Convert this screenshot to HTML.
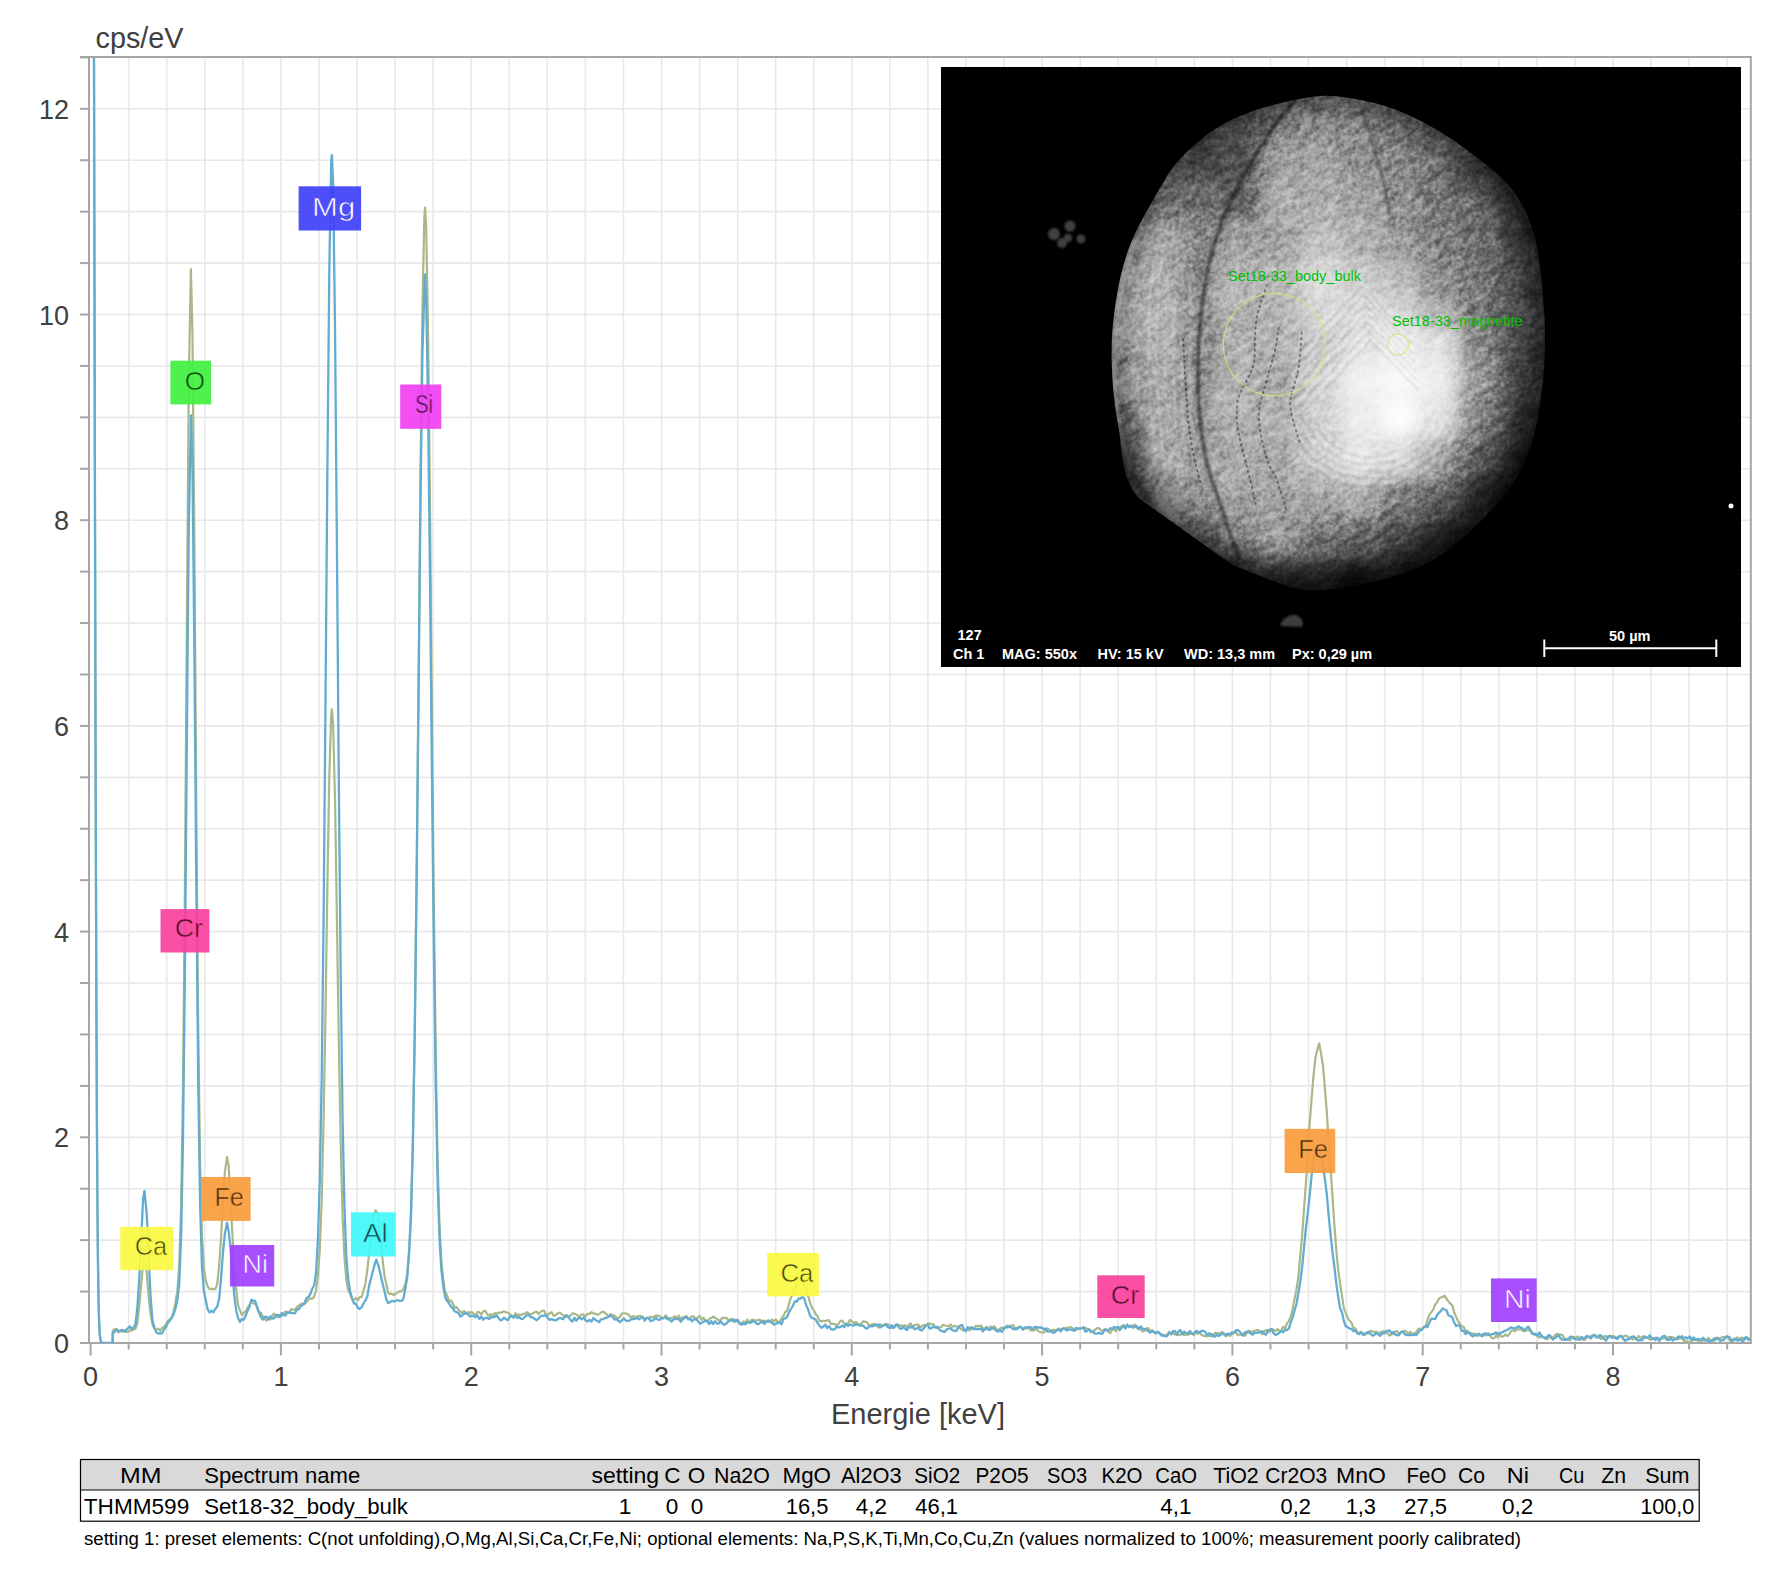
<!DOCTYPE html>
<html><head><meta charset="utf-8"><style>
html,body{margin:0;padding:0;background:#fff;}
body{width:1782px;height:1578px;overflow:hidden;position:relative;}
svg{position:absolute;left:0;top:0;}
text{font-family:"Liberation Sans",sans-serif;}
</style></head><body>
<svg width="1782" height="1578" viewBox="0 0 1782 1578">
<g stroke="#e8e8e8" stroke-width="1.6"><line x1="128.66" y1="57.0" x2="128.66" y2="1343.0"/><line x1="166.72" y1="57.0" x2="166.72" y2="1343.0"/><line x1="204.78" y1="57.0" x2="204.78" y2="1343.0"/><line x1="242.84" y1="57.0" x2="242.84" y2="1343.0"/><line x1="280.90" y1="57.0" x2="280.90" y2="1343.0"/><line x1="318.96" y1="57.0" x2="318.96" y2="1343.0"/><line x1="357.02" y1="57.0" x2="357.02" y2="1343.0"/><line x1="395.08" y1="57.0" x2="395.08" y2="1343.0"/><line x1="433.14" y1="57.0" x2="433.14" y2="1343.0"/><line x1="471.20" y1="57.0" x2="471.20" y2="1343.0"/><line x1="509.26" y1="57.0" x2="509.26" y2="1343.0"/><line x1="547.32" y1="57.0" x2="547.32" y2="1343.0"/><line x1="585.38" y1="57.0" x2="585.38" y2="1343.0"/><line x1="623.44" y1="57.0" x2="623.44" y2="1343.0"/><line x1="661.50" y1="57.0" x2="661.50" y2="1343.0"/><line x1="699.56" y1="57.0" x2="699.56" y2="1343.0"/><line x1="737.62" y1="57.0" x2="737.62" y2="1343.0"/><line x1="775.68" y1="57.0" x2="775.68" y2="1343.0"/><line x1="813.74" y1="57.0" x2="813.74" y2="1343.0"/><line x1="851.80" y1="57.0" x2="851.80" y2="1343.0"/><line x1="889.86" y1="57.0" x2="889.86" y2="1343.0"/><line x1="927.92" y1="57.0" x2="927.92" y2="1343.0"/><line x1="965.98" y1="57.0" x2="965.98" y2="1343.0"/><line x1="1004.04" y1="57.0" x2="1004.04" y2="1343.0"/><line x1="1042.10" y1="57.0" x2="1042.10" y2="1343.0"/><line x1="1080.16" y1="57.0" x2="1080.16" y2="1343.0"/><line x1="1118.22" y1="57.0" x2="1118.22" y2="1343.0"/><line x1="1156.28" y1="57.0" x2="1156.28" y2="1343.0"/><line x1="1194.34" y1="57.0" x2="1194.34" y2="1343.0"/><line x1="1232.40" y1="57.0" x2="1232.40" y2="1343.0"/><line x1="1270.46" y1="57.0" x2="1270.46" y2="1343.0"/><line x1="1308.52" y1="57.0" x2="1308.52" y2="1343.0"/><line x1="1346.58" y1="57.0" x2="1346.58" y2="1343.0"/><line x1="1384.64" y1="57.0" x2="1384.64" y2="1343.0"/><line x1="1422.70" y1="57.0" x2="1422.70" y2="1343.0"/><line x1="1460.76" y1="57.0" x2="1460.76" y2="1343.0"/><line x1="1498.82" y1="57.0" x2="1498.82" y2="1343.0"/><line x1="1536.88" y1="57.0" x2="1536.88" y2="1343.0"/><line x1="1574.94" y1="57.0" x2="1574.94" y2="1343.0"/><line x1="1613.00" y1="57.0" x2="1613.00" y2="1343.0"/><line x1="1651.06" y1="57.0" x2="1651.06" y2="1343.0"/><line x1="1689.12" y1="57.0" x2="1689.12" y2="1343.0"/><line x1="1727.18" y1="57.0" x2="1727.18" y2="1343.0"/><line x1="89" y1="1291.58" x2="1750.8" y2="1291.58"/><line x1="89" y1="1240.15" x2="1750.8" y2="1240.15"/><line x1="89" y1="1188.72" x2="1750.8" y2="1188.72"/><line x1="89" y1="1137.30" x2="1750.8" y2="1137.30"/><line x1="89" y1="1085.88" x2="1750.8" y2="1085.88"/><line x1="89" y1="1034.45" x2="1750.8" y2="1034.45"/><line x1="89" y1="983.03" x2="1750.8" y2="983.03"/><line x1="89" y1="931.60" x2="1750.8" y2="931.60"/><line x1="89" y1="880.17" x2="1750.8" y2="880.17"/><line x1="89" y1="828.75" x2="1750.8" y2="828.75"/><line x1="89" y1="777.33" x2="1750.8" y2="777.33"/><line x1="89" y1="725.90" x2="1750.8" y2="725.90"/><line x1="89" y1="674.48" x2="1750.8" y2="674.48"/><line x1="89" y1="623.05" x2="1750.8" y2="623.05"/><line x1="89" y1="571.62" x2="1750.8" y2="571.62"/><line x1="89" y1="520.20" x2="1750.8" y2="520.20"/><line x1="89" y1="468.78" x2="1750.8" y2="468.78"/><line x1="89" y1="417.35" x2="1750.8" y2="417.35"/><line x1="89" y1="365.93" x2="1750.8" y2="365.93"/><line x1="89" y1="314.50" x2="1750.8" y2="314.50"/><line x1="89" y1="263.08" x2="1750.8" y2="263.08"/><line x1="89" y1="211.65" x2="1750.8" y2="211.65"/><line x1="89" y1="160.23" x2="1750.8" y2="160.23"/><line x1="89" y1="108.80" x2="1750.8" y2="108.80"/></g>
<g stroke="#a6a6a6" stroke-width="2"><line x1="80" y1="1343.00" x2="89" y2="1343.00"/><line x1="80" y1="1291.58" x2="89" y2="1291.58"/><line x1="80" y1="1240.15" x2="89" y2="1240.15"/><line x1="80" y1="1188.72" x2="89" y2="1188.72"/><line x1="80" y1="1137.30" x2="89" y2="1137.30"/><line x1="80" y1="1085.88" x2="89" y2="1085.88"/><line x1="80" y1="1034.45" x2="89" y2="1034.45"/><line x1="80" y1="983.03" x2="89" y2="983.03"/><line x1="80" y1="931.60" x2="89" y2="931.60"/><line x1="80" y1="880.17" x2="89" y2="880.17"/><line x1="80" y1="828.75" x2="89" y2="828.75"/><line x1="80" y1="777.33" x2="89" y2="777.33"/><line x1="80" y1="725.90" x2="89" y2="725.90"/><line x1="80" y1="674.48" x2="89" y2="674.48"/><line x1="80" y1="623.05" x2="89" y2="623.05"/><line x1="80" y1="571.62" x2="89" y2="571.62"/><line x1="80" y1="520.20" x2="89" y2="520.20"/><line x1="80" y1="468.78" x2="89" y2="468.78"/><line x1="80" y1="417.35" x2="89" y2="417.35"/><line x1="80" y1="365.93" x2="89" y2="365.93"/><line x1="80" y1="314.50" x2="89" y2="314.50"/><line x1="80" y1="263.08" x2="89" y2="263.08"/><line x1="80" y1="211.65" x2="89" y2="211.65"/><line x1="80" y1="160.23" x2="89" y2="160.23"/><line x1="80" y1="108.80" x2="89" y2="108.80"/><line x1="80" y1="57.38" x2="89" y2="57.38"/><line x1="90.60" y1="1343.0" x2="90.60" y2="1355.5"/><line x1="128.66" y1="1343.0" x2="128.66" y2="1349.5"/><line x1="166.72" y1="1343.0" x2="166.72" y2="1349.5"/><line x1="204.78" y1="1343.0" x2="204.78" y2="1349.5"/><line x1="242.84" y1="1343.0" x2="242.84" y2="1349.5"/><line x1="280.90" y1="1343.0" x2="280.90" y2="1355.5"/><line x1="318.96" y1="1343.0" x2="318.96" y2="1349.5"/><line x1="357.02" y1="1343.0" x2="357.02" y2="1349.5"/><line x1="395.08" y1="1343.0" x2="395.08" y2="1349.5"/><line x1="433.14" y1="1343.0" x2="433.14" y2="1349.5"/><line x1="471.20" y1="1343.0" x2="471.20" y2="1355.5"/><line x1="509.26" y1="1343.0" x2="509.26" y2="1349.5"/><line x1="547.32" y1="1343.0" x2="547.32" y2="1349.5"/><line x1="585.38" y1="1343.0" x2="585.38" y2="1349.5"/><line x1="623.44" y1="1343.0" x2="623.44" y2="1349.5"/><line x1="661.50" y1="1343.0" x2="661.50" y2="1355.5"/><line x1="699.56" y1="1343.0" x2="699.56" y2="1349.5"/><line x1="737.62" y1="1343.0" x2="737.62" y2="1349.5"/><line x1="775.68" y1="1343.0" x2="775.68" y2="1349.5"/><line x1="813.74" y1="1343.0" x2="813.74" y2="1349.5"/><line x1="851.80" y1="1343.0" x2="851.80" y2="1355.5"/><line x1="889.86" y1="1343.0" x2="889.86" y2="1349.5"/><line x1="927.92" y1="1343.0" x2="927.92" y2="1349.5"/><line x1="965.98" y1="1343.0" x2="965.98" y2="1349.5"/><line x1="1004.04" y1="1343.0" x2="1004.04" y2="1349.5"/><line x1="1042.10" y1="1343.0" x2="1042.10" y2="1355.5"/><line x1="1080.16" y1="1343.0" x2="1080.16" y2="1349.5"/><line x1="1118.22" y1="1343.0" x2="1118.22" y2="1349.5"/><line x1="1156.28" y1="1343.0" x2="1156.28" y2="1349.5"/><line x1="1194.34" y1="1343.0" x2="1194.34" y2="1349.5"/><line x1="1232.40" y1="1343.0" x2="1232.40" y2="1355.5"/><line x1="1270.46" y1="1343.0" x2="1270.46" y2="1349.5"/><line x1="1308.52" y1="1343.0" x2="1308.52" y2="1349.5"/><line x1="1346.58" y1="1343.0" x2="1346.58" y2="1349.5"/><line x1="1384.64" y1="1343.0" x2="1384.64" y2="1349.5"/><line x1="1422.70" y1="1343.0" x2="1422.70" y2="1355.5"/><line x1="1460.76" y1="1343.0" x2="1460.76" y2="1349.5"/><line x1="1498.82" y1="1343.0" x2="1498.82" y2="1349.5"/><line x1="1536.88" y1="1343.0" x2="1536.88" y2="1349.5"/><line x1="1574.94" y1="1343.0" x2="1574.94" y2="1349.5"/><line x1="1613.00" y1="1343.0" x2="1613.00" y2="1355.5"/><line x1="1651.06" y1="1343.0" x2="1651.06" y2="1349.5"/><line x1="1689.12" y1="1343.0" x2="1689.12" y2="1349.5"/><line x1="1727.18" y1="1343.0" x2="1727.18" y2="1349.5"/>
<line x1="80" y1="57" x2="1751.8" y2="57"/>
<line x1="89" y1="56" x2="89" y2="1344"/>
<line x1="80" y1="1343.0" x2="1751.8" y2="1343.0"/>
<line x1="1750.8" y1="56" x2="1750.8" y2="1344"/>
</g>
<g fill="#404040" font-size="27"><text x="69" y="1353.0" text-anchor="end">0</text><text x="69" y="1147.3" text-anchor="end">2</text><text x="69" y="941.6" text-anchor="end">4</text><text x="69" y="735.9" text-anchor="end">6</text><text x="69" y="530.2" text-anchor="end">8</text><text x="69" y="324.5" text-anchor="end">10</text><text x="69" y="118.8" text-anchor="end">12</text><text x="90.6" y="1386" text-anchor="middle">0</text><text x="280.9" y="1386" text-anchor="middle">1</text><text x="471.2" y="1386" text-anchor="middle">2</text><text x="661.5" y="1386" text-anchor="middle">3</text><text x="851.8" y="1386" text-anchor="middle">4</text><text x="1042.1" y="1386" text-anchor="middle">5</text><text x="1232.4" y="1386" text-anchor="middle">6</text><text x="1422.7" y="1386" text-anchor="middle">7</text><text x="1613.0" y="1386" text-anchor="middle">8</text></g>
<text x="95.5" y="47.5" fill="#404040" font-size="29.5" textLength="88" lengthAdjust="spacingAndGlyphs">cps/eV</text>
<text x="831" y="1423.6" fill="#404040" font-size="29" textLength="174" lengthAdjust="spacingAndGlyphs">Energie [keV]</text>
<clipPath id="plotclip"><rect x="89" y="58" width="1661.8" height="1285.0"/></clipPath>
<g clip-path="url(#plotclip)" fill="none" stroke-linejoin="round">
<path d="M92.0 40.0L92.5 40.0L93.0 40.0L93.5 40.0L94.0 60.3L94.5 289.6L95.0 515.0L95.5 720.0L96.0 894.3L96.5 1033.7L97.0 1138.9L97.5 1214.1L98.0 1265.1L98.5 1297.9L99.0 1318.0L99.5 1329.8L100.0 1336.3L100.5 1339.7L101.0 1341.5L101.5 1342.3L101.9 1343.0L112.6 1343.0L112.7 1330.6L114.6 1329.3L116.5 1328.9L118.4 1332.5L120.3 1331.2L122.2 1331.3L124.1 1330.6L126.0 1332.0L127.9 1332.0L129.8 1330.4L131.7 1330.7L133.6 1329.3L135.5 1329.0L137.4 1322.9L139.3 1305.6L141.2 1284.2L143.1 1264.1L144.5 1258.7L146.9 1274.0L148.8 1298.9L150.7 1314.9L152.6 1325.0L154.5 1328.6L156.4 1329.9L158.3 1328.6L160.2 1330.8L162.1 1327.9L164.0 1327.2L165.9 1324.4L167.8 1321.1L169.7 1319.5L171.6 1317.7L173.5 1311.5L175.4 1303.0L177.3 1291.1L179.2 1266.2L181.1 1206.3L183.0 1087.7L184.9 888.3L186.8 629.9L188.7 388.6L190.9 269.2L192.5 335.2L194.4 544.2L196.3 804.8L198.2 1024.7L200.1 1165.3L202.0 1236.3L203.9 1268.5L205.8 1280.6L207.7 1286.3L209.6 1289.2L211.5 1288.6L213.4 1289.3L215.3 1289.0L217.2 1284.3L219.1 1266.3L221.0 1238.8L222.9 1202.7L224.8 1172.7L227.0 1156.8L228.6 1165.1L230.5 1197.2L232.4 1234.5L234.3 1270.8L236.2 1290.0L238.1 1305.2L240.0 1310.5L241.9 1314.9L243.8 1312.8L245.7 1311.5L247.6 1307.6L249.5 1305.0L251.4 1302.2L253.3 1303.5L255.2 1303.5L257.1 1307.0L259.0 1312.4L260.9 1312.7L262.8 1316.3L264.7 1318.9L266.6 1320.6L268.5 1319.2L270.4 1319.4L272.3 1315.5L274.2 1313.6L276.1 1316.0L278.0 1317.2L279.9 1315.3L281.8 1315.9L283.7 1313.9L285.6 1311.4L287.5 1312.8L289.4 1312.2L291.3 1309.1L293.2 1309.7L295.1 1310.0L297.0 1306.9L298.9 1305.5L300.8 1303.9L302.7 1303.6L304.6 1304.1L306.5 1302.1L308.4 1299.6L310.3 1298.4L312.2 1298.8L314.1 1296.6L316.0 1290.5L317.9 1275.9L319.8 1249.7L321.7 1200.4L323.6 1118.9L325.5 1011.6L327.4 885.1L329.3 776.1L331.2 714.5L331.9 709.4L333.1 724.7L335.0 798.6L336.9 919.2L338.8 1041.6L340.7 1144.3L342.6 1217.2L344.5 1258.5L346.4 1280.4L348.3 1290.7L350.2 1293.9L352.1 1299.0L354.0 1299.6L355.9 1298.0L357.8 1300.5L359.7 1297.1L361.6 1297.0L363.5 1290.6L365.4 1283.7L367.3 1269.8L369.2 1252.5L371.1 1235.9L373.0 1218.3L375.4 1210.3L376.8 1212.1L378.7 1223.8L380.6 1240.9L382.5 1259.0L384.4 1275.4L386.3 1283.8L388.2 1293.3L390.1 1293.8L392.0 1293.8L393.9 1295.1L395.8 1293.4L397.7 1292.4L399.6 1291.3L401.5 1291.3L403.4 1289.1L405.3 1284.1L407.2 1273.9L409.1 1249.6L411.0 1210.7L412.9 1139.5L414.8 1026.5L416.7 866.3L418.6 674.1L420.5 473.9L422.4 309.0L424.3 218.2L425.1 207.5L426.2 227.6L428.1 333.5L430.0 505.7L431.9 708.5L433.8 900.4L435.7 1051.5L437.6 1159.6L439.5 1224.6L441.4 1262.2L443.3 1279.9L445.2 1292.1L447.1 1295.4L449.0 1300.9L450.9 1300.5L452.8 1303.1L454.7 1308.0L456.6 1307.0L458.5 1309.9L460.4 1311.2L462.3 1313.3L464.2 1310.9L466.1 1313.8L468.0 1312.0L469.9 1313.0L471.8 1312.1L473.7 1313.7L475.6 1315.5L477.5 1312.1L479.4 1312.1L481.3 1314.5L483.2 1311.5L485.1 1310.6L487.0 1313.9L488.9 1316.0L490.8 1314.0L492.7 1315.5L494.6 1313.2L496.5 1313.6L498.4 1312.6L500.3 1312.9L502.2 1312.0L504.1 1311.4L506.0 1312.3L507.9 1312.7L509.8 1314.2L511.7 1315.7L513.6 1316.6L515.5 1313.2L517.4 1315.0L519.3 1314.7L521.2 1315.1L523.1 1313.8L525.0 1313.7L526.9 1312.1L528.8 1313.5L530.7 1314.5L532.6 1313.5L534.5 1312.6L536.4 1311.4L538.3 1313.9L540.2 1312.1L542.1 1310.9L544.0 1310.5L545.9 1314.5L547.8 1314.9L549.7 1313.1L551.6 1312.2L553.5 1315.7L555.4 1315.4L557.3 1313.6L559.2 1312.8L561.1 1313.5L563.0 1315.5L564.9 1315.3L566.8 1316.9L568.7 1316.4L570.6 1315.6L572.5 1313.3L574.4 1313.6L576.3 1314.6L578.2 1315.8L580.1 1316.0L582.0 1314.3L583.9 1314.8L585.8 1316.3L587.7 1313.7L589.6 1313.9L591.5 1312.1L593.4 1313.5L595.3 1313.6L597.2 1314.7L599.1 1314.2L601.0 1312.5L602.9 1311.5L604.8 1312.7L606.7 1314.4L608.6 1316.8L610.5 1314.0L612.4 1315.1L614.3 1315.6L616.2 1317.4L618.1 1318.3L620.0 1316.9L621.9 1313.5L623.8 1313.4L625.7 1313.5L627.6 1313.9L629.5 1316.0L631.4 1317.4L633.3 1315.9L635.2 1318.0L637.1 1316.3L639.0 1316.0L640.9 1315.9L642.8 1317.9L644.7 1319.1L646.6 1317.6L648.5 1318.6L650.4 1316.7L652.3 1317.6L654.2 1316.5L656.1 1315.4L658.0 1315.8L659.9 1316.4L661.8 1318.3L663.7 1318.4L665.6 1315.3L667.5 1317.7L669.4 1318.6L671.3 1318.0L673.2 1317.5L675.1 1316.2L677.0 1318.2L678.9 1315.7L680.8 1319.4L682.7 1317.2L684.6 1317.4L686.5 1316.0L688.4 1319.1L690.3 1317.8L692.2 1316.0L694.1 1316.8L696.0 1319.8L697.9 1317.1L699.8 1315.9L701.7 1319.7L703.6 1317.7L705.5 1320.7L707.4 1321.9L709.3 1318.9L711.2 1318.1L713.1 1316.7L715.0 1317.8L716.9 1318.9L718.8 1320.6L720.7 1319.8L722.6 1317.5L724.5 1318.3L726.4 1317.6L728.3 1320.7L730.2 1319.3L732.1 1318.8L734.0 1322.0L735.9 1319.6L737.8 1321.8L739.7 1322.6L741.6 1323.7L743.5 1321.3L745.4 1322.9L747.3 1319.5L749.2 1323.0L751.1 1320.4L753.0 1319.7L754.9 1320.4L756.8 1320.7L758.7 1319.7L760.6 1320.1L762.5 1322.8L764.4 1320.7L766.3 1322.0L768.2 1321.4L770.1 1321.5L772.0 1319.6L773.9 1321.2L775.8 1319.5L777.7 1322.2L779.6 1321.5L781.5 1318.5L783.4 1316.1L785.3 1311.9L787.2 1310.6L789.1 1303.6L791.0 1297.1L792.9 1294.0L794.8 1289.4L796.7 1283.1L798.6 1277.7L800.0 1279.2L802.4 1281.0L804.3 1285.0L806.2 1289.0L808.1 1295.9L810.0 1302.3L811.9 1307.7L813.8 1310.5L815.7 1314.0L817.6 1316.3L819.5 1320.8L821.4 1321.4L823.3 1320.7L825.2 1321.2L827.1 1320.3L829.0 1320.2L830.9 1324.0L832.8 1323.7L834.7 1324.3L836.6 1325.2L838.5 1324.0L840.4 1321.0L842.3 1320.6L844.2 1323.6L846.1 1323.8L848.0 1323.1L849.9 1320.1L851.8 1321.0L853.7 1323.0L855.6 1322.0L857.5 1323.4L859.4 1325.3L861.3 1323.6L863.2 1321.3L865.1 1321.7L867.0 1322.3L868.9 1325.5L870.8 1324.9L872.7 1324.4L874.6 1323.7L876.5 1325.0L878.4 1327.5L880.3 1324.2L882.2 1326.2L884.1 1324.7L886.0 1325.4L887.9 1324.2L889.8 1325.9L891.7 1327.9L893.6 1327.0L895.5 1326.4L897.4 1324.7L899.3 1325.9L901.2 1325.2L903.1 1326.3L905.0 1325.1L906.9 1327.3L908.8 1324.8L910.7 1323.5L912.6 1327.5L914.5 1325.1L916.4 1324.5L918.3 1324.7L920.2 1327.7L922.1 1325.9L924.0 1324.9L925.9 1325.3L927.8 1323.8L929.7 1323.4L931.6 1324.7L933.5 1323.9L935.4 1327.4L937.3 1328.1L939.2 1327.3L941.1 1327.0L943.0 1324.8L944.9 1325.5L946.8 1325.9L948.7 1326.0L950.6 1324.5L952.5 1326.7L954.4 1325.9L956.3 1326.3L958.2 1327.4L960.1 1328.2L962.0 1329.5L963.9 1330.7L965.8 1329.6L967.7 1329.4L969.6 1330.4L971.5 1328.9L973.4 1328.9L975.3 1326.1L977.2 1325.8L979.1 1326.2L981.0 1325.5L982.9 1328.1L984.8 1329.9L986.7 1328.3L988.6 1329.5L990.5 1326.3L992.4 1327.8L994.3 1326.2L996.2 1328.7L998.1 1330.5L1000.0 1328.6L1001.9 1327.5L1003.8 1329.3L1005.7 1326.7L1007.6 1325.5L1009.5 1326.4L1011.4 1325.4L1013.3 1325.0L1015.2 1329.0L1017.1 1327.7L1019.0 1327.2L1020.9 1327.0L1022.8 1328.9L1024.7 1328.7L1026.6 1328.5L1028.5 1327.1L1030.4 1330.5L1032.3 1330.3L1034.2 1330.5L1036.1 1328.3L1038.0 1330.8L1039.9 1332.1L1041.8 1332.3L1043.7 1332.5L1045.6 1331.0L1047.5 1328.3L1049.4 1329.7L1051.3 1331.6L1053.2 1329.6L1055.1 1330.4L1057.0 1329.6L1058.9 1328.5L1060.8 1329.5L1062.7 1328.5L1064.6 1328.8L1066.5 1327.7L1068.4 1327.8L1070.3 1327.1L1072.2 1327.7L1074.1 1330.2L1076.0 1330.1L1077.9 1328.8L1079.8 1328.3L1081.7 1328.3L1083.6 1327.8L1085.5 1327.8L1087.4 1329.2L1089.3 1329.3L1091.2 1332.3L1093.1 1331.4L1095.0 1329.8L1096.9 1328.3L1098.8 1328.0L1100.7 1329.9L1102.6 1331.7L1104.5 1329.2L1106.4 1329.3L1108.3 1331.6L1110.2 1333.2L1112.1 1329.5L1114.0 1329.3L1115.9 1331.3L1117.8 1327.4L1119.7 1327.4L1121.6 1326.2L1123.5 1325.0L1125.4 1326.9L1127.3 1326.1L1129.2 1327.3L1131.1 1325.6L1133.0 1325.9L1134.9 1324.6L1136.8 1327.7L1138.7 1329.0L1140.6 1329.1L1142.5 1331.5L1144.4 1330.9L1146.3 1328.3L1148.2 1328.1L1150.1 1331.6L1152.0 1330.0L1153.9 1332.5L1155.8 1333.5L1157.7 1332.1L1159.6 1333.2L1161.5 1334.2L1163.4 1335.2L1165.3 1335.2L1167.2 1335.2L1169.1 1331.6L1171.0 1334.6L1172.9 1333.3L1174.8 1334.5L1176.7 1332.4L1178.6 1335.2L1180.5 1334.5L1182.4 1332.5L1184.3 1335.2L1186.2 1334.4L1188.1 1334.6L1190.0 1333.9L1191.9 1332.9L1193.8 1335.2L1195.7 1332.2L1197.6 1334.0L1199.5 1332.2L1201.4 1334.7L1203.3 1335.9L1205.2 1335.9L1207.1 1336.4L1209.0 1335.8L1210.9 1336.1L1212.8 1336.5L1214.7 1332.9L1216.6 1333.0L1218.5 1333.3L1220.4 1333.3L1222.3 1331.8L1224.2 1335.0L1226.1 1336.3L1228.0 1333.7L1229.9 1336.0L1231.8 1334.4L1233.7 1333.2L1235.6 1331.6L1237.5 1335.1L1239.4 1334.5L1241.3 1334.7L1243.2 1333.4L1245.1 1335.6L1247.0 1332.9L1248.9 1330.8L1250.8 1331.9L1252.7 1331.7L1254.6 1330.7L1256.5 1330.2L1258.4 1330.1L1260.3 1331.6L1262.2 1334.1L1264.1 1331.5L1266.0 1330.1L1267.9 1330.1L1269.8 1331.9L1271.7 1329.2L1273.6 1329.7L1275.5 1331.2L1277.4 1329.2L1279.3 1330.8L1281.2 1330.8L1283.1 1326.8L1285.0 1328.3L1286.9 1323.3L1288.8 1321.3L1290.7 1316.3L1292.6 1309.1L1294.5 1298.9L1296.4 1290.1L1298.3 1276.8L1300.2 1256.9L1302.1 1235.6L1304.0 1209.5L1305.9 1182.9L1307.8 1154.4L1309.7 1123.5L1311.6 1098.6L1313.5 1075.6L1315.4 1058.1L1317.3 1049.7L1318.6 1045.2L1319.2 1043.5L1321.1 1053.8L1323.0 1065.6L1324.9 1088.4L1326.8 1111.9L1328.7 1142.7L1330.6 1169.6L1332.5 1196.3L1334.4 1225.3L1336.3 1250.2L1338.2 1269.9L1340.1 1283.6L1342.0 1295.8L1343.9 1308.4L1345.8 1313.2L1347.7 1318.2L1349.6 1320.7L1351.5 1322.7L1353.4 1328.3L1355.3 1328.2L1357.2 1332.0L1359.1 1332.9L1361.0 1331.8L1362.9 1333.1L1364.8 1333.8L1366.7 1333.6L1368.6 1333.1L1370.5 1330.8L1372.4 1331.6L1374.3 1332.1L1376.2 1331.6L1378.1 1334.1L1380.0 1332.2L1381.9 1331.7L1383.8 1331.3L1385.7 1333.0L1387.6 1333.2L1389.5 1335.7L1391.4 1334.8L1393.3 1333.6L1395.2 1331.6L1397.1 1331.1L1399.0 1333.6L1400.9 1332.6L1402.8 1331.7L1404.7 1330.8L1406.6 1331.7L1408.5 1333.8L1410.4 1331.7L1412.3 1334.9L1414.2 1333.1L1416.1 1332.5L1418.0 1329.4L1419.9 1328.5L1421.8 1329.0L1423.7 1327.8L1425.6 1326.1L1427.5 1319.8L1429.4 1314.7L1431.3 1312.2L1433.2 1309.6L1435.1 1304.6L1437.0 1302.5L1438.9 1298.7L1440.8 1297.4L1442.7 1297.0L1444.6 1295.7L1446.5 1298.7L1448.4 1301.4L1450.3 1303.6L1452.2 1305.1L1454.1 1312.1L1456.0 1316.6L1457.9 1320.8L1459.8 1324.1L1461.7 1326.2L1463.6 1326.7L1465.5 1331.0L1467.4 1330.8L1469.3 1332.7L1471.2 1333.2L1473.1 1333.9L1475.0 1333.9L1476.9 1336.2L1478.8 1335.0L1480.7 1335.6L1482.6 1334.1L1484.5 1334.4L1486.4 1335.5L1488.3 1333.1L1490.2 1336.1L1492.1 1338.1L1494.0 1338.4L1495.9 1335.6L1497.8 1337.4L1499.7 1334.8L1501.6 1336.8L1503.5 1336.3L1505.4 1334.3L1507.3 1336.1L1509.2 1334.5L1511.1 1330.7L1513.0 1330.2L1514.9 1331.4L1516.8 1329.1L1518.7 1329.7L1520.6 1328.7L1522.5 1330.6L1524.4 1331.4L1526.3 1330.4L1528.2 1330.0L1530.1 1330.5L1532.0 1333.8L1533.9 1334.2L1535.8 1335.2L1537.7 1336.3L1539.6 1337.7L1541.5 1335.3L1543.4 1337.5L1545.3 1337.5L1547.2 1339.3L1549.1 1336.7L1551.0 1336.1L1552.9 1338.6L1554.8 1335.3L1556.7 1333.8L1558.6 1334.5L1560.5 1334.5L1562.4 1335.0L1564.3 1338.6L1566.2 1338.8L1568.1 1339.1L1570.0 1340.3L1571.9 1337.8L1573.8 1337.0L1575.7 1337.9L1577.6 1336.3L1579.5 1338.2L1581.4 1338.8L1583.3 1339.9L1585.2 1339.7L1587.1 1336.6L1589.0 1337.2L1590.9 1336.2L1592.8 1335.2L1594.7 1335.8L1596.6 1337.6L1598.5 1335.3L1600.4 1338.8L1602.3 1338.6L1604.2 1336.2L1606.1 1336.2L1608.0 1337.9L1609.9 1336.3L1611.8 1336.0L1613.7 1336.0L1615.6 1338.3L1617.5 1337.2L1619.4 1336.9L1621.3 1335.9L1623.2 1337.1L1625.1 1335.5L1627.0 1335.9L1628.9 1338.6L1630.8 1337.9L1632.7 1339.5L1634.6 1338.1L1636.5 1339.0L1638.4 1336.0L1640.3 1338.1L1642.2 1336.7L1644.1 1336.0L1646.0 1338.0L1647.9 1337.7L1649.8 1339.4L1651.7 1339.4L1653.6 1339.0L1655.5 1337.6L1657.4 1338.0L1659.3 1339.9L1661.2 1338.3L1663.1 1338.3L1665.0 1338.3L1666.9 1338.7L1668.8 1336.8L1670.7 1337.1L1672.6 1337.2L1674.5 1338.0L1676.4 1338.8L1678.3 1339.1L1680.2 1337.9L1682.1 1338.7L1684.0 1340.8L1685.9 1340.9L1687.8 1341.8L1689.7 1342.2L1691.6 1340.8L1693.5 1340.2L1695.4 1339.6L1697.3 1340.6L1699.2 1340.9L1701.1 1339.9L1703.0 1340.3L1704.9 1340.7L1706.8 1339.7L1708.7 1337.9L1710.6 1340.7L1712.5 1342.1L1714.4 1340.5L1716.3 1337.7L1718.2 1337.9L1720.1 1339.3L1722.0 1336.8L1723.9 1337.3L1725.8 1336.8L1727.7 1336.5L1729.6 1340.4L1731.5 1341.2L1733.4 1338.6L1735.3 1339.5L1737.2 1337.4L1739.1 1340.6L1741.0 1337.7L1742.9 1338.1L1744.8 1339.3L1746.7 1337.7L1748.6 1338.5L1750.5 1339.3" stroke="#a9b888" stroke-width="2.2"/>
<path d="M92.0 40.0L92.5 40.0L93.0 40.0L93.5 40.0L94.0 60.3L94.5 289.6L95.0 515.0L95.5 720.0L96.0 894.3L96.5 1033.7L97.0 1138.9L97.5 1214.1L98.0 1265.1L98.5 1297.9L99.0 1318.0L99.5 1329.8L100.0 1336.3L100.5 1339.7L101.0 1341.5L101.5 1342.3L101.9 1343.0L112.6 1343.0L112.7 1333.0L114.6 1332.1L116.5 1329.6L118.4 1330.8L120.3 1330.7L122.2 1330.0L124.1 1331.5L126.0 1330.0L127.9 1328.4L129.8 1326.4L131.7 1328.8L133.6 1327.6L135.5 1324.0L137.4 1306.9L139.3 1277.6L141.2 1239.2L143.1 1198.8L144.5 1190.8L146.9 1216.2L148.8 1259.7L150.7 1298.8L152.6 1321.3L154.5 1327.9L156.4 1332.5L158.3 1333.5L160.2 1333.5L162.1 1333.2L164.0 1329.7L165.9 1327.2L167.8 1322.7L169.7 1321.0L171.6 1317.8L173.5 1314.6L175.4 1308.8L177.3 1301.0L179.2 1284.0L181.1 1236.3L183.0 1139.0L184.9 971.8L186.8 747.3L188.7 532.8L191.0 415.3L192.5 468.9L194.4 654.5L196.3 883.9L198.2 1080.8L200.1 1203.4L202.0 1267.6L203.9 1291.2L205.8 1300.7L207.7 1309.4L209.6 1312.5L211.5 1310.6L213.4 1312.3L215.3 1309.0L217.2 1306.8L219.1 1299.0L221.0 1279.0L222.9 1253.9L224.8 1234.1L227.0 1222.7L228.6 1230.9L230.5 1247.2L232.4 1271.6L234.3 1295.9L236.2 1310.2L238.1 1318.3L240.0 1321.9L241.9 1318.9L243.8 1319.7L245.7 1315.6L247.6 1310.8L249.5 1306.6L251.4 1299.7L253.3 1300.6L255.2 1301.0L257.1 1307.8L259.0 1312.2L260.9 1317.1L262.8 1319.6L264.7 1316.9L266.6 1316.7L268.5 1319.0L270.4 1316.4L272.3 1318.6L274.2 1318.1L276.1 1315.2L278.0 1314.8L279.9 1317.1L281.8 1313.0L283.7 1315.1L285.6 1315.3L287.5 1312.2L289.4 1312.9L291.3 1312.8L293.2 1313.4L295.1 1313.0L297.0 1309.5L298.9 1309.1L300.8 1306.1L302.7 1305.1L304.6 1303.0L306.5 1298.1L308.4 1297.1L310.3 1294.2L312.2 1288.9L314.1 1285.5L316.0 1273.1L317.9 1239.9L319.8 1179.9L321.7 1077.8L323.6 917.5L325.5 701.8L327.4 466.2L329.3 270.0L331.2 160.6L331.9 155.1L333.1 182.2L335.0 325.6L336.9 545.2L338.8 779.3L340.7 974.4L342.6 1120.3L344.5 1207.9L346.4 1258.2L348.3 1279.9L350.2 1291.5L352.1 1298.8L354.0 1303.5L355.9 1303.5L357.8 1307.8L359.7 1309.0L361.6 1307.1L363.5 1303.5L365.4 1300.4L367.3 1296.5L369.2 1285.4L371.1 1278.2L373.0 1270.8L374.9 1263.7L376.3 1259.7L378.7 1266.6L380.6 1274.6L382.5 1283.3L384.4 1290.8L386.3 1299.4L388.2 1303.1L390.1 1302.1L392.0 1300.9L393.9 1301.5L395.8 1300.8L397.7 1300.0L399.6 1301.1L401.5 1300.9L403.4 1298.7L405.3 1288.9L407.2 1277.3L409.1 1253.7L411.0 1216.3L412.9 1142.4L414.8 1030.2L416.7 874.2L418.6 690.8L420.5 500.6L422.4 354.5L424.9 274.4L426.2 298.1L428.1 407.4L430.0 578.9L431.9 770.5L433.8 945.5L435.7 1082.7L437.6 1180.7L439.5 1238.6L441.4 1269.9L443.3 1286.5L445.2 1297.4L447.1 1301.0L449.0 1303.1L450.9 1306.4L452.8 1308.4L454.7 1311.3L456.6 1312.2L458.5 1312.9L460.4 1316.6L462.3 1315.5L464.2 1313.3L466.1 1313.3L468.0 1314.2L469.9 1316.5L471.8 1315.6L473.7 1316.2L475.6 1317.2L477.5 1315.5L479.4 1318.9L481.3 1316.7L483.2 1319.7L485.1 1317.8L487.0 1317.8L488.9 1319.1L490.8 1317.1L492.7 1317.4L494.6 1316.9L496.5 1315.1L498.4 1317.9L500.3 1320.4L502.2 1319.8L504.1 1317.6L506.0 1319.3L507.9 1320.1L509.8 1316.5L511.7 1316.4L513.6 1317.6L515.5 1315.6L517.4 1317.9L519.3 1317.0L521.2 1319.1L523.1 1318.8L525.0 1316.6L526.9 1315.2L528.8 1314.8L530.7 1317.3L532.6 1317.3L534.5 1318.7L536.4 1320.2L538.3 1318.9L540.2 1316.6L542.1 1315.6L544.0 1316.0L545.9 1314.9L547.8 1318.0L549.7 1319.9L551.6 1319.1L553.5 1319.8L555.4 1320.4L557.3 1319.5L559.2 1318.1L561.1 1318.2L563.0 1319.3L564.9 1316.9L566.8 1315.2L568.7 1317.3L570.6 1320.2L572.5 1321.6L574.4 1317.7L576.3 1320.6L578.2 1318.2L580.1 1318.0L582.0 1319.3L583.9 1317.3L585.8 1320.6L587.7 1321.3L589.6 1319.9L591.5 1321.6L593.4 1318.0L595.3 1319.8L597.2 1321.0L599.1 1322.0L601.0 1319.3L602.9 1319.2L604.8 1318.2L606.7 1317.7L608.6 1316.7L610.5 1315.5L612.4 1316.5L614.3 1319.5L616.2 1319.2L618.1 1320.7L620.0 1322.2L621.9 1320.4L623.8 1318.4L625.7 1320.5L627.6 1320.9L629.5 1320.7L631.4 1318.8L633.3 1319.0L635.2 1318.6L637.1 1317.7L639.0 1319.4L640.9 1317.9L642.8 1316.8L644.7 1320.7L646.6 1317.8L648.5 1317.8L650.4 1321.0L652.3 1320.6L654.2 1319.6L656.1 1317.7L658.0 1319.8L659.9 1319.7L661.8 1318.0L663.7 1317.8L665.6 1317.0L667.5 1319.3L669.4 1319.2L671.3 1321.6L673.2 1319.8L675.1 1318.7L677.0 1319.2L678.9 1319.0L680.8 1321.7L682.7 1319.1L684.6 1317.7L686.5 1317.2L688.4 1319.4L690.3 1318.9L692.2 1321.3L694.1 1319.1L696.0 1318.6L697.9 1321.1L699.8 1323.6L701.7 1322.7L703.6 1321.8L705.5 1320.3L707.4 1321.3L709.3 1324.1L711.2 1321.1L713.1 1324.0L715.0 1321.2L716.9 1323.5L718.8 1323.6L720.7 1321.2L722.6 1323.8L724.5 1324.8L726.4 1323.3L728.3 1321.6L730.2 1320.3L732.1 1320.7L734.0 1319.5L735.9 1321.5L737.8 1319.8L739.7 1323.8L741.6 1324.8L743.5 1323.5L745.4 1324.3L747.3 1322.3L749.2 1322.1L751.1 1322.6L753.0 1321.1L754.9 1322.1L756.8 1323.8L758.7 1324.2L760.6 1321.9L762.5 1320.7L764.4 1323.9L766.3 1321.8L768.2 1320.3L770.1 1322.1L772.0 1322.5L773.9 1324.7L775.8 1323.6L777.7 1323.2L779.6 1322.2L781.5 1324.3L783.4 1319.2L785.3 1318.3L787.2 1316.8L789.1 1312.0L791.0 1309.0L792.9 1305.8L794.8 1301.4L796.7 1301.6L798.6 1298.6L800.5 1298.5L802.4 1296.9L804.3 1298.6L806.2 1305.2L808.1 1309.4L810.0 1315.3L811.9 1318.0L813.8 1318.6L815.7 1319.6L817.6 1323.0L819.5 1325.7L821.4 1327.8L823.3 1326.6L825.2 1324.6L827.1 1328.1L829.0 1326.0L830.9 1329.2L832.8 1329.5L834.7 1329.4L836.6 1326.7L838.5 1327.4L840.4 1327.2L842.3 1325.5L844.2 1327.2L846.1 1324.2L848.0 1326.0L849.9 1324.4L851.8 1325.1L853.7 1325.7L855.6 1324.4L857.5 1324.6L859.4 1325.3L861.3 1325.7L863.2 1325.6L865.1 1327.7L867.0 1328.6L868.9 1326.7L870.8 1326.1L872.7 1326.4L874.6 1324.9L876.5 1325.6L878.4 1324.5L880.3 1327.4L882.2 1325.9L884.1 1325.0L886.0 1324.1L887.9 1327.0L889.8 1328.1L891.7 1325.3L893.6 1328.0L895.5 1324.9L897.4 1324.3L899.3 1328.1L901.2 1329.1L903.1 1326.9L905.0 1328.6L906.9 1330.1L908.8 1326.8L910.7 1327.7L912.6 1326.1L914.5 1329.1L916.4 1328.8L918.3 1327.2L920.2 1330.1L922.1 1330.3L924.0 1327.9L925.9 1325.7L927.8 1324.5L929.7 1328.6L931.6 1328.2L933.5 1326.7L935.4 1327.5L937.3 1326.8L939.2 1329.3L941.1 1330.9L943.0 1331.4L944.9 1331.9L946.8 1329.4L948.7 1328.7L950.6 1328.1L952.5 1330.1L954.4 1330.8L956.3 1330.9L958.2 1327.6L960.1 1325.5L962.0 1325.0L963.9 1329.3L965.8 1331.2L967.7 1327.2L969.6 1328.3L971.5 1327.1L973.4 1329.0L975.3 1329.0L977.2 1328.8L979.1 1329.2L981.0 1328.4L982.9 1331.3L984.8 1328.8L986.7 1327.0L988.6 1329.9L990.5 1329.6L992.4 1328.0L994.3 1329.1L996.2 1330.7L998.1 1331.6L1000.0 1330.0L1001.9 1332.1L1003.8 1328.3L1005.7 1327.2L1007.6 1327.4L1009.5 1326.6L1011.4 1327.6L1013.3 1329.2L1015.2 1328.8L1017.1 1329.2L1019.0 1326.8L1020.9 1326.8L1022.8 1329.7L1024.7 1327.4L1026.6 1327.4L1028.5 1327.3L1030.4 1327.0L1032.3 1329.1L1034.2 1327.4L1036.1 1326.8L1038.0 1327.6L1039.9 1327.5L1041.8 1327.5L1043.7 1329.4L1045.6 1328.5L1047.5 1331.7L1049.4 1331.5L1051.3 1330.8L1053.2 1333.0L1055.1 1332.0L1057.0 1330.1L1058.9 1329.5L1060.8 1331.3L1062.7 1328.3L1064.6 1328.6L1066.5 1330.5L1068.4 1329.5L1070.3 1329.6L1072.2 1329.9L1074.1 1330.8L1076.0 1327.9L1077.9 1328.7L1079.8 1328.7L1081.7 1328.4L1083.6 1327.2L1085.5 1331.8L1087.4 1330.6L1089.3 1329.4L1091.2 1331.6L1093.1 1331.7L1095.0 1333.6L1096.9 1333.7L1098.8 1332.7L1100.7 1333.8L1102.6 1333.5L1104.5 1329.8L1106.4 1330.2L1108.3 1330.6L1110.2 1328.1L1112.1 1329.1L1114.0 1327.0L1115.9 1327.8L1117.8 1326.9L1119.7 1330.0L1121.6 1328.0L1123.5 1325.9L1125.4 1328.5L1127.3 1324.5L1129.2 1326.9L1131.1 1326.1L1133.0 1327.6L1134.9 1326.7L1136.8 1326.1L1138.7 1329.3L1140.6 1326.4L1142.5 1328.5L1144.4 1329.2L1146.3 1329.5L1148.2 1331.2L1150.1 1332.6L1152.0 1331.4L1153.9 1331.6L1155.8 1333.2L1157.7 1331.6L1159.6 1333.3L1161.5 1335.6L1163.4 1335.3L1165.3 1336.3L1167.2 1336.1L1169.1 1332.9L1171.0 1333.6L1172.9 1331.2L1174.8 1331.0L1176.7 1334.8L1178.6 1331.3L1180.5 1330.1L1182.4 1334.4L1184.3 1331.6L1186.2 1333.1L1188.1 1333.5L1190.0 1331.0L1191.9 1333.9L1193.8 1333.6L1195.7 1331.2L1197.6 1331.5L1199.5 1332.9L1201.4 1330.8L1203.3 1330.8L1205.2 1331.9L1207.1 1335.0L1209.0 1333.5L1210.9 1333.8L1212.8 1335.3L1214.7 1336.7L1216.6 1334.7L1218.5 1336.1L1220.4 1335.0L1222.3 1333.3L1224.2 1333.8L1226.1 1335.0L1228.0 1333.8L1229.9 1334.2L1231.8 1332.4L1233.7 1333.0L1235.6 1330.7L1237.5 1330.1L1239.4 1331.0L1241.3 1334.0L1243.2 1335.8L1245.1 1332.4L1247.0 1331.6L1248.9 1332.1L1250.8 1333.7L1252.7 1334.7L1254.6 1332.9L1256.5 1332.8L1258.4 1332.5L1260.3 1332.2L1262.2 1331.3L1264.1 1333.9L1266.0 1334.6L1267.9 1330.9L1269.8 1329.6L1271.7 1329.2L1273.6 1333.4L1275.5 1334.9L1277.4 1334.1L1279.3 1332.8L1281.2 1330.8L1283.1 1332.3L1285.0 1329.8L1286.9 1330.2L1288.8 1328.6L1290.7 1322.6L1292.6 1317.6L1294.5 1310.9L1296.4 1304.0L1298.3 1293.6L1300.2 1282.3L1302.1 1267.2L1304.0 1248.0L1305.9 1228.1L1307.8 1212.6L1309.7 1195.2L1311.6 1175.3L1313.5 1161.3L1315.4 1150.8L1317.3 1148.8L1318.0 1147.6L1319.2 1150.3L1321.1 1153.7L1323.0 1165.7L1324.9 1179.4L1326.8 1194.5L1328.7 1216.0L1330.6 1234.9L1332.5 1251.9L1334.4 1267.1L1336.3 1283.6L1338.2 1296.8L1340.1 1308.4L1342.0 1312.5L1343.9 1321.0L1345.8 1326.3L1347.7 1327.1L1349.6 1328.7L1351.5 1328.9L1353.4 1331.4L1355.3 1330.1L1357.2 1333.5L1359.1 1334.3L1361.0 1332.4L1362.9 1334.8L1364.8 1334.7L1366.7 1332.5L1368.6 1331.9L1370.5 1333.9L1372.4 1335.5L1374.3 1335.1L1376.2 1333.0L1378.1 1334.1L1380.0 1335.9L1381.9 1333.5L1383.8 1333.4L1385.7 1331.5L1387.6 1330.7L1389.5 1330.5L1391.4 1333.0L1393.3 1332.1L1395.2 1334.4L1397.1 1335.3L1399.0 1335.2L1400.9 1332.3L1402.8 1331.4L1404.7 1334.4L1406.6 1335.0L1408.5 1335.2L1410.4 1335.2L1412.3 1334.9L1414.2 1334.6L1416.1 1335.2L1418.0 1333.1L1419.9 1330.4L1421.8 1329.9L1423.7 1327.2L1425.6 1326.5L1427.5 1327.0L1429.4 1322.6L1431.3 1318.7L1433.2 1318.9L1435.1 1319.0L1437.0 1315.2L1438.9 1312.8L1440.8 1311.2L1442.7 1308.5L1444.6 1309.5L1446.5 1310.0L1448.4 1315.3L1450.3 1316.2L1452.2 1316.8L1454.1 1322.3L1456.0 1326.0L1457.9 1325.4L1459.8 1325.4L1461.7 1330.8L1463.6 1330.8L1465.5 1334.0L1467.4 1332.5L1469.3 1332.8L1471.2 1335.3L1473.1 1336.6L1475.0 1334.3L1476.9 1334.8L1478.8 1333.7L1480.7 1335.3L1482.6 1336.3L1484.5 1333.3L1486.4 1333.7L1488.3 1334.9L1490.2 1335.1L1492.1 1334.1L1494.0 1333.8L1495.9 1332.4L1497.8 1334.4L1499.7 1332.8L1501.6 1332.7L1503.5 1331.4L1505.4 1330.7L1507.3 1329.8L1509.2 1328.7L1511.1 1327.3L1513.0 1328.0L1514.9 1328.5L1516.8 1327.3L1518.7 1326.2L1520.6 1327.7L1522.5 1328.3L1524.4 1330.3L1526.3 1328.3L1528.2 1326.6L1530.1 1329.7L1532.0 1332.6L1533.9 1334.1L1535.8 1334.0L1537.7 1335.2L1539.6 1332.4L1541.5 1336.5L1543.4 1337.1L1545.3 1338.5L1547.2 1336.4L1549.1 1335.0L1551.0 1337.7L1552.9 1339.5L1554.8 1338.1L1556.7 1336.9L1558.6 1334.7L1560.5 1338.6L1562.4 1339.7L1564.3 1339.8L1566.2 1339.7L1568.1 1339.6L1570.0 1337.0L1571.9 1336.6L1573.8 1338.5L1575.7 1339.4L1577.6 1339.3L1579.5 1339.9L1581.4 1337.0L1583.3 1338.3L1585.2 1337.5L1587.1 1335.8L1589.0 1336.9L1590.9 1338.6L1592.8 1335.9L1594.7 1334.7L1596.6 1337.3L1598.5 1337.3L1600.4 1335.1L1602.3 1336.8L1604.2 1338.8L1606.1 1340.6L1608.0 1336.5L1609.9 1335.7L1611.8 1337.6L1613.7 1337.6L1615.6 1337.7L1617.5 1339.1L1619.4 1335.8L1621.3 1336.3L1623.2 1338.7L1625.1 1340.9L1627.0 1339.3L1628.9 1339.3L1630.8 1337.0L1632.7 1336.5L1634.6 1336.9L1636.5 1339.5L1638.4 1340.5L1640.3 1340.1L1642.2 1340.2L1644.1 1337.1L1646.0 1337.7L1647.9 1337.3L1649.8 1335.3L1651.7 1338.3L1653.6 1338.2L1655.5 1340.1L1657.4 1337.6L1659.3 1340.8L1661.2 1337.6L1663.1 1336.3L1665.0 1335.9L1666.9 1339.7L1668.8 1340.2L1670.7 1338.0L1672.6 1340.5L1674.5 1339.4L1676.4 1339.1L1678.3 1336.4L1680.2 1337.3L1682.1 1336.2L1684.0 1338.7L1685.9 1337.2L1687.8 1338.5L1689.7 1336.4L1691.6 1340.0L1693.5 1337.5L1695.4 1339.9L1697.3 1339.0L1699.2 1338.8L1701.1 1340.7L1703.0 1337.8L1704.9 1339.5L1706.8 1340.2L1708.7 1341.7L1710.6 1341.1L1712.5 1340.0L1714.4 1338.3L1716.3 1339.5L1718.2 1338.2L1720.1 1340.8L1722.0 1340.4L1723.9 1339.8L1725.8 1336.9L1727.7 1336.5L1729.6 1337.3L1731.5 1341.0L1733.4 1340.6L1735.3 1338.7L1737.2 1340.4L1739.1 1339.4L1741.0 1339.6L1742.9 1342.0L1744.8 1337.8L1746.7 1337.1L1748.6 1340.1L1750.5 1339.1" stroke="#62acd2" stroke-width="2.3"/>
</g>
<g font-size="26.5"><rect x="170.4" y="360.7" width="40.7" height="43.7" fill="#40f040" fill-opacity="0.92"/><text x="184.8" y="389.6" fill="#000" fill-opacity="0.72" stroke="#40f040" stroke-width="0.55" textLength="20.3" lengthAdjust="spacingAndGlyphs">O</text><rect x="298.6" y="186.3" width="62.5" height="44.2" fill="#4040f8" fill-opacity="0.92"/><text x="312.1" y="215.9" fill="#fff" fill-opacity="1" stroke="#4040f8" stroke-width="0.55" textLength="43.2" lengthAdjust="spacingAndGlyphs">Mg</text><rect x="400.2" y="384.5" width="41.1" height="44.3" fill="#f040f0" fill-opacity="0.92"/><text x="414.9" y="413.1" fill="#000" fill-opacity="0.72" stroke="#f040f0" stroke-width="0.55" textLength="18.1" lengthAdjust="spacingAndGlyphs">Si</text><rect x="160.5" y="909.1" width="48.9" height="43.4" fill="#f8409c" fill-opacity="0.92"/><text x="174.7" y="937.3" fill="#000" fill-opacity="0.72" stroke="#f8409c" stroke-width="0.55" textLength="28.3" lengthAdjust="spacingAndGlyphs">Cr</text><rect x="201" y="1177" width="49.6" height="43.9" fill="#f89c3c" fill-opacity="0.92"/><text x="214.4" y="1206.0" fill="#000" fill-opacity="0.72" stroke="#f89c3c" stroke-width="0.55" textLength="29.3" lengthAdjust="spacingAndGlyphs">Fe</text><rect x="120.3" y="1226.8" width="52.9" height="43.4" fill="#f8f840" fill-opacity="0.92"/><text x="134.7" y="1255.4" fill="#000" fill-opacity="0.72" stroke="#f8f840" stroke-width="0.55" textLength="32.5" lengthAdjust="spacingAndGlyphs">Ca</text><rect x="229.9" y="1245" width="44.3" height="41.5" fill="#a040ff" fill-opacity="0.92"/><text x="242.5" y="1273.4" fill="#fff" fill-opacity="1" stroke="#a040ff" stroke-width="0.55" textLength="25.4" lengthAdjust="spacingAndGlyphs">Ni</text><rect x="350.9" y="1212.3" width="44.7" height="44.2" fill="#40f8f8" fill-opacity="0.92"/><text x="363.0" y="1241.8" fill="#000" fill-opacity="0.72" stroke="#40f8f8" stroke-width="0.55" textLength="24.8" lengthAdjust="spacingAndGlyphs">Al</text><rect x="767.3" y="1253" width="51.6" height="43.3" fill="#f8f840" fill-opacity="0.92"/><text x="780.4" y="1281.6" fill="#000" fill-opacity="0.72" stroke="#f8f840" stroke-width="0.55" textLength="33.0" lengthAdjust="spacingAndGlyphs">Ca</text><rect x="1097.3" y="1275.3" width="47.4" height="42.7" fill="#f8409c" fill-opacity="0.92"/><text x="1110.8" y="1304.4" fill="#000" fill-opacity="0.72" stroke="#f8409c" stroke-width="0.55" textLength="28.4" lengthAdjust="spacingAndGlyphs">Cr</text><rect x="1284.6" y="1128.8" width="50.7" height="44.2" fill="#f89c3c" fill-opacity="0.92"/><text x="1298.2" y="1157.8" fill="#000" fill-opacity="0.72" stroke="#f89c3c" stroke-width="0.55" textLength="29.8" lengthAdjust="spacingAndGlyphs">Fe</text><rect x="1491" y="1278.4" width="45.7" height="43.6" fill="#a040ff" fill-opacity="0.92"/><text x="1504.0" y="1307.8" fill="#fff" fill-opacity="1" stroke="#a040ff" stroke-width="0.55" textLength="26.8" lengthAdjust="spacingAndGlyphs">Ni</text></g>
<g>
<defs>
<clipPath id="sphclip"><path d="M1323.6 95.8 C1335.6 95.5 1347.5 97.4 1359.5 99.7 C1371.5 102.0 1383.4 105.1 1395.4 109.6 C1407.4 114.1 1419.4 120.0 1431.3 126.7 C1443.2 133.4 1453.7 139.8 1467.0 150.0 C1480.3 160.2 1499.9 174.2 1511.0 188.0 C1522.1 201.8 1528.3 215.8 1533.6 233.0 C1538.9 250.2 1540.7 271.3 1542.6 291.5 C1544.5 311.7 1545.6 333.1 1544.8 354.0 C1544.0 374.9 1541.4 399.0 1538.0 417.0 C1534.6 435.0 1530.6 448.5 1524.6 462.0 C1518.6 475.5 1513.3 484.5 1502.0 498.0 C1490.7 511.5 1471.9 531.0 1457.0 543.0 C1442.1 555.0 1431.1 562.5 1412.4 570.0 C1393.7 577.5 1365.2 584.8 1345.0 587.8 C1324.8 590.8 1309.7 591.5 1291.0 587.8 L1232.8 565.3 L1138.5 498.0 C1119.4 474.8 1122.8 449.2 1118.3 426.0 C1113.8 402.8 1112.0 379.7 1111.6 358.8 C1111.2 337.9 1113.0 319.1 1116.0 300.4 C1119.0 281.7 1122.8 264.3 1129.5 246.6 C1136.2 228.9 1148.1 208.6 1156.5 194.0 C1164.9 179.4 1170.1 169.9 1180.0 159.0 C1189.9 148.1 1204.0 136.4 1216.0 128.5 C1228.0 120.6 1239.8 115.9 1251.8 111.4 C1263.8 106.9 1275.7 104.1 1287.7 101.5 C1299.7 98.9 1311.6 96.1 1323.6 95.8 Z"/></clipPath>
<filter id="blur2" x="-10%" y="-10%" width="120%" height="120%"><feGaussianBlur stdDeviation="1.2"/></filter>
<filter id="wob" x="-10%" y="-10%" width="120%" height="120%" filterUnits="objectBoundingBox"><feTurbulence type="fractalNoise" baseFrequency="0.06" numOctaves="2" seed="9" result="n"/><feDisplacementMap in="SourceGraphic" in2="n" scale="5" xChannelSelector="R" yChannelSelector="G" result="d"/><feGaussianBlur in="d" stdDeviation="1"/></filter>
<filter id="blur1" x="-5%" y="-5%" width="110%" height="110%"><feGaussianBlur stdDeviation="7"/></filter>
<radialGradient id="limb" cx="1325" cy="340" r="252" gradientTransform="translate(1325 340) scale(0.9 1) translate(-1325 -340)" gradientUnits="userSpaceOnUse">
<stop offset="0" stop-color="#000" stop-opacity="0"/>
<stop offset="0.85" stop-color="#000" stop-opacity="0"/>
<stop offset="0.97" stop-color="#000" stop-opacity="0.35"/>
<stop offset="1" stop-color="#000" stop-opacity="0.6"/>
</radialGradient>
<filter id="tex" color-interpolation-filters="sRGB" x="0" y="0" width="1" height="1" filterUnits="objectBoundingBox">
<feTurbulence type="fractalNoise" baseFrequency="0.07 0.16" numOctaves="3" seed="7" result="t"/>
<feColorMatrix in="t" type="matrix" values="1.8 0 0 0 -0.4  1.8 0 0 0 -0.4  1.8 0 0 0 -0.4  0 0 0 0 1"/>
</filter>
<filter id="tex2" color-interpolation-filters="sRGB" x="0" y="0" width="1" height="1" filterUnits="objectBoundingBox">
<feTurbulence type="fractalNoise" baseFrequency="0.25" numOctaves="2" seed="3" result="t"/>
<feColorMatrix in="t" type="matrix" values="2 0 0 0 -0.5  2 0 0 0 -0.5  2 0 0 0 -0.5  0 0 0 0 1"/>
</filter>
</defs>
<rect x="941" y="67" width="800" height="600" fill="#000"/>
<g clip-path="url(#sphclip)">
<g filter="url(#blur1)"><rect x="1100" y="84" width="10.5" height="10.5" fill="rgb(115,115,115)"/><rect x="1110" y="84" width="10.5" height="10.5" fill="rgb(112,112,112)"/><rect x="1120" y="84" width="10.5" height="10.5" fill="rgb(110,110,110)"/><rect x="1130" y="84" width="10.5" height="10.5" fill="rgb(107,107,107)"/><rect x="1140" y="84" width="10.5" height="10.5" fill="rgb(104,104,104)"/><rect x="1150" y="84" width="10.5" height="10.5" fill="rgb(102,102,102)"/><rect x="1160" y="84" width="10.5" height="10.5" fill="rgb(99,99,99)"/><rect x="1170" y="84" width="10.5" height="10.5" fill="rgb(97,97,97)"/><rect x="1180" y="84" width="10.5" height="10.5" fill="rgb(94,94,94)"/><rect x="1190" y="84" width="10.5" height="10.5" fill="rgb(93,93,93)"/><rect x="1200" y="84" width="10.5" height="10.5" fill="rgb(91,91,91)"/><rect x="1210" y="84" width="10.5" height="10.5" fill="rgb(91,91,91)"/><rect x="1220" y="84" width="10.5" height="10.5" fill="rgb(91,91,91)"/><rect x="1230" y="84" width="10.5" height="10.5" fill="rgb(90,90,90)"/><rect x="1240" y="84" width="10.5" height="10.5" fill="rgb(90,90,90)"/><rect x="1250" y="84" width="10.5" height="10.5" fill="rgb(92,92,92)"/><rect x="1260" y="84" width="10.5" height="10.5" fill="rgb(97,97,97)"/><rect x="1270" y="84" width="10.5" height="10.5" fill="rgb(102,102,102)"/><rect x="1280" y="84" width="10.5" height="10.5" fill="rgb(105,105,105)"/><rect x="1290" y="84" width="10.5" height="10.5" fill="rgb(108,108,108)"/><rect x="1300" y="84" width="10.5" height="10.5" fill="rgb(114,114,114)"/><rect x="1310" y="84" width="10.5" height="10.5" fill="rgb(116,116,116)"/><rect x="1320" y="84" width="10.5" height="10.5" fill="rgb(116,116,116)"/><rect x="1330" y="84" width="10.5" height="10.5" fill="rgb(117,117,117)"/><rect x="1340" y="84" width="10.5" height="10.5" fill="rgb(117,117,117)"/><rect x="1350" y="84" width="10.5" height="10.5" fill="rgb(113,113,113)"/><rect x="1360" y="84" width="10.5" height="10.5" fill="rgb(112,112,112)"/><rect x="1370" y="84" width="10.5" height="10.5" fill="rgb(112,112,112)"/><rect x="1380" y="84" width="10.5" height="10.5" fill="rgb(110,110,110)"/><rect x="1390" y="84" width="10.5" height="10.5" fill="rgb(107,107,107)"/><rect x="1400" y="84" width="10.5" height="10.5" fill="rgb(106,106,106)"/><rect x="1410" y="84" width="10.5" height="10.5" fill="rgb(106,106,106)"/><rect x="1420" y="84" width="10.5" height="10.5" fill="rgb(106,106,106)"/><rect x="1430" y="84" width="10.5" height="10.5" fill="rgb(104,104,104)"/><rect x="1440" y="84" width="10.5" height="10.5" fill="rgb(104,104,104)"/><rect x="1450" y="84" width="10.5" height="10.5" fill="rgb(103,103,103)"/><rect x="1460" y="84" width="10.5" height="10.5" fill="rgb(102,102,102)"/><rect x="1470" y="84" width="10.5" height="10.5" fill="rgb(101,101,101)"/><rect x="1480" y="84" width="10.5" height="10.5" fill="rgb(100,100,100)"/><rect x="1490" y="84" width="10.5" height="10.5" fill="rgb(99,99,99)"/><rect x="1500" y="84" width="10.5" height="10.5" fill="rgb(99,99,99)"/><rect x="1510" y="84" width="10.5" height="10.5" fill="rgb(99,99,99)"/><rect x="1520" y="84" width="10.5" height="10.5" fill="rgb(99,99,99)"/><rect x="1530" y="84" width="10.5" height="10.5" fill="rgb(99,99,99)"/><rect x="1540" y="84" width="10.5" height="10.5" fill="rgb(100,100,100)"/><rect x="1550" y="84" width="10.5" height="10.5" fill="rgb(100,100,100)"/><rect x="1100" y="94" width="10.5" height="10.5" fill="rgb(115,115,115)"/><rect x="1110" y="94" width="10.5" height="10.5" fill="rgb(112,112,112)"/><rect x="1120" y="94" width="10.5" height="10.5" fill="rgb(109,109,109)"/><rect x="1130" y="94" width="10.5" height="10.5" fill="rgb(106,106,106)"/><rect x="1140" y="94" width="10.5" height="10.5" fill="rgb(103,103,103)"/><rect x="1150" y="94" width="10.5" height="10.5" fill="rgb(100,100,100)"/><rect x="1160" y="94" width="10.5" height="10.5" fill="rgb(97,97,97)"/><rect x="1170" y="94" width="10.5" height="10.5" fill="rgb(94,94,94)"/><rect x="1180" y="94" width="10.5" height="10.5" fill="rgb(92,92,92)"/><rect x="1190" y="94" width="10.5" height="10.5" fill="rgb(90,90,90)"/><rect x="1200" y="94" width="10.5" height="10.5" fill="rgb(88,88,88)"/><rect x="1210" y="94" width="10.5" height="10.5" fill="rgb(88,88,88)"/><rect x="1220" y="94" width="10.5" height="10.5" fill="rgb(88,88,88)"/><rect x="1230" y="94" width="10.5" height="10.5" fill="rgb(87,87,87)"/><rect x="1240" y="94" width="10.5" height="10.5" fill="rgb(87,87,87)"/><rect x="1250" y="94" width="10.5" height="10.5" fill="rgb(88,88,88)"/><rect x="1260" y="94" width="10.5" height="10.5" fill="rgb(93,93,93)"/><rect x="1270" y="94" width="10.5" height="10.5" fill="rgb(101,101,101)"/><rect x="1280" y="94" width="10.5" height="10.5" fill="rgb(104,104,104)"/><rect x="1290" y="94" width="10.5" height="10.5" fill="rgb(107,107,107)"/><rect x="1300" y="94" width="10.5" height="10.5" fill="rgb(116,116,116)"/><rect x="1310" y="94" width="10.5" height="10.5" fill="rgb(117,117,117)"/><rect x="1320" y="94" width="10.5" height="10.5" fill="rgb(116,116,116)"/><rect x="1330" y="94" width="10.5" height="10.5" fill="rgb(120,120,120)"/><rect x="1340" y="94" width="10.5" height="10.5" fill="rgb(119,119,119)"/><rect x="1350" y="94" width="10.5" height="10.5" fill="rgb(112,112,112)"/><rect x="1360" y="94" width="10.5" height="10.5" fill="rgb(111,111,111)"/><rect x="1370" y="94" width="10.5" height="10.5" fill="rgb(112,112,112)"/><rect x="1380" y="94" width="10.5" height="10.5" fill="rgb(107,107,107)"/><rect x="1390" y="94" width="10.5" height="10.5" fill="rgb(104,104,104)"/><rect x="1400" y="94" width="10.5" height="10.5" fill="rgb(105,105,105)"/><rect x="1410" y="94" width="10.5" height="10.5" fill="rgb(105,105,105)"/><rect x="1420" y="94" width="10.5" height="10.5" fill="rgb(104,104,104)"/><rect x="1430" y="94" width="10.5" height="10.5" fill="rgb(102,102,102)"/><rect x="1440" y="94" width="10.5" height="10.5" fill="rgb(101,101,101)"/><rect x="1450" y="94" width="10.5" height="10.5" fill="rgb(100,100,100)"/><rect x="1460" y="94" width="10.5" height="10.5" fill="rgb(99,99,99)"/><rect x="1470" y="94" width="10.5" height="10.5" fill="rgb(98,98,98)"/><rect x="1480" y="94" width="10.5" height="10.5" fill="rgb(97,97,97)"/><rect x="1490" y="94" width="10.5" height="10.5" fill="rgb(97,97,97)"/><rect x="1500" y="94" width="10.5" height="10.5" fill="rgb(96,96,96)"/><rect x="1510" y="94" width="10.5" height="10.5" fill="rgb(96,96,96)"/><rect x="1520" y="94" width="10.5" height="10.5" fill="rgb(97,97,97)"/><rect x="1530" y="94" width="10.5" height="10.5" fill="rgb(97,97,97)"/><rect x="1540" y="94" width="10.5" height="10.5" fill="rgb(97,97,97)"/><rect x="1550" y="94" width="10.5" height="10.5" fill="rgb(98,98,98)"/><rect x="1100" y="104" width="10.5" height="10.5" fill="rgb(115,115,115)"/><rect x="1110" y="104" width="10.5" height="10.5" fill="rgb(112,112,112)"/><rect x="1120" y="104" width="10.5" height="10.5" fill="rgb(109,109,109)"/><rect x="1130" y="104" width="10.5" height="10.5" fill="rgb(106,106,106)"/><rect x="1140" y="104" width="10.5" height="10.5" fill="rgb(103,103,103)"/><rect x="1150" y="104" width="10.5" height="10.5" fill="rgb(99,99,99)"/><rect x="1160" y="104" width="10.5" height="10.5" fill="rgb(96,96,96)"/><rect x="1170" y="104" width="10.5" height="10.5" fill="rgb(93,93,93)"/><rect x="1180" y="104" width="10.5" height="10.5" fill="rgb(89,89,89)"/><rect x="1190" y="104" width="10.5" height="10.5" fill="rgb(87,87,87)"/><rect x="1200" y="104" width="10.5" height="10.5" fill="rgb(86,86,86)"/><rect x="1210" y="104" width="10.5" height="10.5" fill="rgb(85,85,85)"/><rect x="1220" y="104" width="10.5" height="10.5" fill="rgb(86,86,86)"/><rect x="1230" y="104" width="10.5" height="10.5" fill="rgb(86,86,86)"/><rect x="1240" y="104" width="10.5" height="10.5" fill="rgb(85,85,85)"/><rect x="1250" y="104" width="10.5" height="10.5" fill="rgb(86,86,86)"/><rect x="1260" y="104" width="10.5" height="10.5" fill="rgb(90,90,90)"/><rect x="1270" y="104" width="10.5" height="10.5" fill="rgb(100,100,100)"/><rect x="1280" y="104" width="10.5" height="10.5" fill="rgb(106,106,106)"/><rect x="1290" y="104" width="10.5" height="10.5" fill="rgb(116,116,116)"/><rect x="1300" y="104" width="10.5" height="10.5" fill="rgb(127,127,127)"/><rect x="1310" y="104" width="10.5" height="10.5" fill="rgb(123,123,123)"/><rect x="1320" y="104" width="10.5" height="10.5" fill="rgb(122,122,122)"/><rect x="1330" y="104" width="10.5" height="10.5" fill="rgb(132,132,132)"/><rect x="1340" y="104" width="10.5" height="10.5" fill="rgb(131,131,131)"/><rect x="1350" y="104" width="10.5" height="10.5" fill="rgb(120,120,120)"/><rect x="1360" y="104" width="10.5" height="10.5" fill="rgb(118,118,118)"/><rect x="1370" y="104" width="10.5" height="10.5" fill="rgb(116,116,116)"/><rect x="1380" y="104" width="10.5" height="10.5" fill="rgb(106,106,106)"/><rect x="1390" y="104" width="10.5" height="10.5" fill="rgb(103,103,103)"/><rect x="1400" y="104" width="10.5" height="10.5" fill="rgb(104,104,104)"/><rect x="1410" y="104" width="10.5" height="10.5" fill="rgb(104,104,104)"/><rect x="1420" y="104" width="10.5" height="10.5" fill="rgb(101,101,101)"/><rect x="1430" y="104" width="10.5" height="10.5" fill="rgb(99,99,99)"/><rect x="1440" y="104" width="10.5" height="10.5" fill="rgb(99,99,99)"/><rect x="1450" y="104" width="10.5" height="10.5" fill="rgb(98,98,98)"/><rect x="1460" y="104" width="10.5" height="10.5" fill="rgb(97,97,97)"/><rect x="1470" y="104" width="10.5" height="10.5" fill="rgb(95,95,95)"/><rect x="1480" y="104" width="10.5" height="10.5" fill="rgb(94,94,94)"/><rect x="1490" y="104" width="10.5" height="10.5" fill="rgb(93,93,93)"/><rect x="1500" y="104" width="10.5" height="10.5" fill="rgb(93,93,93)"/><rect x="1510" y="104" width="10.5" height="10.5" fill="rgb(93,93,93)"/><rect x="1520" y="104" width="10.5" height="10.5" fill="rgb(94,94,94)"/><rect x="1530" y="104" width="10.5" height="10.5" fill="rgb(94,94,94)"/><rect x="1540" y="104" width="10.5" height="10.5" fill="rgb(95,95,95)"/><rect x="1550" y="104" width="10.5" height="10.5" fill="rgb(95,95,95)"/><rect x="1100" y="114" width="10.5" height="10.5" fill="rgb(115,115,115)"/><rect x="1110" y="114" width="10.5" height="10.5" fill="rgb(112,112,112)"/><rect x="1120" y="114" width="10.5" height="10.5" fill="rgb(109,109,109)"/><rect x="1130" y="114" width="10.5" height="10.5" fill="rgb(106,106,106)"/><rect x="1140" y="114" width="10.5" height="10.5" fill="rgb(102,102,102)"/><rect x="1150" y="114" width="10.5" height="10.5" fill="rgb(99,99,99)"/><rect x="1160" y="114" width="10.5" height="10.5" fill="rgb(95,95,95)"/><rect x="1170" y="114" width="10.5" height="10.5" fill="rgb(92,92,92)"/><rect x="1180" y="114" width="10.5" height="10.5" fill="rgb(88,88,88)"/><rect x="1190" y="114" width="10.5" height="10.5" fill="rgb(85,85,85)"/><rect x="1200" y="114" width="10.5" height="10.5" fill="rgb(84,84,84)"/><rect x="1210" y="114" width="10.5" height="10.5" fill="rgb(84,84,84)"/><rect x="1220" y="114" width="10.5" height="10.5" fill="rgb(84,84,84)"/><rect x="1230" y="114" width="10.5" height="10.5" fill="rgb(86,86,86)"/><rect x="1240" y="114" width="10.5" height="10.5" fill="rgb(86,86,86)"/><rect x="1250" y="114" width="10.5" height="10.5" fill="rgb(87,87,87)"/><rect x="1260" y="114" width="10.5" height="10.5" fill="rgb(90,90,90)"/><rect x="1270" y="114" width="10.5" height="10.5" fill="rgb(99,99,99)"/><rect x="1280" y="114" width="10.5" height="10.5" fill="rgb(118,118,118)"/><rect x="1290" y="114" width="10.5" height="10.5" fill="rgb(133,133,133)"/><rect x="1300" y="114" width="10.5" height="10.5" fill="rgb(136,136,136)"/><rect x="1310" y="114" width="10.5" height="10.5" fill="rgb(133,133,133)"/><rect x="1320" y="114" width="10.5" height="10.5" fill="rgb(136,136,136)"/><rect x="1330" y="114" width="10.5" height="10.5" fill="rgb(142,142,142)"/><rect x="1340" y="114" width="10.5" height="10.5" fill="rgb(141,141,141)"/><rect x="1350" y="114" width="10.5" height="10.5" fill="rgb(132,132,132)"/><rect x="1360" y="114" width="10.5" height="10.5" fill="rgb(130,130,130)"/><rect x="1370" y="114" width="10.5" height="10.5" fill="rgb(122,122,122)"/><rect x="1380" y="114" width="10.5" height="10.5" fill="rgb(108,108,108)"/><rect x="1390" y="114" width="10.5" height="10.5" fill="rgb(106,106,106)"/><rect x="1400" y="114" width="10.5" height="10.5" fill="rgb(107,107,107)"/><rect x="1410" y="114" width="10.5" height="10.5" fill="rgb(104,104,104)"/><rect x="1420" y="114" width="10.5" height="10.5" fill="rgb(98,98,98)"/><rect x="1430" y="114" width="10.5" height="10.5" fill="rgb(97,97,97)"/><rect x="1440" y="114" width="10.5" height="10.5" fill="rgb(97,97,97)"/><rect x="1450" y="114" width="10.5" height="10.5" fill="rgb(96,96,96)"/><rect x="1460" y="114" width="10.5" height="10.5" fill="rgb(93,93,93)"/><rect x="1470" y="114" width="10.5" height="10.5" fill="rgb(91,91,91)"/><rect x="1480" y="114" width="10.5" height="10.5" fill="rgb(90,90,90)"/><rect x="1490" y="114" width="10.5" height="10.5" fill="rgb(90,90,90)"/><rect x="1500" y="114" width="10.5" height="10.5" fill="rgb(90,90,90)"/><rect x="1510" y="114" width="10.5" height="10.5" fill="rgb(90,90,90)"/><rect x="1520" y="114" width="10.5" height="10.5" fill="rgb(91,91,91)"/><rect x="1530" y="114" width="10.5" height="10.5" fill="rgb(91,91,91)"/><rect x="1540" y="114" width="10.5" height="10.5" fill="rgb(92,92,92)"/><rect x="1550" y="114" width="10.5" height="10.5" fill="rgb(93,93,93)"/><rect x="1100" y="124" width="10.5" height="10.5" fill="rgb(116,116,116)"/><rect x="1110" y="124" width="10.5" height="10.5" fill="rgb(113,113,113)"/><rect x="1120" y="124" width="10.5" height="10.5" fill="rgb(110,110,110)"/><rect x="1130" y="124" width="10.5" height="10.5" fill="rgb(106,106,106)"/><rect x="1140" y="124" width="10.5" height="10.5" fill="rgb(103,103,103)"/><rect x="1150" y="124" width="10.5" height="10.5" fill="rgb(99,99,99)"/><rect x="1160" y="124" width="10.5" height="10.5" fill="rgb(96,96,96)"/><rect x="1170" y="124" width="10.5" height="10.5" fill="rgb(92,92,92)"/><rect x="1180" y="124" width="10.5" height="10.5" fill="rgb(87,87,87)"/><rect x="1190" y="124" width="10.5" height="10.5" fill="rgb(83,83,83)"/><rect x="1200" y="124" width="10.5" height="10.5" fill="rgb(83,83,83)"/><rect x="1210" y="124" width="10.5" height="10.5" fill="rgb(83,83,83)"/><rect x="1220" y="124" width="10.5" height="10.5" fill="rgb(84,84,84)"/><rect x="1230" y="124" width="10.5" height="10.5" fill="rgb(86,86,86)"/><rect x="1240" y="124" width="10.5" height="10.5" fill="rgb(88,88,88)"/><rect x="1250" y="124" width="10.5" height="10.5" fill="rgb(89,89,89)"/><rect x="1260" y="124" width="10.5" height="10.5" fill="rgb(92,92,92)"/><rect x="1270" y="124" width="10.5" height="10.5" fill="rgb(105,105,105)"/><rect x="1280" y="124" width="10.5" height="10.5" fill="rgb(125,125,125)"/><rect x="1290" y="124" width="10.5" height="10.5" fill="rgb(135,135,135)"/><rect x="1300" y="124" width="10.5" height="10.5" fill="rgb(137,137,137)"/><rect x="1310" y="124" width="10.5" height="10.5" fill="rgb(138,138,138)"/><rect x="1320" y="124" width="10.5" height="10.5" fill="rgb(140,140,140)"/><rect x="1330" y="124" width="10.5" height="10.5" fill="rgb(143,143,143)"/><rect x="1340" y="124" width="10.5" height="10.5" fill="rgb(141,141,141)"/><rect x="1350" y="124" width="10.5" height="10.5" fill="rgb(134,134,134)"/><rect x="1360" y="124" width="10.5" height="10.5" fill="rgb(132,132,132)"/><rect x="1370" y="124" width="10.5" height="10.5" fill="rgb(124,124,124)"/><rect x="1380" y="124" width="10.5" height="10.5" fill="rgb(112,112,112)"/><rect x="1390" y="124" width="10.5" height="10.5" fill="rgb(109,109,109)"/><rect x="1400" y="124" width="10.5" height="10.5" fill="rgb(108,108,108)"/><rect x="1410" y="124" width="10.5" height="10.5" fill="rgb(104,104,104)"/><rect x="1420" y="124" width="10.5" height="10.5" fill="rgb(97,97,97)"/><rect x="1430" y="124" width="10.5" height="10.5" fill="rgb(97,97,97)"/><rect x="1440" y="124" width="10.5" height="10.5" fill="rgb(97,97,97)"/><rect x="1450" y="124" width="10.5" height="10.5" fill="rgb(94,94,94)"/><rect x="1460" y="124" width="10.5" height="10.5" fill="rgb(89,89,89)"/><rect x="1470" y="124" width="10.5" height="10.5" fill="rgb(87,87,87)"/><rect x="1480" y="124" width="10.5" height="10.5" fill="rgb(87,87,87)"/><rect x="1490" y="124" width="10.5" height="10.5" fill="rgb(87,87,87)"/><rect x="1500" y="124" width="10.5" height="10.5" fill="rgb(87,87,87)"/><rect x="1510" y="124" width="10.5" height="10.5" fill="rgb(87,87,87)"/><rect x="1520" y="124" width="10.5" height="10.5" fill="rgb(88,88,88)"/><rect x="1530" y="124" width="10.5" height="10.5" fill="rgb(88,88,88)"/><rect x="1540" y="124" width="10.5" height="10.5" fill="rgb(89,89,89)"/><rect x="1550" y="124" width="10.5" height="10.5" fill="rgb(90,90,90)"/><rect x="1100" y="134" width="10.5" height="10.5" fill="rgb(117,117,117)"/><rect x="1110" y="134" width="10.5" height="10.5" fill="rgb(114,114,114)"/><rect x="1120" y="134" width="10.5" height="10.5" fill="rgb(111,111,111)"/><rect x="1130" y="134" width="10.5" height="10.5" fill="rgb(107,107,107)"/><rect x="1140" y="134" width="10.5" height="10.5" fill="rgb(104,104,104)"/><rect x="1150" y="134" width="10.5" height="10.5" fill="rgb(100,100,100)"/><rect x="1160" y="134" width="10.5" height="10.5" fill="rgb(97,97,97)"/><rect x="1170" y="134" width="10.5" height="10.5" fill="rgb(94,94,94)"/><rect x="1180" y="134" width="10.5" height="10.5" fill="rgb(87,87,87)"/><rect x="1190" y="134" width="10.5" height="10.5" fill="rgb(79,79,79)"/><rect x="1200" y="134" width="10.5" height="10.5" fill="rgb(80,80,80)"/><rect x="1210" y="134" width="10.5" height="10.5" fill="rgb(82,82,82)"/><rect x="1220" y="134" width="10.5" height="10.5" fill="rgb(83,83,83)"/><rect x="1230" y="134" width="10.5" height="10.5" fill="rgb(84,84,84)"/><rect x="1240" y="134" width="10.5" height="10.5" fill="rgb(87,87,87)"/><rect x="1250" y="134" width="10.5" height="10.5" fill="rgb(94,94,94)"/><rect x="1260" y="134" width="10.5" height="10.5" fill="rgb(106,106,106)"/><rect x="1270" y="134" width="10.5" height="10.5" fill="rgb(126,126,126)"/><rect x="1280" y="134" width="10.5" height="10.5" fill="rgb(138,138,138)"/><rect x="1290" y="134" width="10.5" height="10.5" fill="rgb(140,140,140)"/><rect x="1300" y="134" width="10.5" height="10.5" fill="rgb(143,143,143)"/><rect x="1310" y="134" width="10.5" height="10.5" fill="rgb(147,147,147)"/><rect x="1320" y="134" width="10.5" height="10.5" fill="rgb(148,148,148)"/><rect x="1330" y="134" width="10.5" height="10.5" fill="rgb(145,145,145)"/><rect x="1340" y="134" width="10.5" height="10.5" fill="rgb(141,141,141)"/><rect x="1350" y="134" width="10.5" height="10.5" fill="rgb(138,138,138)"/><rect x="1360" y="134" width="10.5" height="10.5" fill="rgb(135,135,135)"/><rect x="1370" y="134" width="10.5" height="10.5" fill="rgb(129,129,129)"/><rect x="1380" y="134" width="10.5" height="10.5" fill="rgb(120,120,120)"/><rect x="1390" y="134" width="10.5" height="10.5" fill="rgb(115,115,115)"/><rect x="1400" y="134" width="10.5" height="10.5" fill="rgb(113,113,113)"/><rect x="1410" y="134" width="10.5" height="10.5" fill="rgb(108,108,108)"/><rect x="1420" y="134" width="10.5" height="10.5" fill="rgb(100,100,100)"/><rect x="1430" y="134" width="10.5" height="10.5" fill="rgb(99,99,99)"/><rect x="1440" y="134" width="10.5" height="10.5" fill="rgb(99,99,99)"/><rect x="1450" y="134" width="10.5" height="10.5" fill="rgb(91,91,91)"/><rect x="1460" y="134" width="10.5" height="10.5" fill="rgb(85,85,85)"/><rect x="1470" y="134" width="10.5" height="10.5" fill="rgb(84,84,84)"/><rect x="1480" y="134" width="10.5" height="10.5" fill="rgb(84,84,84)"/><rect x="1490" y="134" width="10.5" height="10.5" fill="rgb(84,84,84)"/><rect x="1500" y="134" width="10.5" height="10.5" fill="rgb(84,84,84)"/><rect x="1510" y="134" width="10.5" height="10.5" fill="rgb(84,84,84)"/><rect x="1520" y="134" width="10.5" height="10.5" fill="rgb(84,84,84)"/><rect x="1530" y="134" width="10.5" height="10.5" fill="rgb(85,85,85)"/><rect x="1540" y="134" width="10.5" height="10.5" fill="rgb(86,86,86)"/><rect x="1550" y="134" width="10.5" height="10.5" fill="rgb(87,87,87)"/><rect x="1100" y="144" width="10.5" height="10.5" fill="rgb(118,118,118)"/><rect x="1110" y="144" width="10.5" height="10.5" fill="rgb(115,115,115)"/><rect x="1120" y="144" width="10.5" height="10.5" fill="rgb(113,113,113)"/><rect x="1130" y="144" width="10.5" height="10.5" fill="rgb(109,109,109)"/><rect x="1140" y="144" width="10.5" height="10.5" fill="rgb(106,106,106)"/><rect x="1150" y="144" width="10.5" height="10.5" fill="rgb(102,102,102)"/><rect x="1160" y="144" width="10.5" height="10.5" fill="rgb(99,99,99)"/><rect x="1170" y="144" width="10.5" height="10.5" fill="rgb(97,97,97)"/><rect x="1180" y="144" width="10.5" height="10.5" fill="rgb(91,91,91)"/><rect x="1190" y="144" width="10.5" height="10.5" fill="rgb(73,73,73)"/><rect x="1200" y="144" width="10.5" height="10.5" fill="rgb(68,68,68)"/><rect x="1210" y="144" width="10.5" height="10.5" fill="rgb(76,76,76)"/><rect x="1220" y="144" width="10.5" height="10.5" fill="rgb(80,80,80)"/><rect x="1230" y="144" width="10.5" height="10.5" fill="rgb(79,79,79)"/><rect x="1240" y="144" width="10.5" height="10.5" fill="rgb(81,81,81)"/><rect x="1250" y="144" width="10.5" height="10.5" fill="rgb(96,96,96)"/><rect x="1260" y="144" width="10.5" height="10.5" fill="rgb(131,131,131)"/><rect x="1270" y="144" width="10.5" height="10.5" fill="rgb(154,154,154)"/><rect x="1280" y="144" width="10.5" height="10.5" fill="rgb(157,157,157)"/><rect x="1290" y="144" width="10.5" height="10.5" fill="rgb(154,154,154)"/><rect x="1300" y="144" width="10.5" height="10.5" fill="rgb(155,155,155)"/><rect x="1310" y="144" width="10.5" height="10.5" fill="rgb(160,160,160)"/><rect x="1320" y="144" width="10.5" height="10.5" fill="rgb(160,160,160)"/><rect x="1330" y="144" width="10.5" height="10.5" fill="rgb(153,153,153)"/><rect x="1340" y="144" width="10.5" height="10.5" fill="rgb(146,146,146)"/><rect x="1350" y="144" width="10.5" height="10.5" fill="rgb(144,144,144)"/><rect x="1360" y="144" width="10.5" height="10.5" fill="rgb(143,143,143)"/><rect x="1370" y="144" width="10.5" height="10.5" fill="rgb(137,137,137)"/><rect x="1380" y="144" width="10.5" height="10.5" fill="rgb(130,130,130)"/><rect x="1390" y="144" width="10.5" height="10.5" fill="rgb(129,129,129)"/><rect x="1400" y="144" width="10.5" height="10.5" fill="rgb(127,127,127)"/><rect x="1410" y="144" width="10.5" height="10.5" fill="rgb(119,119,119)"/><rect x="1420" y="144" width="10.5" height="10.5" fill="rgb(110,110,110)"/><rect x="1430" y="144" width="10.5" height="10.5" fill="rgb(109,109,109)"/><rect x="1440" y="144" width="10.5" height="10.5" fill="rgb(106,106,106)"/><rect x="1450" y="144" width="10.5" height="10.5" fill="rgb(90,90,90)"/><rect x="1460" y="144" width="10.5" height="10.5" fill="rgb(83,83,83)"/><rect x="1470" y="144" width="10.5" height="10.5" fill="rgb(82,82,82)"/><rect x="1480" y="144" width="10.5" height="10.5" fill="rgb(81,81,81)"/><rect x="1490" y="144" width="10.5" height="10.5" fill="rgb(81,81,81)"/><rect x="1500" y="144" width="10.5" height="10.5" fill="rgb(80,80,80)"/><rect x="1510" y="144" width="10.5" height="10.5" fill="rgb(80,80,80)"/><rect x="1520" y="144" width="10.5" height="10.5" fill="rgb(80,80,80)"/><rect x="1530" y="144" width="10.5" height="10.5" fill="rgb(81,81,81)"/><rect x="1540" y="144" width="10.5" height="10.5" fill="rgb(82,82,82)"/><rect x="1550" y="144" width="10.5" height="10.5" fill="rgb(84,84,84)"/><rect x="1100" y="154" width="10.5" height="10.5" fill="rgb(119,119,119)"/><rect x="1110" y="154" width="10.5" height="10.5" fill="rgb(117,117,117)"/><rect x="1120" y="154" width="10.5" height="10.5" fill="rgb(115,115,115)"/><rect x="1130" y="154" width="10.5" height="10.5" fill="rgb(112,112,112)"/><rect x="1140" y="154" width="10.5" height="10.5" fill="rgb(109,109,109)"/><rect x="1150" y="154" width="10.5" height="10.5" fill="rgb(105,105,105)"/><rect x="1160" y="154" width="10.5" height="10.5" fill="rgb(101,101,101)"/><rect x="1170" y="154" width="10.5" height="10.5" fill="rgb(100,100,100)"/><rect x="1180" y="154" width="10.5" height="10.5" fill="rgb(95,95,95)"/><rect x="1190" y="154" width="10.5" height="10.5" fill="rgb(69,69,69)"/><rect x="1200" y="154" width="10.5" height="10.5" fill="rgb(63,63,63)"/><rect x="1210" y="154" width="10.5" height="10.5" fill="rgb(70,70,70)"/><rect x="1220" y="154" width="10.5" height="10.5" fill="rgb(77,77,77)"/><rect x="1230" y="154" width="10.5" height="10.5" fill="rgb(76,76,76)"/><rect x="1240" y="154" width="10.5" height="10.5" fill="rgb(77,77,77)"/><rect x="1250" y="154" width="10.5" height="10.5" fill="rgb(94,94,94)"/><rect x="1260" y="154" width="10.5" height="10.5" fill="rgb(143,143,143)"/><rect x="1270" y="154" width="10.5" height="10.5" fill="rgb(161,161,161)"/><rect x="1280" y="154" width="10.5" height="10.5" fill="rgb(163,163,163)"/><rect x="1290" y="154" width="10.5" height="10.5" fill="rgb(160,160,160)"/><rect x="1300" y="154" width="10.5" height="10.5" fill="rgb(161,161,161)"/><rect x="1310" y="154" width="10.5" height="10.5" fill="rgb(163,163,163)"/><rect x="1320" y="154" width="10.5" height="10.5" fill="rgb(163,163,163)"/><rect x="1330" y="154" width="10.5" height="10.5" fill="rgb(158,158,158)"/><rect x="1340" y="154" width="10.5" height="10.5" fill="rgb(148,148,148)"/><rect x="1350" y="154" width="10.5" height="10.5" fill="rgb(146,146,146)"/><rect x="1360" y="154" width="10.5" height="10.5" fill="rgb(145,145,145)"/><rect x="1370" y="154" width="10.5" height="10.5" fill="rgb(142,142,142)"/><rect x="1380" y="154" width="10.5" height="10.5" fill="rgb(134,134,134)"/><rect x="1390" y="154" width="10.5" height="10.5" fill="rgb(133,133,133)"/><rect x="1400" y="154" width="10.5" height="10.5" fill="rgb(132,132,132)"/><rect x="1410" y="154" width="10.5" height="10.5" fill="rgb(126,126,126)"/><rect x="1420" y="154" width="10.5" height="10.5" fill="rgb(115,115,115)"/><rect x="1430" y="154" width="10.5" height="10.5" fill="rgb(113,113,113)"/><rect x="1440" y="154" width="10.5" height="10.5" fill="rgb(111,111,111)"/><rect x="1450" y="154" width="10.5" height="10.5" fill="rgb(91,91,91)"/><rect x="1460" y="154" width="10.5" height="10.5" fill="rgb(80,80,80)"/><rect x="1470" y="154" width="10.5" height="10.5" fill="rgb(76,76,76)"/><rect x="1480" y="154" width="10.5" height="10.5" fill="rgb(76,76,76)"/><rect x="1490" y="154" width="10.5" height="10.5" fill="rgb(77,77,77)"/><rect x="1500" y="154" width="10.5" height="10.5" fill="rgb(76,76,76)"/><rect x="1510" y="154" width="10.5" height="10.5" fill="rgb(75,75,75)"/><rect x="1520" y="154" width="10.5" height="10.5" fill="rgb(75,75,75)"/><rect x="1530" y="154" width="10.5" height="10.5" fill="rgb(76,76,76)"/><rect x="1540" y="154" width="10.5" height="10.5" fill="rgb(78,78,78)"/><rect x="1550" y="154" width="10.5" height="10.5" fill="rgb(81,81,81)"/><rect x="1100" y="164" width="10.5" height="10.5" fill="rgb(120,120,120)"/><rect x="1110" y="164" width="10.5" height="10.5" fill="rgb(118,118,118)"/><rect x="1120" y="164" width="10.5" height="10.5" fill="rgb(117,117,117)"/><rect x="1130" y="164" width="10.5" height="10.5" fill="rgb(115,115,115)"/><rect x="1140" y="164" width="10.5" height="10.5" fill="rgb(114,114,114)"/><rect x="1150" y="164" width="10.5" height="10.5" fill="rgb(110,110,110)"/><rect x="1160" y="164" width="10.5" height="10.5" fill="rgb(105,105,105)"/><rect x="1170" y="164" width="10.5" height="10.5" fill="rgb(100,100,100)"/><rect x="1180" y="164" width="10.5" height="10.5" fill="rgb(94,94,94)"/><rect x="1190" y="164" width="10.5" height="10.5" fill="rgb(74,74,74)"/><rect x="1200" y="164" width="10.5" height="10.5" fill="rgb(67,67,67)"/><rect x="1210" y="164" width="10.5" height="10.5" fill="rgb(74,74,74)"/><rect x="1220" y="164" width="10.5" height="10.5" fill="rgb(80,80,80)"/><rect x="1230" y="164" width="10.5" height="10.5" fill="rgb(78,78,78)"/><rect x="1240" y="164" width="10.5" height="10.5" fill="rgb(80,80,80)"/><rect x="1250" y="164" width="10.5" height="10.5" fill="rgb(99,99,99)"/><rect x="1260" y="164" width="10.5" height="10.5" fill="rgb(142,142,142)"/><rect x="1270" y="164" width="10.5" height="10.5" fill="rgb(160,160,160)"/><rect x="1280" y="164" width="10.5" height="10.5" fill="rgb(162,162,162)"/><rect x="1290" y="164" width="10.5" height="10.5" fill="rgb(161,161,161)"/><rect x="1300" y="164" width="10.5" height="10.5" fill="rgb(162,162,162)"/><rect x="1310" y="164" width="10.5" height="10.5" fill="rgb(163,163,163)"/><rect x="1320" y="164" width="10.5" height="10.5" fill="rgb(163,163,163)"/><rect x="1330" y="164" width="10.5" height="10.5" fill="rgb(159,159,159)"/><rect x="1340" y="164" width="10.5" height="10.5" fill="rgb(150,150,150)"/><rect x="1350" y="164" width="10.5" height="10.5" fill="rgb(147,147,147)"/><rect x="1360" y="164" width="10.5" height="10.5" fill="rgb(146,146,146)"/><rect x="1370" y="164" width="10.5" height="10.5" fill="rgb(143,143,143)"/><rect x="1380" y="164" width="10.5" height="10.5" fill="rgb(136,136,136)"/><rect x="1390" y="164" width="10.5" height="10.5" fill="rgb(133,133,133)"/><rect x="1400" y="164" width="10.5" height="10.5" fill="rgb(132,132,132)"/><rect x="1410" y="164" width="10.5" height="10.5" fill="rgb(127,127,127)"/><rect x="1420" y="164" width="10.5" height="10.5" fill="rgb(117,117,117)"/><rect x="1430" y="164" width="10.5" height="10.5" fill="rgb(113,113,113)"/><rect x="1440" y="164" width="10.5" height="10.5" fill="rgb(109,109,109)"/><rect x="1450" y="164" width="10.5" height="10.5" fill="rgb(87,87,87)"/><rect x="1460" y="164" width="10.5" height="10.5" fill="rgb(70,70,70)"/><rect x="1470" y="164" width="10.5" height="10.5" fill="rgb(68,68,68)"/><rect x="1480" y="164" width="10.5" height="10.5" fill="rgb(73,73,73)"/><rect x="1490" y="164" width="10.5" height="10.5" fill="rgb(75,75,75)"/><rect x="1500" y="164" width="10.5" height="10.5" fill="rgb(71,71,71)"/><rect x="1510" y="164" width="10.5" height="10.5" fill="rgb(70,70,70)"/><rect x="1520" y="164" width="10.5" height="10.5" fill="rgb(71,71,71)"/><rect x="1530" y="164" width="10.5" height="10.5" fill="rgb(73,73,73)"/><rect x="1540" y="164" width="10.5" height="10.5" fill="rgb(75,75,75)"/><rect x="1550" y="164" width="10.5" height="10.5" fill="rgb(78,78,78)"/><rect x="1100" y="174" width="10.5" height="10.5" fill="rgb(122,122,122)"/><rect x="1110" y="174" width="10.5" height="10.5" fill="rgb(120,120,120)"/><rect x="1120" y="174" width="10.5" height="10.5" fill="rgb(118,118,118)"/><rect x="1130" y="174" width="10.5" height="10.5" fill="rgb(117,117,117)"/><rect x="1140" y="174" width="10.5" height="10.5" fill="rgb(117,117,117)"/><rect x="1150" y="174" width="10.5" height="10.5" fill="rgb(117,117,117)"/><rect x="1160" y="174" width="10.5" height="10.5" fill="rgb(113,113,113)"/><rect x="1170" y="174" width="10.5" height="10.5" fill="rgb(105,105,105)"/><rect x="1180" y="174" width="10.5" height="10.5" fill="rgb(97,97,97)"/><rect x="1190" y="174" width="10.5" height="10.5" fill="rgb(89,89,89)"/><rect x="1200" y="174" width="10.5" height="10.5" fill="rgb(86,86,86)"/><rect x="1210" y="174" width="10.5" height="10.5" fill="rgb(88,88,88)"/><rect x="1220" y="174" width="10.5" height="10.5" fill="rgb(88,88,88)"/><rect x="1230" y="174" width="10.5" height="10.5" fill="rgb(87,87,87)"/><rect x="1240" y="174" width="10.5" height="10.5" fill="rgb(91,91,91)"/><rect x="1250" y="174" width="10.5" height="10.5" fill="rgb(110,110,110)"/><rect x="1260" y="174" width="10.5" height="10.5" fill="rgb(141,141,141)"/><rect x="1270" y="174" width="10.5" height="10.5" fill="rgb(159,159,159)"/><rect x="1280" y="174" width="10.5" height="10.5" fill="rgb(163,163,163)"/><rect x="1290" y="174" width="10.5" height="10.5" fill="rgb(164,164,164)"/><rect x="1300" y="174" width="10.5" height="10.5" fill="rgb(164,164,164)"/><rect x="1310" y="174" width="10.5" height="10.5" fill="rgb(165,165,165)"/><rect x="1320" y="174" width="10.5" height="10.5" fill="rgb(164,164,164)"/><rect x="1330" y="174" width="10.5" height="10.5" fill="rgb(161,161,161)"/><rect x="1340" y="174" width="10.5" height="10.5" fill="rgb(156,156,156)"/><rect x="1350" y="174" width="10.5" height="10.5" fill="rgb(153,153,153)"/><rect x="1360" y="174" width="10.5" height="10.5" fill="rgb(152,152,152)"/><rect x="1370" y="174" width="10.5" height="10.5" fill="rgb(147,147,147)"/><rect x="1380" y="174" width="10.5" height="10.5" fill="rgb(140,140,140)"/><rect x="1390" y="174" width="10.5" height="10.5" fill="rgb(136,136,136)"/><rect x="1400" y="174" width="10.5" height="10.5" fill="rgb(134,134,134)"/><rect x="1410" y="174" width="10.5" height="10.5" fill="rgb(129,129,129)"/><rect x="1420" y="174" width="10.5" height="10.5" fill="rgb(120,120,120)"/><rect x="1430" y="174" width="10.5" height="10.5" fill="rgb(114,114,114)"/><rect x="1440" y="174" width="10.5" height="10.5" fill="rgb(107,107,107)"/><rect x="1450" y="174" width="10.5" height="10.5" fill="rgb(89,89,89)"/><rect x="1460" y="174" width="10.5" height="10.5" fill="rgb(74,74,74)"/><rect x="1470" y="174" width="10.5" height="10.5" fill="rgb(73,73,73)"/><rect x="1480" y="174" width="10.5" height="10.5" fill="rgb(79,79,79)"/><rect x="1490" y="174" width="10.5" height="10.5" fill="rgb(74,74,74)"/><rect x="1500" y="174" width="10.5" height="10.5" fill="rgb(67,67,67)"/><rect x="1510" y="174" width="10.5" height="10.5" fill="rgb(66,66,66)"/><rect x="1520" y="174" width="10.5" height="10.5" fill="rgb(68,68,68)"/><rect x="1530" y="174" width="10.5" height="10.5" fill="rgb(70,70,70)"/><rect x="1540" y="174" width="10.5" height="10.5" fill="rgb(73,73,73)"/><rect x="1550" y="174" width="10.5" height="10.5" fill="rgb(75,75,75)"/><rect x="1100" y="184" width="10.5" height="10.5" fill="rgb(123,123,123)"/><rect x="1110" y="184" width="10.5" height="10.5" fill="rgb(121,121,121)"/><rect x="1120" y="184" width="10.5" height="10.5" fill="rgb(119,119,119)"/><rect x="1130" y="184" width="10.5" height="10.5" fill="rgb(118,118,118)"/><rect x="1140" y="184" width="10.5" height="10.5" fill="rgb(118,118,118)"/><rect x="1150" y="184" width="10.5" height="10.5" fill="rgb(119,119,119)"/><rect x="1160" y="184" width="10.5" height="10.5" fill="rgb(117,117,117)"/><rect x="1170" y="184" width="10.5" height="10.5" fill="rgb(112,112,112)"/><rect x="1180" y="184" width="10.5" height="10.5" fill="rgb(107,107,107)"/><rect x="1190" y="184" width="10.5" height="10.5" fill="rgb(106,106,106)"/><rect x="1200" y="184" width="10.5" height="10.5" fill="rgb(105,105,105)"/><rect x="1210" y="184" width="10.5" height="10.5" fill="rgb(101,101,101)"/><rect x="1220" y="184" width="10.5" height="10.5" fill="rgb(94,94,94)"/><rect x="1230" y="184" width="10.5" height="10.5" fill="rgb(91,91,91)"/><rect x="1240" y="184" width="10.5" height="10.5" fill="rgb(93,93,93)"/><rect x="1250" y="184" width="10.5" height="10.5" fill="rgb(111,111,111)"/><rect x="1260" y="184" width="10.5" height="10.5" fill="rgb(151,151,151)"/><rect x="1270" y="184" width="10.5" height="10.5" fill="rgb(170,170,170)"/><rect x="1280" y="184" width="10.5" height="10.5" fill="rgb(172,172,172)"/><rect x="1290" y="184" width="10.5" height="10.5" fill="rgb(170,170,170)"/><rect x="1300" y="184" width="10.5" height="10.5" fill="rgb(168,168,168)"/><rect x="1310" y="184" width="10.5" height="10.5" fill="rgb(169,169,169)"/><rect x="1320" y="184" width="10.5" height="10.5" fill="rgb(169,169,169)"/><rect x="1330" y="184" width="10.5" height="10.5" fill="rgb(166,166,166)"/><rect x="1340" y="184" width="10.5" height="10.5" fill="rgb(162,162,162)"/><rect x="1350" y="184" width="10.5" height="10.5" fill="rgb(162,162,162)"/><rect x="1360" y="184" width="10.5" height="10.5" fill="rgb(161,161,161)"/><rect x="1370" y="184" width="10.5" height="10.5" fill="rgb(155,155,155)"/><rect x="1380" y="184" width="10.5" height="10.5" fill="rgb(144,144,144)"/><rect x="1390" y="184" width="10.5" height="10.5" fill="rgb(139,139,139)"/><rect x="1400" y="184" width="10.5" height="10.5" fill="rgb(138,138,138)"/><rect x="1410" y="184" width="10.5" height="10.5" fill="rgb(133,133,133)"/><rect x="1420" y="184" width="10.5" height="10.5" fill="rgb(123,123,123)"/><rect x="1430" y="184" width="10.5" height="10.5" fill="rgb(119,119,119)"/><rect x="1440" y="184" width="10.5" height="10.5" fill="rgb(116,116,116)"/><rect x="1450" y="184" width="10.5" height="10.5" fill="rgb(104,104,104)"/><rect x="1460" y="184" width="10.5" height="10.5" fill="rgb(91,91,91)"/><rect x="1470" y="184" width="10.5" height="10.5" fill="rgb(94,94,94)"/><rect x="1480" y="184" width="10.5" height="10.5" fill="rgb(94,94,94)"/><rect x="1490" y="184" width="10.5" height="10.5" fill="rgb(78,78,78)"/><rect x="1500" y="184" width="10.5" height="10.5" fill="rgb(66,66,66)"/><rect x="1510" y="184" width="10.5" height="10.5" fill="rgb(65,65,65)"/><rect x="1520" y="184" width="10.5" height="10.5" fill="rgb(67,67,67)"/><rect x="1530" y="184" width="10.5" height="10.5" fill="rgb(69,69,69)"/><rect x="1540" y="184" width="10.5" height="10.5" fill="rgb(71,71,71)"/><rect x="1550" y="184" width="10.5" height="10.5" fill="rgb(73,73,73)"/><rect x="1100" y="194" width="10.5" height="10.5" fill="rgb(123,123,123)"/><rect x="1110" y="194" width="10.5" height="10.5" fill="rgb(122,122,122)"/><rect x="1120" y="194" width="10.5" height="10.5" fill="rgb(121,121,121)"/><rect x="1130" y="194" width="10.5" height="10.5" fill="rgb(119,119,119)"/><rect x="1140" y="194" width="10.5" height="10.5" fill="rgb(117,117,117)"/><rect x="1150" y="194" width="10.5" height="10.5" fill="rgb(115,115,115)"/><rect x="1160" y="194" width="10.5" height="10.5" fill="rgb(113,113,113)"/><rect x="1170" y="194" width="10.5" height="10.5" fill="rgb(112,112,112)"/><rect x="1180" y="194" width="10.5" height="10.5" fill="rgb(110,110,110)"/><rect x="1190" y="194" width="10.5" height="10.5" fill="rgb(108,108,108)"/><rect x="1200" y="194" width="10.5" height="10.5" fill="rgb(108,108,108)"/><rect x="1210" y="194" width="10.5" height="10.5" fill="rgb(106,106,106)"/><rect x="1220" y="194" width="10.5" height="10.5" fill="rgb(96,96,96)"/><rect x="1230" y="194" width="10.5" height="10.5" fill="rgb(89,89,89)"/><rect x="1240" y="194" width="10.5" height="10.5" fill="rgb(90,90,90)"/><rect x="1250" y="194" width="10.5" height="10.5" fill="rgb(108,108,108)"/><rect x="1260" y="194" width="10.5" height="10.5" fill="rgb(158,158,158)"/><rect x="1270" y="194" width="10.5" height="10.5" fill="rgb(174,174,174)"/><rect x="1280" y="194" width="10.5" height="10.5" fill="rgb(175,175,175)"/><rect x="1290" y="194" width="10.5" height="10.5" fill="rgb(173,173,173)"/><rect x="1300" y="194" width="10.5" height="10.5" fill="rgb(170,170,170)"/><rect x="1310" y="194" width="10.5" height="10.5" fill="rgb(170,170,170)"/><rect x="1320" y="194" width="10.5" height="10.5" fill="rgb(170,170,170)"/><rect x="1330" y="194" width="10.5" height="10.5" fill="rgb(169,169,169)"/><rect x="1340" y="194" width="10.5" height="10.5" fill="rgb(165,165,165)"/><rect x="1350" y="194" width="10.5" height="10.5" fill="rgb(164,164,164)"/><rect x="1360" y="194" width="10.5" height="10.5" fill="rgb(164,164,164)"/><rect x="1370" y="194" width="10.5" height="10.5" fill="rgb(158,158,158)"/><rect x="1380" y="194" width="10.5" height="10.5" fill="rgb(144,144,144)"/><rect x="1390" y="194" width="10.5" height="10.5" fill="rgb(140,140,140)"/><rect x="1400" y="194" width="10.5" height="10.5" fill="rgb(139,139,139)"/><rect x="1410" y="194" width="10.5" height="10.5" fill="rgb(135,135,135)"/><rect x="1420" y="194" width="10.5" height="10.5" fill="rgb(124,124,124)"/><rect x="1430" y="194" width="10.5" height="10.5" fill="rgb(121,121,121)"/><rect x="1440" y="194" width="10.5" height="10.5" fill="rgb(120,120,120)"/><rect x="1450" y="194" width="10.5" height="10.5" fill="rgb(113,113,113)"/><rect x="1460" y="194" width="10.5" height="10.5" fill="rgb(102,102,102)"/><rect x="1470" y="194" width="10.5" height="10.5" fill="rgb(101,101,101)"/><rect x="1480" y="194" width="10.5" height="10.5" fill="rgb(100,100,100)"/><rect x="1490" y="194" width="10.5" height="10.5" fill="rgb(86,86,86)"/><rect x="1500" y="194" width="10.5" height="10.5" fill="rgb(69,69,69)"/><rect x="1510" y="194" width="10.5" height="10.5" fill="rgb(67,67,67)"/><rect x="1520" y="194" width="10.5" height="10.5" fill="rgb(67,67,67)"/><rect x="1530" y="194" width="10.5" height="10.5" fill="rgb(68,68,68)"/><rect x="1540" y="194" width="10.5" height="10.5" fill="rgb(68,68,68)"/><rect x="1550" y="194" width="10.5" height="10.5" fill="rgb(69,69,69)"/><rect x="1100" y="204" width="10.5" height="10.5" fill="rgb(121,121,121)"/><rect x="1110" y="204" width="10.5" height="10.5" fill="rgb(121,121,121)"/><rect x="1120" y="204" width="10.5" height="10.5" fill="rgb(122,122,122)"/><rect x="1130" y="204" width="10.5" height="10.5" fill="rgb(121,121,121)"/><rect x="1140" y="204" width="10.5" height="10.5" fill="rgb(117,117,117)"/><rect x="1150" y="204" width="10.5" height="10.5" fill="rgb(113,113,113)"/><rect x="1160" y="204" width="10.5" height="10.5" fill="rgb(112,112,112)"/><rect x="1170" y="204" width="10.5" height="10.5" fill="rgb(114,114,114)"/><rect x="1180" y="204" width="10.5" height="10.5" fill="rgb(113,113,113)"/><rect x="1190" y="204" width="10.5" height="10.5" fill="rgb(110,110,110)"/><rect x="1200" y="204" width="10.5" height="10.5" fill="rgb(110,110,110)"/><rect x="1210" y="204" width="10.5" height="10.5" fill="rgb(110,110,110)"/><rect x="1220" y="204" width="10.5" height="10.5" fill="rgb(102,102,102)"/><rect x="1230" y="204" width="10.5" height="10.5" fill="rgb(94,94,94)"/><rect x="1240" y="204" width="10.5" height="10.5" fill="rgb(96,96,96)"/><rect x="1250" y="204" width="10.5" height="10.5" fill="rgb(116,116,116)"/><rect x="1260" y="204" width="10.5" height="10.5" fill="rgb(156,156,156)"/><rect x="1270" y="204" width="10.5" height="10.5" fill="rgb(172,172,172)"/><rect x="1280" y="204" width="10.5" height="10.5" fill="rgb(174,174,174)"/><rect x="1290" y="204" width="10.5" height="10.5" fill="rgb(172,172,172)"/><rect x="1300" y="204" width="10.5" height="10.5" fill="rgb(171,171,171)"/><rect x="1310" y="204" width="10.5" height="10.5" fill="rgb(171,171,171)"/><rect x="1320" y="204" width="10.5" height="10.5" fill="rgb(171,171,171)"/><rect x="1330" y="204" width="10.5" height="10.5" fill="rgb(170,170,170)"/><rect x="1340" y="204" width="10.5" height="10.5" fill="rgb(167,167,167)"/><rect x="1350" y="204" width="10.5" height="10.5" fill="rgb(165,165,165)"/><rect x="1360" y="204" width="10.5" height="10.5" fill="rgb(164,164,164)"/><rect x="1370" y="204" width="10.5" height="10.5" fill="rgb(159,159,159)"/><rect x="1380" y="204" width="10.5" height="10.5" fill="rgb(147,147,147)"/><rect x="1390" y="204" width="10.5" height="10.5" fill="rgb(141,141,141)"/><rect x="1400" y="204" width="10.5" height="10.5" fill="rgb(140,140,140)"/><rect x="1410" y="204" width="10.5" height="10.5" fill="rgb(136,136,136)"/><rect x="1420" y="204" width="10.5" height="10.5" fill="rgb(126,126,126)"/><rect x="1430" y="204" width="10.5" height="10.5" fill="rgb(121,121,121)"/><rect x="1440" y="204" width="10.5" height="10.5" fill="rgb(120,120,120)"/><rect x="1450" y="204" width="10.5" height="10.5" fill="rgb(115,115,115)"/><rect x="1460" y="204" width="10.5" height="10.5" fill="rgb(105,105,105)"/><rect x="1470" y="204" width="10.5" height="10.5" fill="rgb(102,102,102)"/><rect x="1480" y="204" width="10.5" height="10.5" fill="rgb(100,100,100)"/><rect x="1490" y="204" width="10.5" height="10.5" fill="rgb(91,91,91)"/><rect x="1500" y="204" width="10.5" height="10.5" fill="rgb(77,77,77)"/><rect x="1510" y="204" width="10.5" height="10.5" fill="rgb(70,70,70)"/><rect x="1520" y="204" width="10.5" height="10.5" fill="rgb(66,66,66)"/><rect x="1530" y="204" width="10.5" height="10.5" fill="rgb(64,64,64)"/><rect x="1540" y="204" width="10.5" height="10.5" fill="rgb(63,63,63)"/><rect x="1550" y="204" width="10.5" height="10.5" fill="rgb(65,65,65)"/><rect x="1100" y="214" width="10.5" height="10.5" fill="rgb(117,117,117)"/><rect x="1110" y="214" width="10.5" height="10.5" fill="rgb(116,116,116)"/><rect x="1120" y="214" width="10.5" height="10.5" fill="rgb(120,120,120)"/><rect x="1130" y="214" width="10.5" height="10.5" fill="rgb(127,127,127)"/><rect x="1140" y="214" width="10.5" height="10.5" fill="rgb(129,129,129)"/><rect x="1150" y="214" width="10.5" height="10.5" fill="rgb(129,129,129)"/><rect x="1160" y="214" width="10.5" height="10.5" fill="rgb(128,128,128)"/><rect x="1170" y="214" width="10.5" height="10.5" fill="rgb(127,127,127)"/><rect x="1180" y="214" width="10.5" height="10.5" fill="rgb(123,123,123)"/><rect x="1190" y="214" width="10.5" height="10.5" fill="rgb(119,119,119)"/><rect x="1200" y="214" width="10.5" height="10.5" fill="rgb(119,119,119)"/><rect x="1210" y="214" width="10.5" height="10.5" fill="rgb(121,121,121)"/><rect x="1220" y="214" width="10.5" height="10.5" fill="rgb(123,123,123)"/><rect x="1230" y="214" width="10.5" height="10.5" fill="rgb(123,123,123)"/><rect x="1240" y="214" width="10.5" height="10.5" fill="rgb(126,126,126)"/><rect x="1250" y="214" width="10.5" height="10.5" fill="rgb(137,137,137)"/><rect x="1260" y="214" width="10.5" height="10.5" fill="rgb(155,155,155)"/><rect x="1270" y="214" width="10.5" height="10.5" fill="rgb(164,164,164)"/><rect x="1280" y="214" width="10.5" height="10.5" fill="rgb(167,167,167)"/><rect x="1290" y="214" width="10.5" height="10.5" fill="rgb(170,170,170)"/><rect x="1300" y="214" width="10.5" height="10.5" fill="rgb(175,175,175)"/><rect x="1310" y="214" width="10.5" height="10.5" fill="rgb(178,178,178)"/><rect x="1320" y="214" width="10.5" height="10.5" fill="rgb(179,179,179)"/><rect x="1330" y="214" width="10.5" height="10.5" fill="rgb(176,176,176)"/><rect x="1340" y="214" width="10.5" height="10.5" fill="rgb(172,172,172)"/><rect x="1350" y="214" width="10.5" height="10.5" fill="rgb(169,169,169)"/><rect x="1360" y="214" width="10.5" height="10.5" fill="rgb(167,167,167)"/><rect x="1370" y="214" width="10.5" height="10.5" fill="rgb(162,162,162)"/><rect x="1380" y="214" width="10.5" height="10.5" fill="rgb(152,152,152)"/><rect x="1390" y="214" width="10.5" height="10.5" fill="rgb(147,147,147)"/><rect x="1400" y="214" width="10.5" height="10.5" fill="rgb(144,144,144)"/><rect x="1410" y="214" width="10.5" height="10.5" fill="rgb(139,139,139)"/><rect x="1420" y="214" width="10.5" height="10.5" fill="rgb(130,130,130)"/><rect x="1430" y="214" width="10.5" height="10.5" fill="rgb(125,125,125)"/><rect x="1440" y="214" width="10.5" height="10.5" fill="rgb(122,122,122)"/><rect x="1450" y="214" width="10.5" height="10.5" fill="rgb(117,117,117)"/><rect x="1460" y="214" width="10.5" height="10.5" fill="rgb(109,109,109)"/><rect x="1470" y="214" width="10.5" height="10.5" fill="rgb(104,104,104)"/><rect x="1480" y="214" width="10.5" height="10.5" fill="rgb(101,101,101)"/><rect x="1490" y="214" width="10.5" height="10.5" fill="rgb(93,93,93)"/><rect x="1500" y="214" width="10.5" height="10.5" fill="rgb(79,79,79)"/><rect x="1510" y="214" width="10.5" height="10.5" fill="rgb(68,68,68)"/><rect x="1520" y="214" width="10.5" height="10.5" fill="rgb(61,61,61)"/><rect x="1530" y="214" width="10.5" height="10.5" fill="rgb(58,58,58)"/><rect x="1540" y="214" width="10.5" height="10.5" fill="rgb(59,59,59)"/><rect x="1550" y="214" width="10.5" height="10.5" fill="rgb(61,61,61)"/><rect x="1100" y="224" width="10.5" height="10.5" fill="rgb(113,113,113)"/><rect x="1110" y="224" width="10.5" height="10.5" fill="rgb(111,111,111)"/><rect x="1120" y="224" width="10.5" height="10.5" fill="rgb(116,116,116)"/><rect x="1130" y="224" width="10.5" height="10.5" fill="rgb(131,131,131)"/><rect x="1140" y="224" width="10.5" height="10.5" fill="rgb(145,145,145)"/><rect x="1150" y="224" width="10.5" height="10.5" fill="rgb(155,155,155)"/><rect x="1160" y="224" width="10.5" height="10.5" fill="rgb(155,155,155)"/><rect x="1170" y="224" width="10.5" height="10.5" fill="rgb(145,145,145)"/><rect x="1180" y="224" width="10.5" height="10.5" fill="rgb(132,132,132)"/><rect x="1190" y="224" width="10.5" height="10.5" fill="rgb(127,127,127)"/><rect x="1200" y="224" width="10.5" height="10.5" fill="rgb(127,127,127)"/><rect x="1210" y="224" width="10.5" height="10.5" fill="rgb(132,132,132)"/><rect x="1220" y="224" width="10.5" height="10.5" fill="rgb(146,146,146)"/><rect x="1230" y="224" width="10.5" height="10.5" fill="rgb(157,157,157)"/><rect x="1240" y="224" width="10.5" height="10.5" fill="rgb(158,158,158)"/><rect x="1250" y="224" width="10.5" height="10.5" fill="rgb(156,156,156)"/><rect x="1260" y="224" width="10.5" height="10.5" fill="rgb(158,158,158)"/><rect x="1270" y="224" width="10.5" height="10.5" fill="rgb(160,160,160)"/><rect x="1280" y="224" width="10.5" height="10.5" fill="rgb(161,161,161)"/><rect x="1290" y="224" width="10.5" height="10.5" fill="rgb(168,168,168)"/><rect x="1300" y="224" width="10.5" height="10.5" fill="rgb(183,183,183)"/><rect x="1310" y="224" width="10.5" height="10.5" fill="rgb(191,191,191)"/><rect x="1320" y="224" width="10.5" height="10.5" fill="rgb(191,191,191)"/><rect x="1330" y="224" width="10.5" height="10.5" fill="rgb(186,186,186)"/><rect x="1340" y="224" width="10.5" height="10.5" fill="rgb(178,178,178)"/><rect x="1350" y="224" width="10.5" height="10.5" fill="rgb(176,176,176)"/><rect x="1360" y="224" width="10.5" height="10.5" fill="rgb(175,175,175)"/><rect x="1370" y="224" width="10.5" height="10.5" fill="rgb(169,169,169)"/><rect x="1380" y="224" width="10.5" height="10.5" fill="rgb(157,157,157)"/><rect x="1390" y="224" width="10.5" height="10.5" fill="rgb(152,152,152)"/><rect x="1400" y="224" width="10.5" height="10.5" fill="rgb(150,150,150)"/><rect x="1410" y="224" width="10.5" height="10.5" fill="rgb(145,145,145)"/><rect x="1420" y="224" width="10.5" height="10.5" fill="rgb(133,133,133)"/><rect x="1430" y="224" width="10.5" height="10.5" fill="rgb(128,128,128)"/><rect x="1440" y="224" width="10.5" height="10.5" fill="rgb(126,126,126)"/><rect x="1450" y="224" width="10.5" height="10.5" fill="rgb(121,121,121)"/><rect x="1460" y="224" width="10.5" height="10.5" fill="rgb(112,112,112)"/><rect x="1470" y="224" width="10.5" height="10.5" fill="rgb(108,108,108)"/><rect x="1480" y="224" width="10.5" height="10.5" fill="rgb(106,106,106)"/><rect x="1490" y="224" width="10.5" height="10.5" fill="rgb(97,97,97)"/><rect x="1500" y="224" width="10.5" height="10.5" fill="rgb(77,77,77)"/><rect x="1510" y="224" width="10.5" height="10.5" fill="rgb(67,67,67)"/><rect x="1520" y="224" width="10.5" height="10.5" fill="rgb(60,60,60)"/><rect x="1530" y="224" width="10.5" height="10.5" fill="rgb(55,55,55)"/><rect x="1540" y="224" width="10.5" height="10.5" fill="rgb(56,56,56)"/><rect x="1550" y="224" width="10.5" height="10.5" fill="rgb(60,60,60)"/><rect x="1100" y="234" width="10.5" height="10.5" fill="rgb(112,112,112)"/><rect x="1110" y="234" width="10.5" height="10.5" fill="rgb(109,109,109)"/><rect x="1120" y="234" width="10.5" height="10.5" fill="rgb(118,118,118)"/><rect x="1130" y="234" width="10.5" height="10.5" fill="rgb(140,140,140)"/><rect x="1140" y="234" width="10.5" height="10.5" fill="rgb(151,151,151)"/><rect x="1150" y="234" width="10.5" height="10.5" fill="rgb(162,162,162)"/><rect x="1160" y="234" width="10.5" height="10.5" fill="rgb(162,162,162)"/><rect x="1170" y="234" width="10.5" height="10.5" fill="rgb(153,153,153)"/><rect x="1180" y="234" width="10.5" height="10.5" fill="rgb(134,134,134)"/><rect x="1190" y="234" width="10.5" height="10.5" fill="rgb(128,128,128)"/><rect x="1200" y="234" width="10.5" height="10.5" fill="rgb(128,128,128)"/><rect x="1210" y="234" width="10.5" height="10.5" fill="rgb(134,134,134)"/><rect x="1220" y="234" width="10.5" height="10.5" fill="rgb(155,155,155)"/><rect x="1230" y="234" width="10.5" height="10.5" fill="rgb(163,163,163)"/><rect x="1240" y="234" width="10.5" height="10.5" fill="rgb(163,163,163)"/><rect x="1250" y="234" width="10.5" height="10.5" fill="rgb(162,162,162)"/><rect x="1260" y="234" width="10.5" height="10.5" fill="rgb(160,160,160)"/><rect x="1270" y="234" width="10.5" height="10.5" fill="rgb(159,159,159)"/><rect x="1280" y="234" width="10.5" height="10.5" fill="rgb(159,159,159)"/><rect x="1290" y="234" width="10.5" height="10.5" fill="rgb(167,167,167)"/><rect x="1300" y="234" width="10.5" height="10.5" fill="rgb(187,187,187)"/><rect x="1310" y="234" width="10.5" height="10.5" fill="rgb(194,194,194)"/><rect x="1320" y="234" width="10.5" height="10.5" fill="rgb(195,195,195)"/><rect x="1330" y="234" width="10.5" height="10.5" fill="rgb(190,190,190)"/><rect x="1340" y="234" width="10.5" height="10.5" fill="rgb(180,180,180)"/><rect x="1350" y="234" width="10.5" height="10.5" fill="rgb(177,177,177)"/><rect x="1360" y="234" width="10.5" height="10.5" fill="rgb(177,177,177)"/><rect x="1370" y="234" width="10.5" height="10.5" fill="rgb(172,172,172)"/><rect x="1380" y="234" width="10.5" height="10.5" fill="rgb(158,158,158)"/><rect x="1390" y="234" width="10.5" height="10.5" fill="rgb(153,153,153)"/><rect x="1400" y="234" width="10.5" height="10.5" fill="rgb(152,152,152)"/><rect x="1410" y="234" width="10.5" height="10.5" fill="rgb(148,148,148)"/><rect x="1420" y="234" width="10.5" height="10.5" fill="rgb(133,133,133)"/><rect x="1430" y="234" width="10.5" height="10.5" fill="rgb(128,128,128)"/><rect x="1440" y="234" width="10.5" height="10.5" fill="rgb(127,127,127)"/><rect x="1450" y="234" width="10.5" height="10.5" fill="rgb(123,123,123)"/><rect x="1460" y="234" width="10.5" height="10.5" fill="rgb(112,112,112)"/><rect x="1470" y="234" width="10.5" height="10.5" fill="rgb(108,108,108)"/><rect x="1480" y="234" width="10.5" height="10.5" fill="rgb(107,107,107)"/><rect x="1490" y="234" width="10.5" height="10.5" fill="rgb(99,99,99)"/><rect x="1500" y="234" width="10.5" height="10.5" fill="rgb(77,77,77)"/><rect x="1510" y="234" width="10.5" height="10.5" fill="rgb(69,69,69)"/><rect x="1520" y="234" width="10.5" height="10.5" fill="rgb(64,64,64)"/><rect x="1530" y="234" width="10.5" height="10.5" fill="rgb(56,56,56)"/><rect x="1540" y="234" width="10.5" height="10.5" fill="rgb(57,57,57)"/><rect x="1550" y="234" width="10.5" height="10.5" fill="rgb(60,60,60)"/><rect x="1100" y="244" width="10.5" height="10.5" fill="rgb(120,120,120)"/><rect x="1110" y="244" width="10.5" height="10.5" fill="rgb(118,118,118)"/><rect x="1120" y="244" width="10.5" height="10.5" fill="rgb(135,135,135)"/><rect x="1130" y="244" width="10.5" height="10.5" fill="rgb(147,147,147)"/><rect x="1140" y="244" width="10.5" height="10.5" fill="rgb(152,152,152)"/><rect x="1150" y="244" width="10.5" height="10.5" fill="rgb(161,161,161)"/><rect x="1160" y="244" width="10.5" height="10.5" fill="rgb(161,161,161)"/><rect x="1170" y="244" width="10.5" height="10.5" fill="rgb(154,154,154)"/><rect x="1180" y="244" width="10.5" height="10.5" fill="rgb(137,137,137)"/><rect x="1190" y="244" width="10.5" height="10.5" fill="rgb(130,130,130)"/><rect x="1200" y="244" width="10.5" height="10.5" fill="rgb(130,130,130)"/><rect x="1210" y="244" width="10.5" height="10.5" fill="rgb(138,138,138)"/><rect x="1220" y="244" width="10.5" height="10.5" fill="rgb(156,156,156)"/><rect x="1230" y="244" width="10.5" height="10.5" fill="rgb(163,163,163)"/><rect x="1240" y="244" width="10.5" height="10.5" fill="rgb(164,164,164)"/><rect x="1250" y="244" width="10.5" height="10.5" fill="rgb(164,164,164)"/><rect x="1260" y="244" width="10.5" height="10.5" fill="rgb(162,162,162)"/><rect x="1270" y="244" width="10.5" height="10.5" fill="rgb(161,161,161)"/><rect x="1280" y="244" width="10.5" height="10.5" fill="rgb(161,161,161)"/><rect x="1290" y="244" width="10.5" height="10.5" fill="rgb(170,170,170)"/><rect x="1300" y="244" width="10.5" height="10.5" fill="rgb(188,188,188)"/><rect x="1310" y="244" width="10.5" height="10.5" fill="rgb(195,195,195)"/><rect x="1320" y="244" width="10.5" height="10.5" fill="rgb(195,195,195)"/><rect x="1330" y="244" width="10.5" height="10.5" fill="rgb(192,192,192)"/><rect x="1340" y="244" width="10.5" height="10.5" fill="rgb(183,183,183)"/><rect x="1350" y="244" width="10.5" height="10.5" fill="rgb(179,179,179)"/><rect x="1360" y="244" width="10.5" height="10.5" fill="rgb(178,178,178)"/><rect x="1370" y="244" width="10.5" height="10.5" fill="rgb(174,174,174)"/><rect x="1380" y="244" width="10.5" height="10.5" fill="rgb(162,162,162)"/><rect x="1390" y="244" width="10.5" height="10.5" fill="rgb(155,155,155)"/><rect x="1400" y="244" width="10.5" height="10.5" fill="rgb(153,153,153)"/><rect x="1410" y="244" width="10.5" height="10.5" fill="rgb(150,150,150)"/><rect x="1420" y="244" width="10.5" height="10.5" fill="rgb(136,136,136)"/><rect x="1430" y="244" width="10.5" height="10.5" fill="rgb(129,129,129)"/><rect x="1440" y="244" width="10.5" height="10.5" fill="rgb(128,128,128)"/><rect x="1450" y="244" width="10.5" height="10.5" fill="rgb(124,124,124)"/><rect x="1460" y="244" width="10.5" height="10.5" fill="rgb(114,114,114)"/><rect x="1470" y="244" width="10.5" height="10.5" fill="rgb(109,109,109)"/><rect x="1480" y="244" width="10.5" height="10.5" fill="rgb(107,107,107)"/><rect x="1490" y="244" width="10.5" height="10.5" fill="rgb(99,99,99)"/><rect x="1500" y="244" width="10.5" height="10.5" fill="rgb(79,79,79)"/><rect x="1510" y="244" width="10.5" height="10.5" fill="rgb(71,71,71)"/><rect x="1520" y="244" width="10.5" height="10.5" fill="rgb(67,67,67)"/><rect x="1530" y="244" width="10.5" height="10.5" fill="rgb(62,62,62)"/><rect x="1540" y="244" width="10.5" height="10.5" fill="rgb(61,61,61)"/><rect x="1550" y="244" width="10.5" height="10.5" fill="rgb(62,62,62)"/><rect x="1100" y="254" width="10.5" height="10.5" fill="rgb(138,138,138)"/><rect x="1110" y="254" width="10.5" height="10.5" fill="rgb(139,139,139)"/><rect x="1120" y="254" width="10.5" height="10.5" fill="rgb(144,144,144)"/><rect x="1130" y="254" width="10.5" height="10.5" fill="rgb(149,149,149)"/><rect x="1140" y="254" width="10.5" height="10.5" fill="rgb(154,154,154)"/><rect x="1150" y="254" width="10.5" height="10.5" fill="rgb(161,161,161)"/><rect x="1160" y="254" width="10.5" height="10.5" fill="rgb(162,162,162)"/><rect x="1170" y="254" width="10.5" height="10.5" fill="rgb(155,155,155)"/><rect x="1180" y="254" width="10.5" height="10.5" fill="rgb(142,142,142)"/><rect x="1190" y="254" width="10.5" height="10.5" fill="rgb(134,134,134)"/><rect x="1200" y="254" width="10.5" height="10.5" fill="rgb(135,135,135)"/><rect x="1210" y="254" width="10.5" height="10.5" fill="rgb(144,144,144)"/><rect x="1220" y="254" width="10.5" height="10.5" fill="rgb(160,160,160)"/><rect x="1230" y="254" width="10.5" height="10.5" fill="rgb(168,168,168)"/><rect x="1240" y="254" width="10.5" height="10.5" fill="rgb(170,170,170)"/><rect x="1250" y="254" width="10.5" height="10.5" fill="rgb(170,170,170)"/><rect x="1260" y="254" width="10.5" height="10.5" fill="rgb(170,170,170)"/><rect x="1270" y="254" width="10.5" height="10.5" fill="rgb(170,170,170)"/><rect x="1280" y="254" width="10.5" height="10.5" fill="rgb(172,172,172)"/><rect x="1290" y="254" width="10.5" height="10.5" fill="rgb(180,180,180)"/><rect x="1300" y="254" width="10.5" height="10.5" fill="rgb(195,195,195)"/><rect x="1310" y="254" width="10.5" height="10.5" fill="rgb(202,202,202)"/><rect x="1320" y="254" width="10.5" height="10.5" fill="rgb(203,203,203)"/><rect x="1330" y="254" width="10.5" height="10.5" fill="rgb(200,200,200)"/><rect x="1340" y="254" width="10.5" height="10.5" fill="rgb(194,194,194)"/><rect x="1350" y="254" width="10.5" height="10.5" fill="rgb(190,190,190)"/><rect x="1360" y="254" width="10.5" height="10.5" fill="rgb(188,188,188)"/><rect x="1370" y="254" width="10.5" height="10.5" fill="rgb(183,183,183)"/><rect x="1380" y="254" width="10.5" height="10.5" fill="rgb(175,175,175)"/><rect x="1390" y="254" width="10.5" height="10.5" fill="rgb(169,169,169)"/><rect x="1400" y="254" width="10.5" height="10.5" fill="rgb(166,166,166)"/><rect x="1410" y="254" width="10.5" height="10.5" fill="rgb(159,159,159)"/><rect x="1420" y="254" width="10.5" height="10.5" fill="rgb(145,145,145)"/><rect x="1430" y="254" width="10.5" height="10.5" fill="rgb(136,136,136)"/><rect x="1440" y="254" width="10.5" height="10.5" fill="rgb(133,133,133)"/><rect x="1450" y="254" width="10.5" height="10.5" fill="rgb(128,128,128)"/><rect x="1460" y="254" width="10.5" height="10.5" fill="rgb(118,118,118)"/><rect x="1470" y="254" width="10.5" height="10.5" fill="rgb(112,112,112)"/><rect x="1480" y="254" width="10.5" height="10.5" fill="rgb(108,108,108)"/><rect x="1490" y="254" width="10.5" height="10.5" fill="rgb(99,99,99)"/><rect x="1500" y="254" width="10.5" height="10.5" fill="rgb(84,84,84)"/><rect x="1510" y="254" width="10.5" height="10.5" fill="rgb(75,75,75)"/><rect x="1520" y="254" width="10.5" height="10.5" fill="rgb(71,71,71)"/><rect x="1530" y="254" width="10.5" height="10.5" fill="rgb(67,67,67)"/><rect x="1540" y="254" width="10.5" height="10.5" fill="rgb(65,65,65)"/><rect x="1550" y="254" width="10.5" height="10.5" fill="rgb(64,64,64)"/><rect x="1100" y="264" width="10.5" height="10.5" fill="rgb(155,155,155)"/><rect x="1110" y="264" width="10.5" height="10.5" fill="rgb(159,159,159)"/><rect x="1120" y="264" width="10.5" height="10.5" fill="rgb(158,158,158)"/><rect x="1130" y="264" width="10.5" height="10.5" fill="rgb(157,157,157)"/><rect x="1140" y="264" width="10.5" height="10.5" fill="rgb(164,164,164)"/><rect x="1150" y="264" width="10.5" height="10.5" fill="rgb(171,171,171)"/><rect x="1160" y="264" width="10.5" height="10.5" fill="rgb(171,171,171)"/><rect x="1170" y="264" width="10.5" height="10.5" fill="rgb(161,161,161)"/><rect x="1180" y="264" width="10.5" height="10.5" fill="rgb(141,141,141)"/><rect x="1190" y="264" width="10.5" height="10.5" fill="rgb(132,132,132)"/><rect x="1200" y="264" width="10.5" height="10.5" fill="rgb(133,133,133)"/><rect x="1210" y="264" width="10.5" height="10.5" fill="rgb(146,146,146)"/><rect x="1220" y="264" width="10.5" height="10.5" fill="rgb(168,168,168)"/><rect x="1230" y="264" width="10.5" height="10.5" fill="rgb(179,179,179)"/><rect x="1240" y="264" width="10.5" height="10.5" fill="rgb(180,180,180)"/><rect x="1250" y="264" width="10.5" height="10.5" fill="rgb(178,178,178)"/><rect x="1260" y="264" width="10.5" height="10.5" fill="rgb(179,179,179)"/><rect x="1270" y="264" width="10.5" height="10.5" fill="rgb(181,181,181)"/><rect x="1280" y="264" width="10.5" height="10.5" fill="rgb(182,182,182)"/><rect x="1290" y="264" width="10.5" height="10.5" fill="rgb(188,188,188)"/><rect x="1300" y="264" width="10.5" height="10.5" fill="rgb(207,207,207)"/><rect x="1310" y="264" width="10.5" height="10.5" fill="rgb(220,220,220)"/><rect x="1320" y="264" width="10.5" height="10.5" fill="rgb(220,220,220)"/><rect x="1330" y="264" width="10.5" height="10.5" fill="rgb(213,213,213)"/><rect x="1340" y="264" width="10.5" height="10.5" fill="rgb(205,205,205)"/><rect x="1350" y="264" width="10.5" height="10.5" fill="rgb(205,205,205)"/><rect x="1360" y="264" width="10.5" height="10.5" fill="rgb(204,204,204)"/><rect x="1370" y="264" width="10.5" height="10.5" fill="rgb(197,197,197)"/><rect x="1380" y="264" width="10.5" height="10.5" fill="rgb(187,187,187)"/><rect x="1390" y="264" width="10.5" height="10.5" fill="rgb(186,186,186)"/><rect x="1400" y="264" width="10.5" height="10.5" fill="rgb(184,184,184)"/><rect x="1410" y="264" width="10.5" height="10.5" fill="rgb(172,172,172)"/><rect x="1420" y="264" width="10.5" height="10.5" fill="rgb(150,150,150)"/><rect x="1430" y="264" width="10.5" height="10.5" fill="rgb(141,141,141)"/><rect x="1440" y="264" width="10.5" height="10.5" fill="rgb(139,139,139)"/><rect x="1450" y="264" width="10.5" height="10.5" fill="rgb(133,133,133)"/><rect x="1460" y="264" width="10.5" height="10.5" fill="rgb(121,121,121)"/><rect x="1470" y="264" width="10.5" height="10.5" fill="rgb(115,115,115)"/><rect x="1480" y="264" width="10.5" height="10.5" fill="rgb(113,113,113)"/><rect x="1490" y="264" width="10.5" height="10.5" fill="rgb(104,104,104)"/><rect x="1500" y="264" width="10.5" height="10.5" fill="rgb(85,85,85)"/><rect x="1510" y="264" width="10.5" height="10.5" fill="rgb(77,77,77)"/><rect x="1520" y="264" width="10.5" height="10.5" fill="rgb(75,75,75)"/><rect x="1530" y="264" width="10.5" height="10.5" fill="rgb(69,69,69)"/><rect x="1540" y="264" width="10.5" height="10.5" fill="rgb(62,62,62)"/><rect x="1550" y="264" width="10.5" height="10.5" fill="rgb(60,60,60)"/><rect x="1100" y="274" width="10.5" height="10.5" fill="rgb(160,160,160)"/><rect x="1110" y="274" width="10.5" height="10.5" fill="rgb(163,163,163)"/><rect x="1120" y="274" width="10.5" height="10.5" fill="rgb(163,163,163)"/><rect x="1130" y="274" width="10.5" height="10.5" fill="rgb(162,162,162)"/><rect x="1140" y="274" width="10.5" height="10.5" fill="rgb(169,169,169)"/><rect x="1150" y="274" width="10.5" height="10.5" fill="rgb(175,175,175)"/><rect x="1160" y="274" width="10.5" height="10.5" fill="rgb(175,175,175)"/><rect x="1170" y="274" width="10.5" height="10.5" fill="rgb(165,165,165)"/><rect x="1180" y="274" width="10.5" height="10.5" fill="rgb(140,140,140)"/><rect x="1190" y="274" width="10.5" height="10.5" fill="rgb(130,130,130)"/><rect x="1200" y="274" width="10.5" height="10.5" fill="rgb(130,130,130)"/><rect x="1210" y="274" width="10.5" height="10.5" fill="rgb(147,147,147)"/><rect x="1220" y="274" width="10.5" height="10.5" fill="rgb(175,175,175)"/><rect x="1230" y="274" width="10.5" height="10.5" fill="rgb(182,182,182)"/><rect x="1240" y="274" width="10.5" height="10.5" fill="rgb(182,182,182)"/><rect x="1250" y="274" width="10.5" height="10.5" fill="rgb(181,181,181)"/><rect x="1260" y="274" width="10.5" height="10.5" fill="rgb(181,181,181)"/><rect x="1270" y="274" width="10.5" height="10.5" fill="rgb(183,183,183)"/><rect x="1280" y="274" width="10.5" height="10.5" fill="rgb(184,184,184)"/><rect x="1290" y="274" width="10.5" height="10.5" fill="rgb(190,190,190)"/><rect x="1300" y="274" width="10.5" height="10.5" fill="rgb(214,214,214)"/><rect x="1310" y="274" width="10.5" height="10.5" fill="rgb(225,225,225)"/><rect x="1320" y="274" width="10.5" height="10.5" fill="rgb(225,225,225)"/><rect x="1330" y="274" width="10.5" height="10.5" fill="rgb(219,219,219)"/><rect x="1340" y="274" width="10.5" height="10.5" fill="rgb(209,209,209)"/><rect x="1350" y="274" width="10.5" height="10.5" fill="rgb(208,208,208)"/><rect x="1360" y="274" width="10.5" height="10.5" fill="rgb(207,207,207)"/><rect x="1370" y="274" width="10.5" height="10.5" fill="rgb(202,202,202)"/><rect x="1380" y="274" width="10.5" height="10.5" fill="rgb(192,192,192)"/><rect x="1390" y="274" width="10.5" height="10.5" fill="rgb(189,189,189)"/><rect x="1400" y="274" width="10.5" height="10.5" fill="rgb(188,188,188)"/><rect x="1410" y="274" width="10.5" height="10.5" fill="rgb(179,179,179)"/><rect x="1420" y="274" width="10.5" height="10.5" fill="rgb(151,151,151)"/><rect x="1430" y="274" width="10.5" height="10.5" fill="rgb(141,141,141)"/><rect x="1440" y="274" width="10.5" height="10.5" fill="rgb(140,140,140)"/><rect x="1450" y="274" width="10.5" height="10.5" fill="rgb(136,136,136)"/><rect x="1460" y="274" width="10.5" height="10.5" fill="rgb(121,121,121)"/><rect x="1470" y="274" width="10.5" height="10.5" fill="rgb(115,115,115)"/><rect x="1480" y="274" width="10.5" height="10.5" fill="rgb(114,114,114)"/><rect x="1490" y="274" width="10.5" height="10.5" fill="rgb(106,106,106)"/><rect x="1500" y="274" width="10.5" height="10.5" fill="rgb(84,84,84)"/><rect x="1510" y="274" width="10.5" height="10.5" fill="rgb(77,77,77)"/><rect x="1520" y="274" width="10.5" height="10.5" fill="rgb(75,75,75)"/><rect x="1530" y="274" width="10.5" height="10.5" fill="rgb(62,62,62)"/><rect x="1540" y="274" width="10.5" height="10.5" fill="rgb(53,53,53)"/><rect x="1550" y="274" width="10.5" height="10.5" fill="rgb(54,54,54)"/><rect x="1100" y="284" width="10.5" height="10.5" fill="rgb(157,157,157)"/><rect x="1110" y="284" width="10.5" height="10.5" fill="rgb(159,159,159)"/><rect x="1120" y="284" width="10.5" height="10.5" fill="rgb(160,160,160)"/><rect x="1130" y="284" width="10.5" height="10.5" fill="rgb(161,161,161)"/><rect x="1140" y="284" width="10.5" height="10.5" fill="rgb(168,168,168)"/><rect x="1150" y="284" width="10.5" height="10.5" fill="rgb(174,174,174)"/><rect x="1160" y="284" width="10.5" height="10.5" fill="rgb(174,174,174)"/><rect x="1170" y="284" width="10.5" height="10.5" fill="rgb(164,164,164)"/><rect x="1180" y="284" width="10.5" height="10.5" fill="rgb(143,143,143)"/><rect x="1190" y="284" width="10.5" height="10.5" fill="rgb(133,133,133)"/><rect x="1200" y="284" width="10.5" height="10.5" fill="rgb(136,136,136)"/><rect x="1210" y="284" width="10.5" height="10.5" fill="rgb(162,162,162)"/><rect x="1220" y="284" width="10.5" height="10.5" fill="rgb(183,183,183)"/><rect x="1230" y="284" width="10.5" height="10.5" fill="rgb(184,184,184)"/><rect x="1240" y="284" width="10.5" height="10.5" fill="rgb(182,182,182)"/><rect x="1250" y="284" width="10.5" height="10.5" fill="rgb(181,181,181)"/><rect x="1260" y="284" width="10.5" height="10.5" fill="rgb(181,181,181)"/><rect x="1270" y="284" width="10.5" height="10.5" fill="rgb(183,183,183)"/><rect x="1280" y="284" width="10.5" height="10.5" fill="rgb(184,184,184)"/><rect x="1290" y="284" width="10.5" height="10.5" fill="rgb(191,191,191)"/><rect x="1300" y="284" width="10.5" height="10.5" fill="rgb(212,212,212)"/><rect x="1310" y="284" width="10.5" height="10.5" fill="rgb(223,223,223)"/><rect x="1320" y="284" width="10.5" height="10.5" fill="rgb(223,223,223)"/><rect x="1330" y="284" width="10.5" height="10.5" fill="rgb(218,218,218)"/><rect x="1340" y="284" width="10.5" height="10.5" fill="rgb(210,210,210)"/><rect x="1350" y="284" width="10.5" height="10.5" fill="rgb(208,208,208)"/><rect x="1360" y="284" width="10.5" height="10.5" fill="rgb(208,208,208)"/><rect x="1370" y="284" width="10.5" height="10.5" fill="rgb(204,204,204)"/><rect x="1380" y="284" width="10.5" height="10.5" fill="rgb(195,195,195)"/><rect x="1390" y="284" width="10.5" height="10.5" fill="rgb(191,191,191)"/><rect x="1400" y="284" width="10.5" height="10.5" fill="rgb(189,189,189)"/><rect x="1410" y="284" width="10.5" height="10.5" fill="rgb(181,181,181)"/><rect x="1420" y="284" width="10.5" height="10.5" fill="rgb(157,157,157)"/><rect x="1430" y="284" width="10.5" height="10.5" fill="rgb(144,144,144)"/><rect x="1440" y="284" width="10.5" height="10.5" fill="rgb(142,142,142)"/><rect x="1450" y="284" width="10.5" height="10.5" fill="rgb(139,139,139)"/><rect x="1460" y="284" width="10.5" height="10.5" fill="rgb(124,124,124)"/><rect x="1470" y="284" width="10.5" height="10.5" fill="rgb(116,116,116)"/><rect x="1480" y="284" width="10.5" height="10.5" fill="rgb(114,114,114)"/><rect x="1490" y="284" width="10.5" height="10.5" fill="rgb(106,106,106)"/><rect x="1500" y="284" width="10.5" height="10.5" fill="rgb(86,86,86)"/><rect x="1510" y="284" width="10.5" height="10.5" fill="rgb(77,77,77)"/><rect x="1520" y="284" width="10.5" height="10.5" fill="rgb(69,69,69)"/><rect x="1530" y="284" width="10.5" height="10.5" fill="rgb(52,52,52)"/><rect x="1540" y="284" width="10.5" height="10.5" fill="rgb(48,48,48)"/><rect x="1550" y="284" width="10.5" height="10.5" fill="rgb(50,50,50)"/><rect x="1100" y="294" width="10.5" height="10.5" fill="rgb(154,154,154)"/><rect x="1110" y="294" width="10.5" height="10.5" fill="rgb(153,153,153)"/><rect x="1120" y="294" width="10.5" height="10.5" fill="rgb(154,154,154)"/><rect x="1130" y="294" width="10.5" height="10.5" fill="rgb(158,158,158)"/><rect x="1140" y="294" width="10.5" height="10.5" fill="rgb(166,166,166)"/><rect x="1150" y="294" width="10.5" height="10.5" fill="rgb(172,172,172)"/><rect x="1160" y="294" width="10.5" height="10.5" fill="rgb(172,172,172)"/><rect x="1170" y="294" width="10.5" height="10.5" fill="rgb(164,164,164)"/><rect x="1180" y="294" width="10.5" height="10.5" fill="rgb(149,149,149)"/><rect x="1190" y="294" width="10.5" height="10.5" fill="rgb(142,142,142)"/><rect x="1200" y="294" width="10.5" height="10.5" fill="rgb(150,150,150)"/><rect x="1210" y="294" width="10.5" height="10.5" fill="rgb(175,175,175)"/><rect x="1220" y="294" width="10.5" height="10.5" fill="rgb(188,188,188)"/><rect x="1230" y="294" width="10.5" height="10.5" fill="rgb(187,187,187)"/><rect x="1240" y="294" width="10.5" height="10.5" fill="rgb(181,181,181)"/><rect x="1250" y="294" width="10.5" height="10.5" fill="rgb(178,178,178)"/><rect x="1260" y="294" width="10.5" height="10.5" fill="rgb(179,179,179)"/><rect x="1270" y="294" width="10.5" height="10.5" fill="rgb(181,181,181)"/><rect x="1280" y="294" width="10.5" height="10.5" fill="rgb(183,183,183)"/><rect x="1290" y="294" width="10.5" height="10.5" fill="rgb(191,191,191)"/><rect x="1300" y="294" width="10.5" height="10.5" fill="rgb(206,206,206)"/><rect x="1310" y="294" width="10.5" height="10.5" fill="rgb(216,216,216)"/><rect x="1320" y="294" width="10.5" height="10.5" fill="rgb(218,218,218)"/><rect x="1330" y="294" width="10.5" height="10.5" fill="rgb(215,215,215)"/><rect x="1340" y="294" width="10.5" height="10.5" fill="rgb(213,213,213)"/><rect x="1350" y="294" width="10.5" height="10.5" fill="rgb(212,212,212)"/><rect x="1360" y="294" width="10.5" height="10.5" fill="rgb(211,211,211)"/><rect x="1370" y="294" width="10.5" height="10.5" fill="rgb(209,209,209)"/><rect x="1380" y="294" width="10.5" height="10.5" fill="rgb(205,205,205)"/><rect x="1390" y="294" width="10.5" height="10.5" fill="rgb(202,202,202)"/><rect x="1400" y="294" width="10.5" height="10.5" fill="rgb(199,199,199)"/><rect x="1410" y="294" width="10.5" height="10.5" fill="rgb(190,190,190)"/><rect x="1420" y="294" width="10.5" height="10.5" fill="rgb(173,173,173)"/><rect x="1430" y="294" width="10.5" height="10.5" fill="rgb(162,162,162)"/><rect x="1440" y="294" width="10.5" height="10.5" fill="rgb(157,157,157)"/><rect x="1450" y="294" width="10.5" height="10.5" fill="rgb(149,149,149)"/><rect x="1460" y="294" width="10.5" height="10.5" fill="rgb(132,132,132)"/><rect x="1470" y="294" width="10.5" height="10.5" fill="rgb(121,121,121)"/><rect x="1480" y="294" width="10.5" height="10.5" fill="rgb(116,116,116)"/><rect x="1490" y="294" width="10.5" height="10.5" fill="rgb(106,106,106)"/><rect x="1500" y="294" width="10.5" height="10.5" fill="rgb(89,89,89)"/><rect x="1510" y="294" width="10.5" height="10.5" fill="rgb(77,77,77)"/><rect x="1520" y="294" width="10.5" height="10.5" fill="rgb(66,66,66)"/><rect x="1530" y="294" width="10.5" height="10.5" fill="rgb(52,52,52)"/><rect x="1540" y="294" width="10.5" height="10.5" fill="rgb(49,49,49)"/><rect x="1550" y="294" width="10.5" height="10.5" fill="rgb(51,51,51)"/><rect x="1100" y="304" width="10.5" height="10.5" fill="rgb(153,153,153)"/><rect x="1110" y="304" width="10.5" height="10.5" fill="rgb(153,153,153)"/><rect x="1120" y="304" width="10.5" height="10.5" fill="rgb(153,153,153)"/><rect x="1130" y="304" width="10.5" height="10.5" fill="rgb(158,158,158)"/><rect x="1140" y="304" width="10.5" height="10.5" fill="rgb(170,170,170)"/><rect x="1150" y="304" width="10.5" height="10.5" fill="rgb(178,178,178)"/><rect x="1160" y="304" width="10.5" height="10.5" fill="rgb(178,178,178)"/><rect x="1170" y="304" width="10.5" height="10.5" fill="rgb(168,168,168)"/><rect x="1180" y="304" width="10.5" height="10.5" fill="rgb(149,149,149)"/><rect x="1190" y="304" width="10.5" height="10.5" fill="rgb(140,140,140)"/><rect x="1200" y="304" width="10.5" height="10.5" fill="rgb(143,143,143)"/><rect x="1210" y="304" width="10.5" height="10.5" fill="rgb(166,166,166)"/><rect x="1220" y="304" width="10.5" height="10.5" fill="rgb(182,182,182)"/><rect x="1230" y="304" width="10.5" height="10.5" fill="rgb(178,178,178)"/><rect x="1240" y="304" width="10.5" height="10.5" fill="rgb(172,172,172)"/><rect x="1250" y="304" width="10.5" height="10.5" fill="rgb(173,173,173)"/><rect x="1260" y="304" width="10.5" height="10.5" fill="rgb(177,177,177)"/><rect x="1270" y="304" width="10.5" height="10.5" fill="rgb(178,178,178)"/><rect x="1280" y="304" width="10.5" height="10.5" fill="rgb(180,180,180)"/><rect x="1290" y="304" width="10.5" height="10.5" fill="rgb(188,188,188)"/><rect x="1300" y="304" width="10.5" height="10.5" fill="rgb(206,206,206)"/><rect x="1310" y="304" width="10.5" height="10.5" fill="rgb(216,216,216)"/><rect x="1320" y="304" width="10.5" height="10.5" fill="rgb(217,217,217)"/><rect x="1330" y="304" width="10.5" height="10.5" fill="rgb(216,216,216)"/><rect x="1340" y="304" width="10.5" height="10.5" fill="rgb(217,217,217)"/><rect x="1350" y="304" width="10.5" height="10.5" fill="rgb(219,219,219)"/><rect x="1360" y="304" width="10.5" height="10.5" fill="rgb(219,219,219)"/><rect x="1370" y="304" width="10.5" height="10.5" fill="rgb(217,217,217)"/><rect x="1380" y="304" width="10.5" height="10.5" fill="rgb(216,216,216)"/><rect x="1390" y="304" width="10.5" height="10.5" fill="rgb(217,217,217)"/><rect x="1400" y="304" width="10.5" height="10.5" fill="rgb(216,216,216)"/><rect x="1410" y="304" width="10.5" height="10.5" fill="rgb(206,206,206)"/><rect x="1420" y="304" width="10.5" height="10.5" fill="rgb(187,187,187)"/><rect x="1430" y="304" width="10.5" height="10.5" fill="rgb(178,178,178)"/><rect x="1440" y="304" width="10.5" height="10.5" fill="rgb(175,175,175)"/><rect x="1450" y="304" width="10.5" height="10.5" fill="rgb(163,163,163)"/><rect x="1460" y="304" width="10.5" height="10.5" fill="rgb(137,137,137)"/><rect x="1470" y="304" width="10.5" height="10.5" fill="rgb(124,124,124)"/><rect x="1480" y="304" width="10.5" height="10.5" fill="rgb(120,120,120)"/><rect x="1490" y="304" width="10.5" height="10.5" fill="rgb(110,110,110)"/><rect x="1500" y="304" width="10.5" height="10.5" fill="rgb(89,89,89)"/><rect x="1510" y="304" width="10.5" height="10.5" fill="rgb(78,78,78)"/><rect x="1520" y="304" width="10.5" height="10.5" fill="rgb(74,74,74)"/><rect x="1530" y="304" width="10.5" height="10.5" fill="rgb(64,64,64)"/><rect x="1540" y="304" width="10.5" height="10.5" fill="rgb(57,57,57)"/><rect x="1550" y="304" width="10.5" height="10.5" fill="rgb(57,57,57)"/><rect x="1100" y="314" width="10.5" height="10.5" fill="rgb(153,153,153)"/><rect x="1110" y="314" width="10.5" height="10.5" fill="rgb(153,153,153)"/><rect x="1120" y="314" width="10.5" height="10.5" fill="rgb(154,154,154)"/><rect x="1130" y="314" width="10.5" height="10.5" fill="rgb(159,159,159)"/><rect x="1140" y="314" width="10.5" height="10.5" fill="rgb(173,173,173)"/><rect x="1150" y="314" width="10.5" height="10.5" fill="rgb(181,181,181)"/><rect x="1160" y="314" width="10.5" height="10.5" fill="rgb(181,181,181)"/><rect x="1170" y="314" width="10.5" height="10.5" fill="rgb(171,171,171)"/><rect x="1180" y="314" width="10.5" height="10.5" fill="rgb(146,146,146)"/><rect x="1190" y="314" width="10.5" height="10.5" fill="rgb(136,136,136)"/><rect x="1200" y="314" width="10.5" height="10.5" fill="rgb(137,137,137)"/><rect x="1210" y="314" width="10.5" height="10.5" fill="rgb(151,151,151)"/><rect x="1220" y="314" width="10.5" height="10.5" fill="rgb(168,168,168)"/><rect x="1230" y="314" width="10.5" height="10.5" fill="rgb(168,168,168)"/><rect x="1240" y="314" width="10.5" height="10.5" fill="rgb(167,167,167)"/><rect x="1250" y="314" width="10.5" height="10.5" fill="rgb(171,171,171)"/><rect x="1260" y="314" width="10.5" height="10.5" fill="rgb(176,176,176)"/><rect x="1270" y="314" width="10.5" height="10.5" fill="rgb(177,177,177)"/><rect x="1280" y="314" width="10.5" height="10.5" fill="rgb(178,178,178)"/><rect x="1290" y="314" width="10.5" height="10.5" fill="rgb(185,185,185)"/><rect x="1300" y="314" width="10.5" height="10.5" fill="rgb(207,207,207)"/><rect x="1310" y="314" width="10.5" height="10.5" fill="rgb(217,217,217)"/><rect x="1320" y="314" width="10.5" height="10.5" fill="rgb(218,218,218)"/><rect x="1330" y="314" width="10.5" height="10.5" fill="rgb(216,216,216)"/><rect x="1340" y="314" width="10.5" height="10.5" fill="rgb(218,218,218)"/><rect x="1350" y="314" width="10.5" height="10.5" fill="rgb(220,220,220)"/><rect x="1360" y="314" width="10.5" height="10.5" fill="rgb(221,221,221)"/><rect x="1370" y="314" width="10.5" height="10.5" fill="rgb(221,221,221)"/><rect x="1380" y="314" width="10.5" height="10.5" fill="rgb(221,221,221)"/><rect x="1390" y="314" width="10.5" height="10.5" fill="rgb(221,221,221)"/><rect x="1400" y="314" width="10.5" height="10.5" fill="rgb(221,221,221)"/><rect x="1410" y="314" width="10.5" height="10.5" fill="rgb(215,215,215)"/><rect x="1420" y="314" width="10.5" height="10.5" fill="rgb(193,193,193)"/><rect x="1430" y="314" width="10.5" height="10.5" fill="rgb(182,182,182)"/><rect x="1440" y="314" width="10.5" height="10.5" fill="rgb(180,180,180)"/><rect x="1450" y="314" width="10.5" height="10.5" fill="rgb(172,172,172)"/><rect x="1460" y="314" width="10.5" height="10.5" fill="rgb(138,138,138)"/><rect x="1470" y="314" width="10.5" height="10.5" fill="rgb(123,123,123)"/><rect x="1480" y="314" width="10.5" height="10.5" fill="rgb(121,121,121)"/><rect x="1490" y="314" width="10.5" height="10.5" fill="rgb(113,113,113)"/><rect x="1500" y="314" width="10.5" height="10.5" fill="rgb(87,87,87)"/><rect x="1510" y="314" width="10.5" height="10.5" fill="rgb(78,78,78)"/><rect x="1520" y="314" width="10.5" height="10.5" fill="rgb(76,76,76)"/><rect x="1530" y="314" width="10.5" height="10.5" fill="rgb(73,73,73)"/><rect x="1540" y="314" width="10.5" height="10.5" fill="rgb(66,66,66)"/><rect x="1550" y="314" width="10.5" height="10.5" fill="rgb(62,62,62)"/><rect x="1100" y="324" width="10.5" height="10.5" fill="rgb(155,155,155)"/><rect x="1110" y="324" width="10.5" height="10.5" fill="rgb(158,158,158)"/><rect x="1120" y="324" width="10.5" height="10.5" fill="rgb(159,159,159)"/><rect x="1130" y="324" width="10.5" height="10.5" fill="rgb(161,161,161)"/><rect x="1140" y="324" width="10.5" height="10.5" fill="rgb(172,172,172)"/><rect x="1150" y="324" width="10.5" height="10.5" fill="rgb(178,178,178)"/><rect x="1160" y="324" width="10.5" height="10.5" fill="rgb(178,178,178)"/><rect x="1170" y="324" width="10.5" height="10.5" fill="rgb(169,169,169)"/><rect x="1180" y="324" width="10.5" height="10.5" fill="rgb(148,148,148)"/><rect x="1190" y="324" width="10.5" height="10.5" fill="rgb(139,139,139)"/><rect x="1200" y="324" width="10.5" height="10.5" fill="rgb(139,139,139)"/><rect x="1210" y="324" width="10.5" height="10.5" fill="rgb(149,149,149)"/><rect x="1220" y="324" width="10.5" height="10.5" fill="rgb(167,167,167)"/><rect x="1230" y="324" width="10.5" height="10.5" fill="rgb(172,172,172)"/><rect x="1240" y="324" width="10.5" height="10.5" fill="rgb(173,173,173)"/><rect x="1250" y="324" width="10.5" height="10.5" fill="rgb(174,174,174)"/><rect x="1260" y="324" width="10.5" height="10.5" fill="rgb(177,177,177)"/><rect x="1270" y="324" width="10.5" height="10.5" fill="rgb(177,177,177)"/><rect x="1280" y="324" width="10.5" height="10.5" fill="rgb(178,178,178)"/><rect x="1290" y="324" width="10.5" height="10.5" fill="rgb(185,185,185)"/><rect x="1300" y="324" width="10.5" height="10.5" fill="rgb(201,201,201)"/><rect x="1310" y="324" width="10.5" height="10.5" fill="rgb(209,209,209)"/><rect x="1320" y="324" width="10.5" height="10.5" fill="rgb(210,210,210)"/><rect x="1330" y="324" width="10.5" height="10.5" fill="rgb(212,212,212)"/><rect x="1340" y="324" width="10.5" height="10.5" fill="rgb(219,219,219)"/><rect x="1350" y="324" width="10.5" height="10.5" fill="rgb(222,222,222)"/><rect x="1360" y="324" width="10.5" height="10.5" fill="rgb(223,223,223)"/><rect x="1370" y="324" width="10.5" height="10.5" fill="rgb(224,224,224)"/><rect x="1380" y="324" width="10.5" height="10.5" fill="rgb(228,228,228)"/><rect x="1390" y="324" width="10.5" height="10.5" fill="rgb(230,230,230)"/><rect x="1400" y="324" width="10.5" height="10.5" fill="rgb(229,229,229)"/><rect x="1410" y="324" width="10.5" height="10.5" fill="rgb(223,223,223)"/><rect x="1420" y="324" width="10.5" height="10.5" fill="rgb(209,209,209)"/><rect x="1430" y="324" width="10.5" height="10.5" fill="rgb(203,203,203)"/><rect x="1440" y="324" width="10.5" height="10.5" fill="rgb(200,200,200)"/><rect x="1450" y="324" width="10.5" height="10.5" fill="rgb(186,186,186)"/><rect x="1460" y="324" width="10.5" height="10.5" fill="rgb(144,144,144)"/><rect x="1470" y="324" width="10.5" height="10.5" fill="rgb(128,128,128)"/><rect x="1480" y="324" width="10.5" height="10.5" fill="rgb(125,125,125)"/><rect x="1490" y="324" width="10.5" height="10.5" fill="rgb(115,115,115)"/><rect x="1500" y="324" width="10.5" height="10.5" fill="rgb(87,87,87)"/><rect x="1510" y="324" width="10.5" height="10.5" fill="rgb(76,76,76)"/><rect x="1520" y="324" width="10.5" height="10.5" fill="rgb(74,74,74)"/><rect x="1530" y="324" width="10.5" height="10.5" fill="rgb(71,71,71)"/><rect x="1540" y="324" width="10.5" height="10.5" fill="rgb(63,63,63)"/><rect x="1550" y="324" width="10.5" height="10.5" fill="rgb(59,59,59)"/><rect x="1100" y="334" width="10.5" height="10.5" fill="rgb(150,150,150)"/><rect x="1110" y="334" width="10.5" height="10.5" fill="rgb(162,162,162)"/><rect x="1120" y="334" width="10.5" height="10.5" fill="rgb(164,164,164)"/><rect x="1130" y="334" width="10.5" height="10.5" fill="rgb(162,162,162)"/><rect x="1140" y="334" width="10.5" height="10.5" fill="rgb(171,171,171)"/><rect x="1150" y="334" width="10.5" height="10.5" fill="rgb(176,176,176)"/><rect x="1160" y="334" width="10.5" height="10.5" fill="rgb(176,176,176)"/><rect x="1170" y="334" width="10.5" height="10.5" fill="rgb(168,168,168)"/><rect x="1180" y="334" width="10.5" height="10.5" fill="rgb(148,148,148)"/><rect x="1190" y="334" width="10.5" height="10.5" fill="rgb(141,141,141)"/><rect x="1200" y="334" width="10.5" height="10.5" fill="rgb(141,141,141)"/><rect x="1210" y="334" width="10.5" height="10.5" fill="rgb(149,149,149)"/><rect x="1220" y="334" width="10.5" height="10.5" fill="rgb(171,171,171)"/><rect x="1230" y="334" width="10.5" height="10.5" fill="rgb(180,180,180)"/><rect x="1240" y="334" width="10.5" height="10.5" fill="rgb(181,181,181)"/><rect x="1250" y="334" width="10.5" height="10.5" fill="rgb(178,178,178)"/><rect x="1260" y="334" width="10.5" height="10.5" fill="rgb(177,177,177)"/><rect x="1270" y="334" width="10.5" height="10.5" fill="rgb(177,177,177)"/><rect x="1280" y="334" width="10.5" height="10.5" fill="rgb(178,178,178)"/><rect x="1290" y="334" width="10.5" height="10.5" fill="rgb(183,183,183)"/><rect x="1300" y="334" width="10.5" height="10.5" fill="rgb(196,196,196)"/><rect x="1310" y="334" width="10.5" height="10.5" fill="rgb(198,198,198)"/><rect x="1320" y="334" width="10.5" height="10.5" fill="rgb(199,199,199)"/><rect x="1330" y="334" width="10.5" height="10.5" fill="rgb(206,206,206)"/><rect x="1340" y="334" width="10.5" height="10.5" fill="rgb(220,220,220)"/><rect x="1350" y="334" width="10.5" height="10.5" fill="rgb(226,226,226)"/><rect x="1360" y="334" width="10.5" height="10.5" fill="rgb(226,226,226)"/><rect x="1370" y="334" width="10.5" height="10.5" fill="rgb(227,227,227)"/><rect x="1380" y="334" width="10.5" height="10.5" fill="rgb(235,235,235)"/><rect x="1390" y="334" width="10.5" height="10.5" fill="rgb(242,242,242)"/><rect x="1400" y="334" width="10.5" height="10.5" fill="rgb(242,242,242)"/><rect x="1410" y="334" width="10.5" height="10.5" fill="rgb(233,233,233)"/><rect x="1420" y="334" width="10.5" height="10.5" fill="rgb(225,225,225)"/><rect x="1430" y="334" width="10.5" height="10.5" fill="rgb(231,231,231)"/><rect x="1440" y="334" width="10.5" height="10.5" fill="rgb(230,230,230)"/><rect x="1450" y="334" width="10.5" height="10.5" fill="rgb(203,203,203)"/><rect x="1460" y="334" width="10.5" height="10.5" fill="rgb(150,150,150)"/><rect x="1470" y="334" width="10.5" height="10.5" fill="rgb(134,134,134)"/><rect x="1480" y="334" width="10.5" height="10.5" fill="rgb(131,131,131)"/><rect x="1490" y="334" width="10.5" height="10.5" fill="rgb(119,119,119)"/><rect x="1500" y="334" width="10.5" height="10.5" fill="rgb(86,86,86)"/><rect x="1510" y="334" width="10.5" height="10.5" fill="rgb(73,73,73)"/><rect x="1520" y="334" width="10.5" height="10.5" fill="rgb(71,71,71)"/><rect x="1530" y="334" width="10.5" height="10.5" fill="rgb(62,62,62)"/><rect x="1540" y="334" width="10.5" height="10.5" fill="rgb(51,51,51)"/><rect x="1550" y="334" width="10.5" height="10.5" fill="rgb(50,50,50)"/><rect x="1100" y="344" width="10.5" height="10.5" fill="rgb(121,121,121)"/><rect x="1110" y="344" width="10.5" height="10.5" fill="rgb(130,130,130)"/><rect x="1120" y="344" width="10.5" height="10.5" fill="rgb(146,146,146)"/><rect x="1130" y="344" width="10.5" height="10.5" fill="rgb(154,154,154)"/><rect x="1140" y="344" width="10.5" height="10.5" fill="rgb(166,166,166)"/><rect x="1150" y="344" width="10.5" height="10.5" fill="rgb(174,174,174)"/><rect x="1160" y="344" width="10.5" height="10.5" fill="rgb(174,174,174)"/><rect x="1170" y="344" width="10.5" height="10.5" fill="rgb(166,166,166)"/><rect x="1180" y="344" width="10.5" height="10.5" fill="rgb(150,150,150)"/><rect x="1190" y="344" width="10.5" height="10.5" fill="rgb(142,142,142)"/><rect x="1200" y="344" width="10.5" height="10.5" fill="rgb(143,143,143)"/><rect x="1210" y="344" width="10.5" height="10.5" fill="rgb(151,151,151)"/><rect x="1220" y="344" width="10.5" height="10.5" fill="rgb(170,170,170)"/><rect x="1230" y="344" width="10.5" height="10.5" fill="rgb(180,180,180)"/><rect x="1240" y="344" width="10.5" height="10.5" fill="rgb(181,181,181)"/><rect x="1250" y="344" width="10.5" height="10.5" fill="rgb(178,178,178)"/><rect x="1260" y="344" width="10.5" height="10.5" fill="rgb(177,177,177)"/><rect x="1270" y="344" width="10.5" height="10.5" fill="rgb(177,177,177)"/><rect x="1280" y="344" width="10.5" height="10.5" fill="rgb(178,178,178)"/><rect x="1290" y="344" width="10.5" height="10.5" fill="rgb(183,183,183)"/><rect x="1300" y="344" width="10.5" height="10.5" fill="rgb(194,194,194)"/><rect x="1310" y="344" width="10.5" height="10.5" fill="rgb(197,197,197)"/><rect x="1320" y="344" width="10.5" height="10.5" fill="rgb(199,199,199)"/><rect x="1330" y="344" width="10.5" height="10.5" fill="rgb(206,206,206)"/><rect x="1340" y="344" width="10.5" height="10.5" fill="rgb(220,220,220)"/><rect x="1350" y="344" width="10.5" height="10.5" fill="rgb(226,226,226)"/><rect x="1360" y="344" width="10.5" height="10.5" fill="rgb(227,227,227)"/><rect x="1370" y="344" width="10.5" height="10.5" fill="rgb(229,229,229)"/><rect x="1380" y="344" width="10.5" height="10.5" fill="rgb(236,236,236)"/><rect x="1390" y="344" width="10.5" height="10.5" fill="rgb(242,242,242)"/><rect x="1400" y="344" width="10.5" height="10.5" fill="rgb(242,242,242)"/><rect x="1410" y="344" width="10.5" height="10.5" fill="rgb(235,235,235)"/><rect x="1420" y="344" width="10.5" height="10.5" fill="rgb(230,230,230)"/><rect x="1430" y="344" width="10.5" height="10.5" fill="rgb(232,232,232)"/><rect x="1440" y="344" width="10.5" height="10.5" fill="rgb(229,229,229)"/><rect x="1450" y="344" width="10.5" height="10.5" fill="rgb(204,204,204)"/><rect x="1460" y="344" width="10.5" height="10.5" fill="rgb(156,156,156)"/><rect x="1470" y="344" width="10.5" height="10.5" fill="rgb(136,136,136)"/><rect x="1480" y="344" width="10.5" height="10.5" fill="rgb(132,132,132)"/><rect x="1490" y="344" width="10.5" height="10.5" fill="rgb(119,119,119)"/><rect x="1500" y="344" width="10.5" height="10.5" fill="rgb(87,87,87)"/><rect x="1510" y="344" width="10.5" height="10.5" fill="rgb(73,73,73)"/><rect x="1520" y="344" width="10.5" height="10.5" fill="rgb(66,66,66)"/><rect x="1530" y="344" width="10.5" height="10.5" fill="rgb(49,49,49)"/><rect x="1540" y="344" width="10.5" height="10.5" fill="rgb(42,42,42)"/><rect x="1550" y="344" width="10.5" height="10.5" fill="rgb(44,44,44)"/><rect x="1100" y="354" width="10.5" height="10.5" fill="rgb(103,103,103)"/><rect x="1110" y="354" width="10.5" height="10.5" fill="rgb(100,100,100)"/><rect x="1120" y="354" width="10.5" height="10.5" fill="rgb(118,118,118)"/><rect x="1130" y="354" width="10.5" height="10.5" fill="rgb(142,142,142)"/><rect x="1140" y="354" width="10.5" height="10.5" fill="rgb(160,160,160)"/><rect x="1150" y="354" width="10.5" height="10.5" fill="rgb(168,168,168)"/><rect x="1160" y="354" width="10.5" height="10.5" fill="rgb(168,168,168)"/><rect x="1170" y="354" width="10.5" height="10.5" fill="rgb(162,162,162)"/><rect x="1180" y="354" width="10.5" height="10.5" fill="rgb(151,151,151)"/><rect x="1190" y="354" width="10.5" height="10.5" fill="rgb(144,144,144)"/><rect x="1200" y="354" width="10.5" height="10.5" fill="rgb(145,145,145)"/><rect x="1210" y="354" width="10.5" height="10.5" fill="rgb(154,154,154)"/><rect x="1220" y="354" width="10.5" height="10.5" fill="rgb(167,167,167)"/><rect x="1230" y="354" width="10.5" height="10.5" fill="rgb(175,175,175)"/><rect x="1240" y="354" width="10.5" height="10.5" fill="rgb(177,177,177)"/><rect x="1250" y="354" width="10.5" height="10.5" fill="rgb(176,176,176)"/><rect x="1260" y="354" width="10.5" height="10.5" fill="rgb(175,175,175)"/><rect x="1270" y="354" width="10.5" height="10.5" fill="rgb(175,175,175)"/><rect x="1280" y="354" width="10.5" height="10.5" fill="rgb(176,176,176)"/><rect x="1290" y="354" width="10.5" height="10.5" fill="rgb(183,183,183)"/><rect x="1300" y="354" width="10.5" height="10.5" fill="rgb(195,195,195)"/><rect x="1310" y="354" width="10.5" height="10.5" fill="rgb(202,202,202)"/><rect x="1320" y="354" width="10.5" height="10.5" fill="rgb(205,205,205)"/><rect x="1330" y="354" width="10.5" height="10.5" fill="rgb(212,212,212)"/><rect x="1340" y="354" width="10.5" height="10.5" fill="rgb(223,223,223)"/><rect x="1350" y="354" width="10.5" height="10.5" fill="rgb(230,230,230)"/><rect x="1360" y="354" width="10.5" height="10.5" fill="rgb(232,232,232)"/><rect x="1370" y="354" width="10.5" height="10.5" fill="rgb(233,233,233)"/><rect x="1380" y="354" width="10.5" height="10.5" fill="rgb(238,238,238)"/><rect x="1390" y="354" width="10.5" height="10.5" fill="rgb(241,241,241)"/><rect x="1400" y="354" width="10.5" height="10.5" fill="rgb(241,241,241)"/><rect x="1410" y="354" width="10.5" height="10.5" fill="rgb(236,236,236)"/><rect x="1420" y="354" width="10.5" height="10.5" fill="rgb(232,232,232)"/><rect x="1430" y="354" width="10.5" height="10.5" fill="rgb(230,230,230)"/><rect x="1440" y="354" width="10.5" height="10.5" fill="rgb(225,225,225)"/><rect x="1450" y="354" width="10.5" height="10.5" fill="rgb(202,202,202)"/><rect x="1460" y="354" width="10.5" height="10.5" fill="rgb(166,166,166)"/><rect x="1470" y="354" width="10.5" height="10.5" fill="rgb(146,146,146)"/><rect x="1480" y="354" width="10.5" height="10.5" fill="rgb(136,136,136)"/><rect x="1490" y="354" width="10.5" height="10.5" fill="rgb(119,119,119)"/><rect x="1500" y="354" width="10.5" height="10.5" fill="rgb(91,91,91)"/><rect x="1510" y="354" width="10.5" height="10.5" fill="rgb(73,73,73)"/><rect x="1520" y="354" width="10.5" height="10.5" fill="rgb(61,61,61)"/><rect x="1530" y="354" width="10.5" height="10.5" fill="rgb(46,46,46)"/><rect x="1540" y="354" width="10.5" height="10.5" fill="rgb(42,42,42)"/><rect x="1550" y="354" width="10.5" height="10.5" fill="rgb(43,43,43)"/><rect x="1100" y="364" width="10.5" height="10.5" fill="rgb(117,117,117)"/><rect x="1110" y="364" width="10.5" height="10.5" fill="rgb(125,125,125)"/><rect x="1120" y="364" width="10.5" height="10.5" fill="rgb(140,140,140)"/><rect x="1130" y="364" width="10.5" height="10.5" fill="rgb(149,149,149)"/><rect x="1140" y="364" width="10.5" height="10.5" fill="rgb(161,161,161)"/><rect x="1150" y="364" width="10.5" height="10.5" fill="rgb(168,168,168)"/><rect x="1160" y="364" width="10.5" height="10.5" fill="rgb(168,168,168)"/><rect x="1170" y="364" width="10.5" height="10.5" fill="rgb(162,162,162)"/><rect x="1180" y="364" width="10.5" height="10.5" fill="rgb(147,147,147)"/><rect x="1190" y="364" width="10.5" height="10.5" fill="rgb(139,139,139)"/><rect x="1200" y="364" width="10.5" height="10.5" fill="rgb(140,140,140)"/><rect x="1210" y="364" width="10.5" height="10.5" fill="rgb(151,151,151)"/><rect x="1220" y="364" width="10.5" height="10.5" fill="rgb(169,169,169)"/><rect x="1230" y="364" width="10.5" height="10.5" fill="rgb(175,175,175)"/><rect x="1240" y="364" width="10.5" height="10.5" fill="rgb(176,176,176)"/><rect x="1250" y="364" width="10.5" height="10.5" fill="rgb(175,175,175)"/><rect x="1260" y="364" width="10.5" height="10.5" fill="rgb(171,171,171)"/><rect x="1270" y="364" width="10.5" height="10.5" fill="rgb(168,168,168)"/><rect x="1280" y="364" width="10.5" height="10.5" fill="rgb(169,169,169)"/><rect x="1290" y="364" width="10.5" height="10.5" fill="rgb(179,179,179)"/><rect x="1300" y="364" width="10.5" height="10.5" fill="rgb(200,200,200)"/><rect x="1310" y="364" width="10.5" height="10.5" fill="rgb(211,211,211)"/><rect x="1320" y="364" width="10.5" height="10.5" fill="rgb(213,213,213)"/><rect x="1330" y="364" width="10.5" height="10.5" fill="rgb(217,217,217)"/><rect x="1340" y="364" width="10.5" height="10.5" fill="rgb(231,231,231)"/><rect x="1350" y="364" width="10.5" height="10.5" fill="rgb(240,240,240)"/><rect x="1360" y="364" width="10.5" height="10.5" fill="rgb(242,242,242)"/><rect x="1370" y="364" width="10.5" height="10.5" fill="rgb(240,240,240)"/><rect x="1380" y="364" width="10.5" height="10.5" fill="rgb(243,243,243)"/><rect x="1390" y="364" width="10.5" height="10.5" fill="rgb(248,248,248)"/><rect x="1400" y="364" width="10.5" height="10.5" fill="rgb(248,248,248)"/><rect x="1410" y="364" width="10.5" height="10.5" fill="rgb(242,242,242)"/><rect x="1420" y="364" width="10.5" height="10.5" fill="rgb(238,238,238)"/><rect x="1430" y="364" width="10.5" height="10.5" fill="rgb(239,239,239)"/><rect x="1440" y="364" width="10.5" height="10.5" fill="rgb(236,236,236)"/><rect x="1450" y="364" width="10.5" height="10.5" fill="rgb(212,212,212)"/><rect x="1460" y="364" width="10.5" height="10.5" fill="rgb(169,169,169)"/><rect x="1470" y="364" width="10.5" height="10.5" fill="rgb(152,152,152)"/><rect x="1480" y="364" width="10.5" height="10.5" fill="rgb(147,147,147)"/><rect x="1490" y="364" width="10.5" height="10.5" fill="rgb(127,127,127)"/><rect x="1500" y="364" width="10.5" height="10.5" fill="rgb(87,87,87)"/><rect x="1510" y="364" width="10.5" height="10.5" fill="rgb(69,69,69)"/><rect x="1520" y="364" width="10.5" height="10.5" fill="rgb(64,64,64)"/><rect x="1530" y="364" width="10.5" height="10.5" fill="rgb(55,55,55)"/><rect x="1540" y="364" width="10.5" height="10.5" fill="rgb(47,47,47)"/><rect x="1550" y="364" width="10.5" height="10.5" fill="rgb(47,47,47)"/><rect x="1100" y="374" width="10.5" height="10.5" fill="rgb(145,145,145)"/><rect x="1110" y="374" width="10.5" height="10.5" fill="rgb(158,158,158)"/><rect x="1120" y="374" width="10.5" height="10.5" fill="rgb(160,160,160)"/><rect x="1130" y="374" width="10.5" height="10.5" fill="rgb(157,157,157)"/><rect x="1140" y="374" width="10.5" height="10.5" fill="rgb(164,164,164)"/><rect x="1150" y="374" width="10.5" height="10.5" fill="rgb(169,169,169)"/><rect x="1160" y="374" width="10.5" height="10.5" fill="rgb(169,169,169)"/><rect x="1170" y="374" width="10.5" height="10.5" fill="rgb(163,163,163)"/><rect x="1180" y="374" width="10.5" height="10.5" fill="rgb(144,144,144)"/><rect x="1190" y="374" width="10.5" height="10.5" fill="rgb(136,136,136)"/><rect x="1200" y="374" width="10.5" height="10.5" fill="rgb(137,137,137)"/><rect x="1210" y="374" width="10.5" height="10.5" fill="rgb(152,152,152)"/><rect x="1220" y="374" width="10.5" height="10.5" fill="rgb(172,172,172)"/><rect x="1230" y="374" width="10.5" height="10.5" fill="rgb(177,177,177)"/><rect x="1240" y="374" width="10.5" height="10.5" fill="rgb(177,177,177)"/><rect x="1250" y="374" width="10.5" height="10.5" fill="rgb(175,175,175)"/><rect x="1260" y="374" width="10.5" height="10.5" fill="rgb(169,169,169)"/><rect x="1270" y="374" width="10.5" height="10.5" fill="rgb(166,166,166)"/><rect x="1280" y="374" width="10.5" height="10.5" fill="rgb(166,166,166)"/><rect x="1290" y="374" width="10.5" height="10.5" fill="rgb(176,176,176)"/><rect x="1300" y="374" width="10.5" height="10.5" fill="rgb(203,203,203)"/><rect x="1310" y="374" width="10.5" height="10.5" fill="rgb(213,213,213)"/><rect x="1320" y="374" width="10.5" height="10.5" fill="rgb(214,214,214)"/><rect x="1330" y="374" width="10.5" height="10.5" fill="rgb(218,218,218)"/><rect x="1340" y="374" width="10.5" height="10.5" fill="rgb(236,236,236)"/><rect x="1350" y="374" width="10.5" height="10.5" fill="rgb(244,244,244)"/><rect x="1360" y="374" width="10.5" height="10.5" fill="rgb(245,245,245)"/><rect x="1370" y="374" width="10.5" height="10.5" fill="rgb(243,243,243)"/><rect x="1380" y="374" width="10.5" height="10.5" fill="rgb(247,247,247)"/><rect x="1390" y="374" width="10.5" height="10.5" fill="rgb(251,251,251)"/><rect x="1400" y="374" width="10.5" height="10.5" fill="rgb(251,251,251)"/><rect x="1410" y="374" width="10.5" height="10.5" fill="rgb(246,246,246)"/><rect x="1420" y="374" width="10.5" height="10.5" fill="rgb(241,241,241)"/><rect x="1430" y="374" width="10.5" height="10.5" fill="rgb(243,243,243)"/><rect x="1440" y="374" width="10.5" height="10.5" fill="rgb(242,242,242)"/><rect x="1450" y="374" width="10.5" height="10.5" fill="rgb(220,220,220)"/><rect x="1460" y="374" width="10.5" height="10.5" fill="rgb(167,167,167)"/><rect x="1470" y="374" width="10.5" height="10.5" fill="rgb(152,152,152)"/><rect x="1480" y="374" width="10.5" height="10.5" fill="rgb(150,150,150)"/><rect x="1490" y="374" width="10.5" height="10.5" fill="rgb(132,132,132)"/><rect x="1500" y="374" width="10.5" height="10.5" fill="rgb(83,83,83)"/><rect x="1510" y="374" width="10.5" height="10.5" fill="rgb(66,66,66)"/><rect x="1520" y="374" width="10.5" height="10.5" fill="rgb(65,65,65)"/><rect x="1530" y="374" width="10.5" height="10.5" fill="rgb(62,62,62)"/><rect x="1540" y="374" width="10.5" height="10.5" fill="rgb(56,56,56)"/><rect x="1550" y="374" width="10.5" height="10.5" fill="rgb(54,54,54)"/><rect x="1100" y="384" width="10.5" height="10.5" fill="rgb(149,149,149)"/><rect x="1110" y="384" width="10.5" height="10.5" fill="rgb(157,157,157)"/><rect x="1120" y="384" width="10.5" height="10.5" fill="rgb(158,158,158)"/><rect x="1130" y="384" width="10.5" height="10.5" fill="rgb(156,156,156)"/><rect x="1140" y="384" width="10.5" height="10.5" fill="rgb(162,162,162)"/><rect x="1150" y="384" width="10.5" height="10.5" fill="rgb(168,168,168)"/><rect x="1160" y="384" width="10.5" height="10.5" fill="rgb(168,168,168)"/><rect x="1170" y="384" width="10.5" height="10.5" fill="rgb(162,162,162)"/><rect x="1180" y="384" width="10.5" height="10.5" fill="rgb(146,146,146)"/><rect x="1190" y="384" width="10.5" height="10.5" fill="rgb(139,139,139)"/><rect x="1200" y="384" width="10.5" height="10.5" fill="rgb(143,143,143)"/><rect x="1210" y="384" width="10.5" height="10.5" fill="rgb(167,167,167)"/><rect x="1220" y="384" width="10.5" height="10.5" fill="rgb(180,180,180)"/><rect x="1230" y="384" width="10.5" height="10.5" fill="rgb(178,178,178)"/><rect x="1240" y="384" width="10.5" height="10.5" fill="rgb(177,177,177)"/><rect x="1250" y="384" width="10.5" height="10.5" fill="rgb(175,175,175)"/><rect x="1260" y="384" width="10.5" height="10.5" fill="rgb(170,170,170)"/><rect x="1270" y="384" width="10.5" height="10.5" fill="rgb(167,167,167)"/><rect x="1280" y="384" width="10.5" height="10.5" fill="rgb(168,168,168)"/><rect x="1290" y="384" width="10.5" height="10.5" fill="rgb(178,178,178)"/><rect x="1300" y="384" width="10.5" height="10.5" fill="rgb(202,202,202)"/><rect x="1310" y="384" width="10.5" height="10.5" fill="rgb(212,212,212)"/><rect x="1320" y="384" width="10.5" height="10.5" fill="rgb(214,214,214)"/><rect x="1330" y="384" width="10.5" height="10.5" fill="rgb(218,218,218)"/><rect x="1340" y="384" width="10.5" height="10.5" fill="rgb(234,234,234)"/><rect x="1350" y="384" width="10.5" height="10.5" fill="rgb(243,243,243)"/><rect x="1360" y="384" width="10.5" height="10.5" fill="rgb(243,243,243)"/><rect x="1370" y="384" width="10.5" height="10.5" fill="rgb(242,242,242)"/><rect x="1380" y="384" width="10.5" height="10.5" fill="rgb(246,246,246)"/><rect x="1390" y="384" width="10.5" height="10.5" fill="rgb(250,250,250)"/><rect x="1400" y="384" width="10.5" height="10.5" fill="rgb(249,249,249)"/><rect x="1410" y="384" width="10.5" height="10.5" fill="rgb(244,244,244)"/><rect x="1420" y="384" width="10.5" height="10.5" fill="rgb(239,239,239)"/><rect x="1430" y="384" width="10.5" height="10.5" fill="rgb(241,241,241)"/><rect x="1440" y="384" width="10.5" height="10.5" fill="rgb(238,238,238)"/><rect x="1450" y="384" width="10.5" height="10.5" fill="rgb(215,215,215)"/><rect x="1460" y="384" width="10.5" height="10.5" fill="rgb(168,168,168)"/><rect x="1470" y="384" width="10.5" height="10.5" fill="rgb(152,152,152)"/><rect x="1480" y="384" width="10.5" height="10.5" fill="rgb(148,148,148)"/><rect x="1490" y="384" width="10.5" height="10.5" fill="rgb(128,128,128)"/><rect x="1500" y="384" width="10.5" height="10.5" fill="rgb(84,84,84)"/><rect x="1510" y="384" width="10.5" height="10.5" fill="rgb(67,67,67)"/><rect x="1520" y="384" width="10.5" height="10.5" fill="rgb(64,64,64)"/><rect x="1530" y="384" width="10.5" height="10.5" fill="rgb(60,60,60)"/><rect x="1540" y="384" width="10.5" height="10.5" fill="rgb(55,55,55)"/><rect x="1550" y="384" width="10.5" height="10.5" fill="rgb(54,54,54)"/><rect x="1100" y="394" width="10.5" height="10.5" fill="rgb(135,135,135)"/><rect x="1110" y="394" width="10.5" height="10.5" fill="rgb(137,137,137)"/><rect x="1120" y="394" width="10.5" height="10.5" fill="rgb(139,139,139)"/><rect x="1130" y="394" width="10.5" height="10.5" fill="rgb(143,143,143)"/><rect x="1140" y="394" width="10.5" height="10.5" fill="rgb(155,155,155)"/><rect x="1150" y="394" width="10.5" height="10.5" fill="rgb(164,164,164)"/><rect x="1160" y="394" width="10.5" height="10.5" fill="rgb(165,165,165)"/><rect x="1170" y="394" width="10.5" height="10.5" fill="rgb(160,160,160)"/><rect x="1180" y="394" width="10.5" height="10.5" fill="rgb(152,152,152)"/><rect x="1190" y="394" width="10.5" height="10.5" fill="rgb(149,149,149)"/><rect x="1200" y="394" width="10.5" height="10.5" fill="rgb(159,159,159)"/><rect x="1210" y="394" width="10.5" height="10.5" fill="rgb(179,179,179)"/><rect x="1220" y="394" width="10.5" height="10.5" fill="rgb(185,185,185)"/><rect x="1230" y="394" width="10.5" height="10.5" fill="rgb(182,182,182)"/><rect x="1240" y="394" width="10.5" height="10.5" fill="rgb(178,178,178)"/><rect x="1250" y="394" width="10.5" height="10.5" fill="rgb(176,176,176)"/><rect x="1260" y="394" width="10.5" height="10.5" fill="rgb(174,174,174)"/><rect x="1270" y="394" width="10.5" height="10.5" fill="rgb(173,173,173)"/><rect x="1280" y="394" width="10.5" height="10.5" fill="rgb(175,175,175)"/><rect x="1290" y="394" width="10.5" height="10.5" fill="rgb(183,183,183)"/><rect x="1300" y="394" width="10.5" height="10.5" fill="rgb(199,199,199)"/><rect x="1310" y="394" width="10.5" height="10.5" fill="rgb(208,208,208)"/><rect x="1320" y="394" width="10.5" height="10.5" fill="rgb(211,211,211)"/><rect x="1330" y="394" width="10.5" height="10.5" fill="rgb(217,217,217)"/><rect x="1340" y="394" width="10.5" height="10.5" fill="rgb(229,229,229)"/><rect x="1350" y="394" width="10.5" height="10.5" fill="rgb(237,237,237)"/><rect x="1360" y="394" width="10.5" height="10.5" fill="rgb(239,239,239)"/><rect x="1370" y="394" width="10.5" height="10.5" fill="rgb(240,240,240)"/><rect x="1380" y="394" width="10.5" height="10.5" fill="rgb(244,244,244)"/><rect x="1390" y="394" width="10.5" height="10.5" fill="rgb(248,248,248)"/><rect x="1400" y="394" width="10.5" height="10.5" fill="rgb(247,247,247)"/><rect x="1410" y="394" width="10.5" height="10.5" fill="rgb(242,242,242)"/><rect x="1420" y="394" width="10.5" height="10.5" fill="rgb(235,235,235)"/><rect x="1430" y="394" width="10.5" height="10.5" fill="rgb(232,232,232)"/><rect x="1440" y="394" width="10.5" height="10.5" fill="rgb(226,226,226)"/><rect x="1450" y="394" width="10.5" height="10.5" fill="rgb(203,203,203)"/><rect x="1460" y="394" width="10.5" height="10.5" fill="rgb(165,165,165)"/><rect x="1470" y="394" width="10.5" height="10.5" fill="rgb(145,145,145)"/><rect x="1480" y="394" width="10.5" height="10.5" fill="rgb(136,136,136)"/><rect x="1490" y="394" width="10.5" height="10.5" fill="rgb(116,116,116)"/><rect x="1500" y="394" width="10.5" height="10.5" fill="rgb(83,83,83)"/><rect x="1510" y="394" width="10.5" height="10.5" fill="rgb(64,64,64)"/><rect x="1520" y="394" width="10.5" height="10.5" fill="rgb(55,55,55)"/><rect x="1530" y="394" width="10.5" height="10.5" fill="rgb(47,47,47)"/><rect x="1540" y="394" width="10.5" height="10.5" fill="rgb(45,45,45)"/><rect x="1550" y="394" width="10.5" height="10.5" fill="rgb(47,47,47)"/><rect x="1100" y="404" width="10.5" height="10.5" fill="rgb(120,120,120)"/><rect x="1110" y="404" width="10.5" height="10.5" fill="rgb(118,118,118)"/><rect x="1120" y="404" width="10.5" height="10.5" fill="rgb(119,119,119)"/><rect x="1130" y="404" width="10.5" height="10.5" fill="rgb(129,129,129)"/><rect x="1140" y="404" width="10.5" height="10.5" fill="rgb(152,152,152)"/><rect x="1150" y="404" width="10.5" height="10.5" fill="rgb(166,166,166)"/><rect x="1160" y="404" width="10.5" height="10.5" fill="rgb(167,167,167)"/><rect x="1170" y="404" width="10.5" height="10.5" fill="rgb(162,162,162)"/><rect x="1180" y="404" width="10.5" height="10.5" fill="rgb(153,153,153)"/><rect x="1190" y="404" width="10.5" height="10.5" fill="rgb(149,149,149)"/><rect x="1200" y="404" width="10.5" height="10.5" fill="rgb(154,154,154)"/><rect x="1210" y="404" width="10.5" height="10.5" fill="rgb(173,173,173)"/><rect x="1220" y="404" width="10.5" height="10.5" fill="rgb(182,182,182)"/><rect x="1230" y="404" width="10.5" height="10.5" fill="rgb(179,179,179)"/><rect x="1240" y="404" width="10.5" height="10.5" fill="rgb(177,177,177)"/><rect x="1250" y="404" width="10.5" height="10.5" fill="rgb(176,176,176)"/><rect x="1260" y="404" width="10.5" height="10.5" fill="rgb(176,176,176)"/><rect x="1270" y="404" width="10.5" height="10.5" fill="rgb(177,177,177)"/><rect x="1280" y="404" width="10.5" height="10.5" fill="rgb(178,178,178)"/><rect x="1290" y="404" width="10.5" height="10.5" fill="rgb(184,184,184)"/><rect x="1300" y="404" width="10.5" height="10.5" fill="rgb(199,199,199)"/><rect x="1310" y="404" width="10.5" height="10.5" fill="rgb(207,207,207)"/><rect x="1320" y="404" width="10.5" height="10.5" fill="rgb(209,209,209)"/><rect x="1330" y="404" width="10.5" height="10.5" fill="rgb(215,215,215)"/><rect x="1340" y="404" width="10.5" height="10.5" fill="rgb(229,229,229)"/><rect x="1350" y="404" width="10.5" height="10.5" fill="rgb(237,237,237)"/><rect x="1360" y="404" width="10.5" height="10.5" fill="rgb(238,238,238)"/><rect x="1370" y="404" width="10.5" height="10.5" fill="rgb(239,239,239)"/><rect x="1380" y="404" width="10.5" height="10.5" fill="rgb(247,247,247)"/><rect x="1390" y="404" width="10.5" height="10.5" fill="rgb(253,253,253)"/><rect x="1400" y="404" width="10.5" height="10.5" fill="rgb(253,253,253)"/><rect x="1410" y="404" width="10.5" height="10.5" fill="rgb(244,244,244)"/><rect x="1420" y="404" width="10.5" height="10.5" fill="rgb(232,232,232)"/><rect x="1430" y="404" width="10.5" height="10.5" fill="rgb(230,230,230)"/><rect x="1440" y="404" width="10.5" height="10.5" fill="rgb(226,226,226)"/><rect x="1450" y="404" width="10.5" height="10.5" fill="rgb(203,203,203)"/><rect x="1460" y="404" width="10.5" height="10.5" fill="rgb(154,154,154)"/><rect x="1470" y="404" width="10.5" height="10.5" fill="rgb(132,132,132)"/><rect x="1480" y="404" width="10.5" height="10.5" fill="rgb(126,126,126)"/><rect x="1490" y="404" width="10.5" height="10.5" fill="rgb(110,110,110)"/><rect x="1500" y="404" width="10.5" height="10.5" fill="rgb(73,73,73)"/><rect x="1510" y="404" width="10.5" height="10.5" fill="rgb(55,55,55)"/><rect x="1520" y="404" width="10.5" height="10.5" fill="rgb(46,46,46)"/><rect x="1530" y="404" width="10.5" height="10.5" fill="rgb(38,38,38)"/><rect x="1540" y="404" width="10.5" height="10.5" fill="rgb(37,37,37)"/><rect x="1550" y="404" width="10.5" height="10.5" fill="rgb(41,41,41)"/><rect x="1100" y="414" width="10.5" height="10.5" fill="rgb(116,116,116)"/><rect x="1110" y="414" width="10.5" height="10.5" fill="rgb(115,115,115)"/><rect x="1120" y="414" width="10.5" height="10.5" fill="rgb(115,115,115)"/><rect x="1130" y="414" width="10.5" height="10.5" fill="rgb(122,122,122)"/><rect x="1140" y="414" width="10.5" height="10.5" fill="rgb(152,152,152)"/><rect x="1150" y="414" width="10.5" height="10.5" fill="rgb(168,168,168)"/><rect x="1160" y="414" width="10.5" height="10.5" fill="rgb(169,169,169)"/><rect x="1170" y="414" width="10.5" height="10.5" fill="rgb(164,164,164)"/><rect x="1180" y="414" width="10.5" height="10.5" fill="rgb(152,152,152)"/><rect x="1190" y="414" width="10.5" height="10.5" fill="rgb(147,147,147)"/><rect x="1200" y="414" width="10.5" height="10.5" fill="rgb(148,148,148)"/><rect x="1210" y="414" width="10.5" height="10.5" fill="rgb(160,160,160)"/><rect x="1220" y="414" width="10.5" height="10.5" fill="rgb(175,175,175)"/><rect x="1230" y="414" width="10.5" height="10.5" fill="rgb(177,177,177)"/><rect x="1240" y="414" width="10.5" height="10.5" fill="rgb(177,177,177)"/><rect x="1250" y="414" width="10.5" height="10.5" fill="rgb(176,176,176)"/><rect x="1260" y="414" width="10.5" height="10.5" fill="rgb(177,177,177)"/><rect x="1270" y="414" width="10.5" height="10.5" fill="rgb(177,177,177)"/><rect x="1280" y="414" width="10.5" height="10.5" fill="rgb(177,177,177)"/><rect x="1290" y="414" width="10.5" height="10.5" fill="rgb(183,183,183)"/><rect x="1300" y="414" width="10.5" height="10.5" fill="rgb(201,201,201)"/><rect x="1310" y="414" width="10.5" height="10.5" fill="rgb(207,207,207)"/><rect x="1320" y="414" width="10.5" height="10.5" fill="rgb(208,208,208)"/><rect x="1330" y="414" width="10.5" height="10.5" fill="rgb(213,213,213)"/><rect x="1340" y="414" width="10.5" height="10.5" fill="rgb(231,231,231)"/><rect x="1350" y="414" width="10.5" height="10.5" fill="rgb(238,238,238)"/><rect x="1360" y="414" width="10.5" height="10.5" fill="rgb(239,239,239)"/><rect x="1370" y="414" width="10.5" height="10.5" fill="rgb(239,239,239)"/><rect x="1380" y="414" width="10.5" height="10.5" fill="rgb(249,249,249)"/><rect x="1390" y="414" width="10.5" height="10.5" fill="rgb(255,255,255)"/><rect x="1400" y="414" width="10.5" height="10.5" fill="rgb(255,255,255)"/><rect x="1410" y="414" width="10.5" height="10.5" fill="rgb(246,246,246)"/><rect x="1420" y="414" width="10.5" height="10.5" fill="rgb(231,231,231)"/><rect x="1430" y="414" width="10.5" height="10.5" fill="rgb(231,231,231)"/><rect x="1440" y="414" width="10.5" height="10.5" fill="rgb(229,229,229)"/><rect x="1450" y="414" width="10.5" height="10.5" fill="rgb(206,206,206)"/><rect x="1460" y="414" width="10.5" height="10.5" fill="rgb(146,146,146)"/><rect x="1470" y="414" width="10.5" height="10.5" fill="rgb(128,128,128)"/><rect x="1480" y="414" width="10.5" height="10.5" fill="rgb(126,126,126)"/><rect x="1490" y="414" width="10.5" height="10.5" fill="rgb(111,111,111)"/><rect x="1500" y="414" width="10.5" height="10.5" fill="rgb(67,67,67)"/><rect x="1510" y="414" width="10.5" height="10.5" fill="rgb(53,53,53)"/><rect x="1520" y="414" width="10.5" height="10.5" fill="rgb(48,48,48)"/><rect x="1530" y="414" width="10.5" height="10.5" fill="rgb(37,37,37)"/><rect x="1540" y="414" width="10.5" height="10.5" fill="rgb(36,36,36)"/><rect x="1550" y="414" width="10.5" height="10.5" fill="rgb(39,39,39)"/><rect x="1100" y="424" width="10.5" height="10.5" fill="rgb(113,113,113)"/><rect x="1110" y="424" width="10.5" height="10.5" fill="rgb(114,114,114)"/><rect x="1120" y="424" width="10.5" height="10.5" fill="rgb(115,115,115)"/><rect x="1130" y="424" width="10.5" height="10.5" fill="rgb(120,120,120)"/><rect x="1140" y="424" width="10.5" height="10.5" fill="rgb(147,147,147)"/><rect x="1150" y="424" width="10.5" height="10.5" fill="rgb(166,166,166)"/><rect x="1160" y="424" width="10.5" height="10.5" fill="rgb(168,168,168)"/><rect x="1170" y="424" width="10.5" height="10.5" fill="rgb(163,163,163)"/><rect x="1180" y="424" width="10.5" height="10.5" fill="rgb(153,153,153)"/><rect x="1190" y="424" width="10.5" height="10.5" fill="rgb(148,148,148)"/><rect x="1200" y="424" width="10.5" height="10.5" fill="rgb(149,149,149)"/><rect x="1210" y="424" width="10.5" height="10.5" fill="rgb(157,157,157)"/><rect x="1220" y="424" width="10.5" height="10.5" fill="rgb(171,171,171)"/><rect x="1230" y="424" width="10.5" height="10.5" fill="rgb(176,176,176)"/><rect x="1240" y="424" width="10.5" height="10.5" fill="rgb(176,176,176)"/><rect x="1250" y="424" width="10.5" height="10.5" fill="rgb(175,175,175)"/><rect x="1260" y="424" width="10.5" height="10.5" fill="rgb(176,176,176)"/><rect x="1270" y="424" width="10.5" height="10.5" fill="rgb(177,177,177)"/><rect x="1280" y="424" width="10.5" height="10.5" fill="rgb(178,178,178)"/><rect x="1290" y="424" width="10.5" height="10.5" fill="rgb(183,183,183)"/><rect x="1300" y="424" width="10.5" height="10.5" fill="rgb(199,199,199)"/><rect x="1310" y="424" width="10.5" height="10.5" fill="rgb(207,207,207)"/><rect x="1320" y="424" width="10.5" height="10.5" fill="rgb(208,208,208)"/><rect x="1330" y="424" width="10.5" height="10.5" fill="rgb(213,213,213)"/><rect x="1340" y="424" width="10.5" height="10.5" fill="rgb(228,228,228)"/><rect x="1350" y="424" width="10.5" height="10.5" fill="rgb(236,236,236)"/><rect x="1360" y="424" width="10.5" height="10.5" fill="rgb(237,237,237)"/><rect x="1370" y="424" width="10.5" height="10.5" fill="rgb(237,237,237)"/><rect x="1380" y="424" width="10.5" height="10.5" fill="rgb(245,245,245)"/><rect x="1390" y="424" width="10.5" height="10.5" fill="rgb(253,253,253)"/><rect x="1400" y="424" width="10.5" height="10.5" fill="rgb(252,252,252)"/><rect x="1410" y="424" width="10.5" height="10.5" fill="rgb(240,240,240)"/><rect x="1420" y="424" width="10.5" height="10.5" fill="rgb(226,226,226)"/><rect x="1430" y="424" width="10.5" height="10.5" fill="rgb(227,227,227)"/><rect x="1440" y="424" width="10.5" height="10.5" fill="rgb(223,223,223)"/><rect x="1450" y="424" width="10.5" height="10.5" fill="rgb(196,196,196)"/><rect x="1460" y="424" width="10.5" height="10.5" fill="rgb(145,145,145)"/><rect x="1470" y="424" width="10.5" height="10.5" fill="rgb(127,127,127)"/><rect x="1480" y="424" width="10.5" height="10.5" fill="rgb(123,123,123)"/><rect x="1490" y="424" width="10.5" height="10.5" fill="rgb(106,106,106)"/><rect x="1500" y="424" width="10.5" height="10.5" fill="rgb(68,68,68)"/><rect x="1510" y="424" width="10.5" height="10.5" fill="rgb(53,53,53)"/><rect x="1520" y="424" width="10.5" height="10.5" fill="rgb(48,48,48)"/><rect x="1530" y="424" width="10.5" height="10.5" fill="rgb(41,41,41)"/><rect x="1540" y="424" width="10.5" height="10.5" fill="rgb(39,39,39)"/><rect x="1550" y="424" width="10.5" height="10.5" fill="rgb(41,41,41)"/><rect x="1100" y="434" width="10.5" height="10.5" fill="rgb(103,103,103)"/><rect x="1110" y="434" width="10.5" height="10.5" fill="rgb(105,105,105)"/><rect x="1120" y="434" width="10.5" height="10.5" fill="rgb(107,107,107)"/><rect x="1130" y="434" width="10.5" height="10.5" fill="rgb(116,116,116)"/><rect x="1140" y="434" width="10.5" height="10.5" fill="rgb(141,141,141)"/><rect x="1150" y="434" width="10.5" height="10.5" fill="rgb(161,161,161)"/><rect x="1160" y="434" width="10.5" height="10.5" fill="rgb(165,165,165)"/><rect x="1170" y="434" width="10.5" height="10.5" fill="rgb(162,162,162)"/><rect x="1180" y="434" width="10.5" height="10.5" fill="rgb(155,155,155)"/><rect x="1190" y="434" width="10.5" height="10.5" fill="rgb(152,152,152)"/><rect x="1200" y="434" width="10.5" height="10.5" fill="rgb(153,153,153)"/><rect x="1210" y="434" width="10.5" height="10.5" fill="rgb(159,159,159)"/><rect x="1220" y="434" width="10.5" height="10.5" fill="rgb(167,167,167)"/><rect x="1230" y="434" width="10.5" height="10.5" fill="rgb(172,172,172)"/><rect x="1240" y="434" width="10.5" height="10.5" fill="rgb(173,173,173)"/><rect x="1250" y="434" width="10.5" height="10.5" fill="rgb(173,173,173)"/><rect x="1260" y="434" width="10.5" height="10.5" fill="rgb(173,173,173)"/><rect x="1270" y="434" width="10.5" height="10.5" fill="rgb(173,173,173)"/><rect x="1280" y="434" width="10.5" height="10.5" fill="rgb(175,175,175)"/><rect x="1290" y="434" width="10.5" height="10.5" fill="rgb(182,182,182)"/><rect x="1300" y="434" width="10.5" height="10.5" fill="rgb(195,195,195)"/><rect x="1310" y="434" width="10.5" height="10.5" fill="rgb(204,204,204)"/><rect x="1320" y="434" width="10.5" height="10.5" fill="rgb(207,207,207)"/><rect x="1330" y="434" width="10.5" height="10.5" fill="rgb(212,212,212)"/><rect x="1340" y="434" width="10.5" height="10.5" fill="rgb(223,223,223)"/><rect x="1350" y="434" width="10.5" height="10.5" fill="rgb(230,230,230)"/><rect x="1360" y="434" width="10.5" height="10.5" fill="rgb(231,231,231)"/><rect x="1370" y="434" width="10.5" height="10.5" fill="rgb(230,230,230)"/><rect x="1380" y="434" width="10.5" height="10.5" fill="rgb(232,232,232)"/><rect x="1390" y="434" width="10.5" height="10.5" fill="rgb(234,234,234)"/><rect x="1400" y="434" width="10.5" height="10.5" fill="rgb(232,232,232)"/><rect x="1410" y="434" width="10.5" height="10.5" fill="rgb(221,221,221)"/><rect x="1420" y="434" width="10.5" height="10.5" fill="rgb(206,206,206)"/><rect x="1430" y="434" width="10.5" height="10.5" fill="rgb(199,199,199)"/><rect x="1440" y="434" width="10.5" height="10.5" fill="rgb(192,192,192)"/><rect x="1450" y="434" width="10.5" height="10.5" fill="rgb(170,170,170)"/><rect x="1460" y="434" width="10.5" height="10.5" fill="rgb(133,133,133)"/><rect x="1470" y="434" width="10.5" height="10.5" fill="rgb(114,114,114)"/><rect x="1480" y="434" width="10.5" height="10.5" fill="rgb(106,106,106)"/><rect x="1490" y="434" width="10.5" height="10.5" fill="rgb(92,92,92)"/><rect x="1500" y="434" width="10.5" height="10.5" fill="rgb(66,66,66)"/><rect x="1510" y="434" width="10.5" height="10.5" fill="rgb(50,50,50)"/><rect x="1520" y="434" width="10.5" height="10.5" fill="rgb(45,45,45)"/><rect x="1530" y="434" width="10.5" height="10.5" fill="rgb(42,42,42)"/><rect x="1540" y="434" width="10.5" height="10.5" fill="rgb(41,41,41)"/><rect x="1550" y="434" width="10.5" height="10.5" fill="rgb(43,43,43)"/><rect x="1100" y="444" width="10.5" height="10.5" fill="rgb(77,77,77)"/><rect x="1110" y="444" width="10.5" height="10.5" fill="rgb(69,69,69)"/><rect x="1120" y="444" width="10.5" height="10.5" fill="rgb(72,72,72)"/><rect x="1130" y="444" width="10.5" height="10.5" fill="rgb(98,98,98)"/><rect x="1140" y="444" width="10.5" height="10.5" fill="rgb(144,144,144)"/><rect x="1150" y="444" width="10.5" height="10.5" fill="rgb(168,168,168)"/><rect x="1160" y="444" width="10.5" height="10.5" fill="rgb(171,171,171)"/><rect x="1170" y="444" width="10.5" height="10.5" fill="rgb(165,165,165)"/><rect x="1180" y="444" width="10.5" height="10.5" fill="rgb(156,156,156)"/><rect x="1190" y="444" width="10.5" height="10.5" fill="rgb(153,153,153)"/><rect x="1200" y="444" width="10.5" height="10.5" fill="rgb(154,154,154)"/><rect x="1210" y="444" width="10.5" height="10.5" fill="rgb(158,158,158)"/><rect x="1220" y="444" width="10.5" height="10.5" fill="rgb(167,167,167)"/><rect x="1230" y="444" width="10.5" height="10.5" fill="rgb(170,170,170)"/><rect x="1240" y="444" width="10.5" height="10.5" fill="rgb(171,171,171)"/><rect x="1250" y="444" width="10.5" height="10.5" fill="rgb(170,170,170)"/><rect x="1260" y="444" width="10.5" height="10.5" fill="rgb(168,168,168)"/><rect x="1270" y="444" width="10.5" height="10.5" fill="rgb(167,167,167)"/><rect x="1280" y="444" width="10.5" height="10.5" fill="rgb(168,168,168)"/><rect x="1290" y="444" width="10.5" height="10.5" fill="rgb(177,177,177)"/><rect x="1300" y="444" width="10.5" height="10.5" fill="rgb(196,196,196)"/><rect x="1310" y="444" width="10.5" height="10.5" fill="rgb(205,205,205)"/><rect x="1320" y="444" width="10.5" height="10.5" fill="rgb(207,207,207)"/><rect x="1330" y="444" width="10.5" height="10.5" fill="rgb(210,210,210)"/><rect x="1340" y="444" width="10.5" height="10.5" fill="rgb(222,222,222)"/><rect x="1350" y="444" width="10.5" height="10.5" fill="rgb(230,230,230)"/><rect x="1360" y="444" width="10.5" height="10.5" fill="rgb(230,230,230)"/><rect x="1370" y="444" width="10.5" height="10.5" fill="rgb(226,226,226)"/><rect x="1380" y="444" width="10.5" height="10.5" fill="rgb(221,221,221)"/><rect x="1390" y="444" width="10.5" height="10.5" fill="rgb(220,220,220)"/><rect x="1400" y="444" width="10.5" height="10.5" fill="rgb(219,219,219)"/><rect x="1410" y="444" width="10.5" height="10.5" fill="rgb(208,208,208)"/><rect x="1420" y="444" width="10.5" height="10.5" fill="rgb(182,182,182)"/><rect x="1430" y="444" width="10.5" height="10.5" fill="rgb(169,169,169)"/><rect x="1440" y="444" width="10.5" height="10.5" fill="rgb(165,165,165)"/><rect x="1450" y="444" width="10.5" height="10.5" fill="rgb(151,151,151)"/><rect x="1460" y="444" width="10.5" height="10.5" fill="rgb(111,111,111)"/><rect x="1470" y="444" width="10.5" height="10.5" fill="rgb(91,91,91)"/><rect x="1480" y="444" width="10.5" height="10.5" fill="rgb(87,87,87)"/><rect x="1490" y="444" width="10.5" height="10.5" fill="rgb(80,80,80)"/><rect x="1500" y="444" width="10.5" height="10.5" fill="rgb(55,55,55)"/><rect x="1510" y="444" width="10.5" height="10.5" fill="rgb(36,36,36)"/><rect x="1520" y="444" width="10.5" height="10.5" fill="rgb(32,32,32)"/><rect x="1530" y="444" width="10.5" height="10.5" fill="rgb(34,34,34)"/><rect x="1540" y="444" width="10.5" height="10.5" fill="rgb(38,38,38)"/><rect x="1550" y="444" width="10.5" height="10.5" fill="rgb(43,43,43)"/><rect x="1100" y="454" width="10.5" height="10.5" fill="rgb(63,63,63)"/><rect x="1110" y="454" width="10.5" height="10.5" fill="rgb(56,56,56)"/><rect x="1120" y="454" width="10.5" height="10.5" fill="rgb(58,58,58)"/><rect x="1130" y="454" width="10.5" height="10.5" fill="rgb(86,86,86)"/><rect x="1140" y="454" width="10.5" height="10.5" fill="rgb(149,149,149)"/><rect x="1150" y="454" width="10.5" height="10.5" fill="rgb(173,173,173)"/><rect x="1160" y="454" width="10.5" height="10.5" fill="rgb(174,174,174)"/><rect x="1170" y="454" width="10.5" height="10.5" fill="rgb(168,168,168)"/><rect x="1180" y="454" width="10.5" height="10.5" fill="rgb(156,156,156)"/><rect x="1190" y="454" width="10.5" height="10.5" fill="rgb(153,153,153)"/><rect x="1200" y="454" width="10.5" height="10.5" fill="rgb(153,153,153)"/><rect x="1210" y="454" width="10.5" height="10.5" fill="rgb(158,158,158)"/><rect x="1220" y="454" width="10.5" height="10.5" fill="rgb(168,168,168)"/><rect x="1230" y="454" width="10.5" height="10.5" fill="rgb(171,171,171)"/><rect x="1240" y="454" width="10.5" height="10.5" fill="rgb(171,171,171)"/><rect x="1250" y="454" width="10.5" height="10.5" fill="rgb(170,170,170)"/><rect x="1260" y="454" width="10.5" height="10.5" fill="rgb(167,167,167)"/><rect x="1270" y="454" width="10.5" height="10.5" fill="rgb(165,165,165)"/><rect x="1280" y="454" width="10.5" height="10.5" fill="rgb(166,166,166)"/><rect x="1290" y="454" width="10.5" height="10.5" fill="rgb(173,173,173)"/><rect x="1300" y="454" width="10.5" height="10.5" fill="rgb(197,197,197)"/><rect x="1310" y="454" width="10.5" height="10.5" fill="rgb(207,207,207)"/><rect x="1320" y="454" width="10.5" height="10.5" fill="rgb(207,207,207)"/><rect x="1330" y="454" width="10.5" height="10.5" fill="rgb(209,209,209)"/><rect x="1340" y="454" width="10.5" height="10.5" fill="rgb(223,223,223)"/><rect x="1350" y="454" width="10.5" height="10.5" fill="rgb(231,231,231)"/><rect x="1360" y="454" width="10.5" height="10.5" fill="rgb(231,231,231)"/><rect x="1370" y="454" width="10.5" height="10.5" fill="rgb(225,225,225)"/><rect x="1380" y="454" width="10.5" height="10.5" fill="rgb(218,218,218)"/><rect x="1390" y="454" width="10.5" height="10.5" fill="rgb(219,219,219)"/><rect x="1400" y="454" width="10.5" height="10.5" fill="rgb(218,218,218)"/><rect x="1410" y="454" width="10.5" height="10.5" fill="rgb(205,205,205)"/><rect x="1420" y="454" width="10.5" height="10.5" fill="rgb(173,173,173)"/><rect x="1430" y="454" width="10.5" height="10.5" fill="rgb(164,164,164)"/><rect x="1440" y="454" width="10.5" height="10.5" fill="rgb(163,163,163)"/><rect x="1450" y="454" width="10.5" height="10.5" fill="rgb(147,147,147)"/><rect x="1460" y="454" width="10.5" height="10.5" fill="rgb(100,100,100)"/><rect x="1470" y="454" width="10.5" height="10.5" fill="rgb(85,85,85)"/><rect x="1480" y="454" width="10.5" height="10.5" fill="rgb(83,83,83)"/><rect x="1490" y="454" width="10.5" height="10.5" fill="rgb(76,76,76)"/><rect x="1500" y="454" width="10.5" height="10.5" fill="rgb(46,46,46)"/><rect x="1510" y="454" width="10.5" height="10.5" fill="rgb(30,30,30)"/><rect x="1520" y="454" width="10.5" height="10.5" fill="rgb(28,28,28)"/><rect x="1530" y="454" width="10.5" height="10.5" fill="rgb(30,30,30)"/><rect x="1540" y="454" width="10.5" height="10.5" fill="rgb(34,34,34)"/><rect x="1550" y="454" width="10.5" height="10.5" fill="rgb(40,40,40)"/><rect x="1100" y="464" width="10.5" height="10.5" fill="rgb(65,65,65)"/><rect x="1110" y="464" width="10.5" height="10.5" fill="rgb(60,60,60)"/><rect x="1120" y="464" width="10.5" height="10.5" fill="rgb(64,64,64)"/><rect x="1130" y="464" width="10.5" height="10.5" fill="rgb(94,94,94)"/><rect x="1140" y="464" width="10.5" height="10.5" fill="rgb(139,139,139)"/><rect x="1150" y="464" width="10.5" height="10.5" fill="rgb(166,166,166)"/><rect x="1160" y="464" width="10.5" height="10.5" fill="rgb(170,170,170)"/><rect x="1170" y="464" width="10.5" height="10.5" fill="rgb(164,164,164)"/><rect x="1180" y="464" width="10.5" height="10.5" fill="rgb(155,155,155)"/><rect x="1190" y="464" width="10.5" height="10.5" fill="rgb(153,153,153)"/><rect x="1200" y="464" width="10.5" height="10.5" fill="rgb(154,154,154)"/><rect x="1210" y="464" width="10.5" height="10.5" fill="rgb(162,162,162)"/><rect x="1220" y="464" width="10.5" height="10.5" fill="rgb(172,172,172)"/><rect x="1230" y="464" width="10.5" height="10.5" fill="rgb(173,173,173)"/><rect x="1240" y="464" width="10.5" height="10.5" fill="rgb(171,171,171)"/><rect x="1250" y="464" width="10.5" height="10.5" fill="rgb(169,169,169)"/><rect x="1260" y="464" width="10.5" height="10.5" fill="rgb(166,166,166)"/><rect x="1270" y="464" width="10.5" height="10.5" fill="rgb(165,165,165)"/><rect x="1280" y="464" width="10.5" height="10.5" fill="rgb(166,166,166)"/><rect x="1290" y="464" width="10.5" height="10.5" fill="rgb(173,173,173)"/><rect x="1300" y="464" width="10.5" height="10.5" fill="rgb(192,192,192)"/><rect x="1310" y="464" width="10.5" height="10.5" fill="rgb(203,203,203)"/><rect x="1320" y="464" width="10.5" height="10.5" fill="rgb(205,205,205)"/><rect x="1330" y="464" width="10.5" height="10.5" fill="rgb(205,205,205)"/><rect x="1340" y="464" width="10.5" height="10.5" fill="rgb(216,216,216)"/><rect x="1350" y="464" width="10.5" height="10.5" fill="rgb(227,227,227)"/><rect x="1360" y="464" width="10.5" height="10.5" fill="rgb(227,227,227)"/><rect x="1370" y="464" width="10.5" height="10.5" fill="rgb(217,217,217)"/><rect x="1380" y="464" width="10.5" height="10.5" fill="rgb(209,209,209)"/><rect x="1390" y="464" width="10.5" height="10.5" fill="rgb(213,213,213)"/><rect x="1400" y="464" width="10.5" height="10.5" fill="rgb(212,212,212)"/><rect x="1410" y="464" width="10.5" height="10.5" fill="rgb(193,193,193)"/><rect x="1420" y="464" width="10.5" height="10.5" fill="rgb(166,166,166)"/><rect x="1430" y="464" width="10.5" height="10.5" fill="rgb(160,160,160)"/><rect x="1440" y="464" width="10.5" height="10.5" fill="rgb(157,157,157)"/><rect x="1450" y="464" width="10.5" height="10.5" fill="rgb(137,137,137)"/><rect x="1460" y="464" width="10.5" height="10.5" fill="rgb(97,97,97)"/><rect x="1470" y="464" width="10.5" height="10.5" fill="rgb(83,83,83)"/><rect x="1480" y="464" width="10.5" height="10.5" fill="rgb(79,79,79)"/><rect x="1490" y="464" width="10.5" height="10.5" fill="rgb(67,67,67)"/><rect x="1500" y="464" width="10.5" height="10.5" fill="rgb(43,43,43)"/><rect x="1510" y="464" width="10.5" height="10.5" fill="rgb(31,31,31)"/><rect x="1520" y="464" width="10.5" height="10.5" fill="rgb(29,29,29)"/><rect x="1530" y="464" width="10.5" height="10.5" fill="rgb(30,30,30)"/><rect x="1540" y="464" width="10.5" height="10.5" fill="rgb(34,34,34)"/><rect x="1550" y="464" width="10.5" height="10.5" fill="rgb(40,40,40)"/><rect x="1100" y="474" width="10.5" height="10.5" fill="rgb(79,79,79)"/><rect x="1110" y="474" width="10.5" height="10.5" fill="rgb(79,79,79)"/><rect x="1120" y="474" width="10.5" height="10.5" fill="rgb(91,91,91)"/><rect x="1130" y="474" width="10.5" height="10.5" fill="rgb(108,108,108)"/><rect x="1140" y="474" width="10.5" height="10.5" fill="rgb(121,121,121)"/><rect x="1150" y="474" width="10.5" height="10.5" fill="rgb(144,144,144)"/><rect x="1160" y="474" width="10.5" height="10.5" fill="rgb(158,158,158)"/><rect x="1170" y="474" width="10.5" height="10.5" fill="rgb(158,158,158)"/><rect x="1180" y="474" width="10.5" height="10.5" fill="rgb(152,152,152)"/><rect x="1190" y="474" width="10.5" height="10.5" fill="rgb(150,150,150)"/><rect x="1200" y="474" width="10.5" height="10.5" fill="rgb(153,153,153)"/><rect x="1210" y="474" width="10.5" height="10.5" fill="rgb(165,165,165)"/><rect x="1220" y="474" width="10.5" height="10.5" fill="rgb(175,175,175)"/><rect x="1230" y="474" width="10.5" height="10.5" fill="rgb(176,176,176)"/><rect x="1240" y="474" width="10.5" height="10.5" fill="rgb(172,172,172)"/><rect x="1250" y="474" width="10.5" height="10.5" fill="rgb(167,167,167)"/><rect x="1260" y="474" width="10.5" height="10.5" fill="rgb(165,165,165)"/><rect x="1270" y="474" width="10.5" height="10.5" fill="rgb(165,165,165)"/><rect x="1280" y="474" width="10.5" height="10.5" fill="rgb(166,166,166)"/><rect x="1290" y="474" width="10.5" height="10.5" fill="rgb(170,170,170)"/><rect x="1300" y="474" width="10.5" height="10.5" fill="rgb(179,179,179)"/><rect x="1310" y="474" width="10.5" height="10.5" fill="rgb(185,185,185)"/><rect x="1320" y="474" width="10.5" height="10.5" fill="rgb(187,187,187)"/><rect x="1330" y="474" width="10.5" height="10.5" fill="rgb(189,189,189)"/><rect x="1340" y="474" width="10.5" height="10.5" fill="rgb(196,196,196)"/><rect x="1350" y="474" width="10.5" height="10.5" fill="rgb(202,202,202)"/><rect x="1360" y="474" width="10.5" height="10.5" fill="rgb(201,201,201)"/><rect x="1370" y="474" width="10.5" height="10.5" fill="rgb(192,192,192)"/><rect x="1380" y="474" width="10.5" height="10.5" fill="rgb(180,180,180)"/><rect x="1390" y="474" width="10.5" height="10.5" fill="rgb(176,176,176)"/><rect x="1400" y="474" width="10.5" height="10.5" fill="rgb(172,172,172)"/><rect x="1410" y="474" width="10.5" height="10.5" fill="rgb(159,159,159)"/><rect x="1420" y="474" width="10.5" height="10.5" fill="rgb(141,141,141)"/><rect x="1430" y="474" width="10.5" height="10.5" fill="rgb(132,132,132)"/><rect x="1440" y="474" width="10.5" height="10.5" fill="rgb(126,126,126)"/><rect x="1450" y="474" width="10.5" height="10.5" fill="rgb(110,110,110)"/><rect x="1460" y="474" width="10.5" height="10.5" fill="rgb(83,83,83)"/><rect x="1470" y="474" width="10.5" height="10.5" fill="rgb(67,67,67)"/><rect x="1480" y="474" width="10.5" height="10.5" fill="rgb(57,57,57)"/><rect x="1490" y="474" width="10.5" height="10.5" fill="rgb(43,43,43)"/><rect x="1500" y="474" width="10.5" height="10.5" fill="rgb(34,34,34)"/><rect x="1510" y="474" width="10.5" height="10.5" fill="rgb(32,32,32)"/><rect x="1520" y="474" width="10.5" height="10.5" fill="rgb(31,31,31)"/><rect x="1530" y="474" width="10.5" height="10.5" fill="rgb(32,32,32)"/><rect x="1540" y="474" width="10.5" height="10.5" fill="rgb(36,36,36)"/><rect x="1550" y="474" width="10.5" height="10.5" fill="rgb(41,41,41)"/><rect x="1100" y="484" width="10.5" height="10.5" fill="rgb(95,95,95)"/><rect x="1110" y="484" width="10.5" height="10.5" fill="rgb(99,99,99)"/><rect x="1120" y="484" width="10.5" height="10.5" fill="rgb(105,105,105)"/><rect x="1130" y="484" width="10.5" height="10.5" fill="rgb(108,108,108)"/><rect x="1140" y="484" width="10.5" height="10.5" fill="rgb(112,112,112)"/><rect x="1150" y="484" width="10.5" height="10.5" fill="rgb(143,143,143)"/><rect x="1160" y="484" width="10.5" height="10.5" fill="rgb(165,165,165)"/><rect x="1170" y="484" width="10.5" height="10.5" fill="rgb(160,160,160)"/><rect x="1180" y="484" width="10.5" height="10.5" fill="rgb(148,148,148)"/><rect x="1190" y="484" width="10.5" height="10.5" fill="rgb(143,143,143)"/><rect x="1200" y="484" width="10.5" height="10.5" fill="rgb(144,144,144)"/><rect x="1210" y="484" width="10.5" height="10.5" fill="rgb(157,157,157)"/><rect x="1220" y="484" width="10.5" height="10.5" fill="rgb(169,169,169)"/><rect x="1230" y="484" width="10.5" height="10.5" fill="rgb(168,168,168)"/><rect x="1240" y="484" width="10.5" height="10.5" fill="rgb(161,161,161)"/><rect x="1250" y="484" width="10.5" height="10.5" fill="rgb(161,161,161)"/><rect x="1260" y="484" width="10.5" height="10.5" fill="rgb(163,163,163)"/><rect x="1270" y="484" width="10.5" height="10.5" fill="rgb(164,164,164)"/><rect x="1280" y="484" width="10.5" height="10.5" fill="rgb(164,164,164)"/><rect x="1290" y="484" width="10.5" height="10.5" fill="rgb(165,165,165)"/><rect x="1300" y="484" width="10.5" height="10.5" fill="rgb(167,167,167)"/><rect x="1310" y="484" width="10.5" height="10.5" fill="rgb(167,167,167)"/><rect x="1320" y="484" width="10.5" height="10.5" fill="rgb(168,168,168)"/><rect x="1330" y="484" width="10.5" height="10.5" fill="rgb(172,172,172)"/><rect x="1340" y="484" width="10.5" height="10.5" fill="rgb(178,178,178)"/><rect x="1350" y="484" width="10.5" height="10.5" fill="rgb(178,178,178)"/><rect x="1360" y="484" width="10.5" height="10.5" fill="rgb(178,178,178)"/><rect x="1370" y="484" width="10.5" height="10.5" fill="rgb(170,170,170)"/><rect x="1380" y="484" width="10.5" height="10.5" fill="rgb(146,146,146)"/><rect x="1390" y="484" width="10.5" height="10.5" fill="rgb(131,131,131)"/><rect x="1400" y="484" width="10.5" height="10.5" fill="rgb(128,128,128)"/><rect x="1410" y="484" width="10.5" height="10.5" fill="rgb(127,127,127)"/><rect x="1420" y="484" width="10.5" height="10.5" fill="rgb(110,110,110)"/><rect x="1430" y="484" width="10.5" height="10.5" fill="rgb(97,97,97)"/><rect x="1440" y="484" width="10.5" height="10.5" fill="rgb(94,94,94)"/><rect x="1450" y="484" width="10.5" height="10.5" fill="rgb(87,87,87)"/><rect x="1460" y="484" width="10.5" height="10.5" fill="rgb(61,61,61)"/><rect x="1470" y="484" width="10.5" height="10.5" fill="rgb(45,45,45)"/><rect x="1480" y="484" width="10.5" height="10.5" fill="rgb(39,39,39)"/><rect x="1490" y="484" width="10.5" height="10.5" fill="rgb(27,27,27)"/><rect x="1500" y="484" width="10.5" height="10.5" fill="rgb(24,24,24)"/><rect x="1510" y="484" width="10.5" height="10.5" fill="rgb(27,27,27)"/><rect x="1520" y="484" width="10.5" height="10.5" fill="rgb(32,32,32)"/><rect x="1530" y="484" width="10.5" height="10.5" fill="rgb(35,35,35)"/><rect x="1540" y="484" width="10.5" height="10.5" fill="rgb(39,39,39)"/><rect x="1550" y="484" width="10.5" height="10.5" fill="rgb(44,44,44)"/><rect x="1100" y="494" width="10.5" height="10.5" fill="rgb(104,104,104)"/><rect x="1110" y="494" width="10.5" height="10.5" fill="rgb(105,105,105)"/><rect x="1120" y="494" width="10.5" height="10.5" fill="rgb(105,105,105)"/><rect x="1130" y="494" width="10.5" height="10.5" fill="rgb(103,103,103)"/><rect x="1140" y="494" width="10.5" height="10.5" fill="rgb(109,109,109)"/><rect x="1150" y="494" width="10.5" height="10.5" fill="rgb(158,158,158)"/><rect x="1160" y="494" width="10.5" height="10.5" fill="rgb(174,174,174)"/><rect x="1170" y="494" width="10.5" height="10.5" fill="rgb(165,165,165)"/><rect x="1180" y="494" width="10.5" height="10.5" fill="rgb(145,145,145)"/><rect x="1190" y="494" width="10.5" height="10.5" fill="rgb(140,140,140)"/><rect x="1200" y="494" width="10.5" height="10.5" fill="rgb(140,140,140)"/><rect x="1210" y="494" width="10.5" height="10.5" fill="rgb(147,147,147)"/><rect x="1220" y="494" width="10.5" height="10.5" fill="rgb(156,156,156)"/><rect x="1230" y="494" width="10.5" height="10.5" fill="rgb(154,154,154)"/><rect x="1240" y="494" width="10.5" height="10.5" fill="rgb(154,154,154)"/><rect x="1250" y="494" width="10.5" height="10.5" fill="rgb(156,156,156)"/><rect x="1260" y="494" width="10.5" height="10.5" fill="rgb(161,161,161)"/><rect x="1270" y="494" width="10.5" height="10.5" fill="rgb(164,164,164)"/><rect x="1280" y="494" width="10.5" height="10.5" fill="rgb(164,164,164)"/><rect x="1290" y="494" width="10.5" height="10.5" fill="rgb(163,163,163)"/><rect x="1300" y="494" width="10.5" height="10.5" fill="rgb(163,163,163)"/><rect x="1310" y="494" width="10.5" height="10.5" fill="rgb(164,164,164)"/><rect x="1320" y="494" width="10.5" height="10.5" fill="rgb(164,164,164)"/><rect x="1330" y="494" width="10.5" height="10.5" fill="rgb(165,165,165)"/><rect x="1340" y="494" width="10.5" height="10.5" fill="rgb(172,172,172)"/><rect x="1350" y="494" width="10.5" height="10.5" fill="rgb(176,176,176)"/><rect x="1360" y="494" width="10.5" height="10.5" fill="rgb(175,175,175)"/><rect x="1370" y="494" width="10.5" height="10.5" fill="rgb(164,164,164)"/><rect x="1380" y="494" width="10.5" height="10.5" fill="rgb(133,133,133)"/><rect x="1390" y="494" width="10.5" height="10.5" fill="rgb(122,122,122)"/><rect x="1400" y="494" width="10.5" height="10.5" fill="rgb(121,121,121)"/><rect x="1410" y="494" width="10.5" height="10.5" fill="rgb(117,117,117)"/><rect x="1420" y="494" width="10.5" height="10.5" fill="rgb(98,98,98)"/><rect x="1430" y="494" width="10.5" height="10.5" fill="rgb(90,90,90)"/><rect x="1440" y="494" width="10.5" height="10.5" fill="rgb(89,89,89)"/><rect x="1450" y="494" width="10.5" height="10.5" fill="rgb(81,81,81)"/><rect x="1460" y="494" width="10.5" height="10.5" fill="rgb(52,52,52)"/><rect x="1470" y="494" width="10.5" height="10.5" fill="rgb(41,41,41)"/><rect x="1480" y="494" width="10.5" height="10.5" fill="rgb(38,38,38)"/><rect x="1490" y="494" width="10.5" height="10.5" fill="rgb(26,26,26)"/><rect x="1500" y="494" width="10.5" height="10.5" fill="rgb(23,23,23)"/><rect x="1510" y="494" width="10.5" height="10.5" fill="rgb(25,25,25)"/><rect x="1520" y="494" width="10.5" height="10.5" fill="rgb(30,30,30)"/><rect x="1530" y="494" width="10.5" height="10.5" fill="rgb(36,36,36)"/><rect x="1540" y="494" width="10.5" height="10.5" fill="rgb(41,41,41)"/><rect x="1550" y="494" width="10.5" height="10.5" fill="rgb(46,46,46)"/><rect x="1100" y="504" width="10.5" height="10.5" fill="rgb(108,108,108)"/><rect x="1110" y="504" width="10.5" height="10.5" fill="rgb(108,108,108)"/><rect x="1120" y="504" width="10.5" height="10.5" fill="rgb(106,106,106)"/><rect x="1130" y="504" width="10.5" height="10.5" fill="rgb(105,105,105)"/><rect x="1140" y="504" width="10.5" height="10.5" fill="rgb(117,117,117)"/><rect x="1150" y="504" width="10.5" height="10.5" fill="rgb(157,157,157)"/><rect x="1160" y="504" width="10.5" height="10.5" fill="rgb(170,170,170)"/><rect x="1170" y="504" width="10.5" height="10.5" fill="rgb(160,160,160)"/><rect x="1180" y="504" width="10.5" height="10.5" fill="rgb(143,143,143)"/><rect x="1190" y="504" width="10.5" height="10.5" fill="rgb(139,139,139)"/><rect x="1200" y="504" width="10.5" height="10.5" fill="rgb(139,139,139)"/><rect x="1210" y="504" width="10.5" height="10.5" fill="rgb(141,141,141)"/><rect x="1220" y="504" width="10.5" height="10.5" fill="rgb(149,149,149)"/><rect x="1230" y="504" width="10.5" height="10.5" fill="rgb(152,152,152)"/><rect x="1240" y="504" width="10.5" height="10.5" fill="rgb(152,152,152)"/><rect x="1250" y="504" width="10.5" height="10.5" fill="rgb(153,153,153)"/><rect x="1260" y="504" width="10.5" height="10.5" fill="rgb(159,159,159)"/><rect x="1270" y="504" width="10.5" height="10.5" fill="rgb(162,162,162)"/><rect x="1280" y="504" width="10.5" height="10.5" fill="rgb(163,163,163)"/><rect x="1290" y="504" width="10.5" height="10.5" fill="rgb(160,160,160)"/><rect x="1300" y="504" width="10.5" height="10.5" fill="rgb(159,159,159)"/><rect x="1310" y="504" width="10.5" height="10.5" fill="rgb(161,161,161)"/><rect x="1320" y="504" width="10.5" height="10.5" fill="rgb(161,161,161)"/><rect x="1330" y="504" width="10.5" height="10.5" fill="rgb(159,159,159)"/><rect x="1340" y="504" width="10.5" height="10.5" fill="rgb(163,163,163)"/><rect x="1350" y="504" width="10.5" height="10.5" fill="rgb(170,170,170)"/><rect x="1360" y="504" width="10.5" height="10.5" fill="rgb(169,169,169)"/><rect x="1370" y="504" width="10.5" height="10.5" fill="rgb(154,154,154)"/><rect x="1380" y="504" width="10.5" height="10.5" fill="rgb(128,128,128)"/><rect x="1390" y="504" width="10.5" height="10.5" fill="rgb(120,120,120)"/><rect x="1400" y="504" width="10.5" height="10.5" fill="rgb(118,118,118)"/><rect x="1410" y="504" width="10.5" height="10.5" fill="rgb(109,109,109)"/><rect x="1420" y="504" width="10.5" height="10.5" fill="rgb(92,92,92)"/><rect x="1430" y="504" width="10.5" height="10.5" fill="rgb(87,87,87)"/><rect x="1440" y="504" width="10.5" height="10.5" fill="rgb(85,85,85)"/><rect x="1450" y="504" width="10.5" height="10.5" fill="rgb(72,72,72)"/><rect x="1460" y="504" width="10.5" height="10.5" fill="rgb(50,50,50)"/><rect x="1470" y="504" width="10.5" height="10.5" fill="rgb(41,41,41)"/><rect x="1480" y="504" width="10.5" height="10.5" fill="rgb(38,38,38)"/><rect x="1490" y="504" width="10.5" height="10.5" fill="rgb(29,29,29)"/><rect x="1500" y="504" width="10.5" height="10.5" fill="rgb(25,25,25)"/><rect x="1510" y="504" width="10.5" height="10.5" fill="rgb(27,27,27)"/><rect x="1520" y="504" width="10.5" height="10.5" fill="rgb(32,32,32)"/><rect x="1530" y="504" width="10.5" height="10.5" fill="rgb(37,37,37)"/><rect x="1540" y="504" width="10.5" height="10.5" fill="rgb(43,43,43)"/><rect x="1550" y="504" width="10.5" height="10.5" fill="rgb(48,48,48)"/><rect x="1100" y="514" width="10.5" height="10.5" fill="rgb(112,112,112)"/><rect x="1110" y="514" width="10.5" height="10.5" fill="rgb(111,111,111)"/><rect x="1120" y="514" width="10.5" height="10.5" fill="rgb(111,111,111)"/><rect x="1130" y="514" width="10.5" height="10.5" fill="rgb(113,113,113)"/><rect x="1140" y="514" width="10.5" height="10.5" fill="rgb(126,126,126)"/><rect x="1150" y="514" width="10.5" height="10.5" fill="rgb(147,147,147)"/><rect x="1160" y="514" width="10.5" height="10.5" fill="rgb(156,156,156)"/><rect x="1170" y="514" width="10.5" height="10.5" fill="rgb(146,146,146)"/><rect x="1180" y="514" width="10.5" height="10.5" fill="rgb(129,129,129)"/><rect x="1190" y="514" width="10.5" height="10.5" fill="rgb(123,123,123)"/><rect x="1200" y="514" width="10.5" height="10.5" fill="rgb(123,123,123)"/><rect x="1210" y="514" width="10.5" height="10.5" fill="rgb(129,129,129)"/><rect x="1220" y="514" width="10.5" height="10.5" fill="rgb(139,139,139)"/><rect x="1230" y="514" width="10.5" height="10.5" fill="rgb(145,145,145)"/><rect x="1240" y="514" width="10.5" height="10.5" fill="rgb(147,147,147)"/><rect x="1250" y="514" width="10.5" height="10.5" fill="rgb(148,148,148)"/><rect x="1260" y="514" width="10.5" height="10.5" fill="rgb(153,153,153)"/><rect x="1270" y="514" width="10.5" height="10.5" fill="rgb(156,156,156)"/><rect x="1280" y="514" width="10.5" height="10.5" fill="rgb(156,156,156)"/><rect x="1290" y="514" width="10.5" height="10.5" fill="rgb(151,151,151)"/><rect x="1300" y="514" width="10.5" height="10.5" fill="rgb(145,145,145)"/><rect x="1310" y="514" width="10.5" height="10.5" fill="rgb(142,142,142)"/><rect x="1320" y="514" width="10.5" height="10.5" fill="rgb(141,141,141)"/><rect x="1330" y="514" width="10.5" height="10.5" fill="rgb(139,139,139)"/><rect x="1340" y="514" width="10.5" height="10.5" fill="rgb(138,138,138)"/><rect x="1350" y="514" width="10.5" height="10.5" fill="rgb(138,138,138)"/><rect x="1360" y="514" width="10.5" height="10.5" fill="rgb(136,136,136)"/><rect x="1370" y="514" width="10.5" height="10.5" fill="rgb(126,126,126)"/><rect x="1380" y="514" width="10.5" height="10.5" fill="rgb(110,110,110)"/><rect x="1390" y="514" width="10.5" height="10.5" fill="rgb(102,102,102)"/><rect x="1400" y="514" width="10.5" height="10.5" fill="rgb(98,98,98)"/><rect x="1410" y="514" width="10.5" height="10.5" fill="rgb(89,89,89)"/><rect x="1420" y="514" width="10.5" height="10.5" fill="rgb(75,75,75)"/><rect x="1430" y="514" width="10.5" height="10.5" fill="rgb(66,66,66)"/><rect x="1440" y="514" width="10.5" height="10.5" fill="rgb(59,59,59)"/><rect x="1450" y="514" width="10.5" height="10.5" fill="rgb(48,48,48)"/><rect x="1460" y="514" width="10.5" height="10.5" fill="rgb(42,42,42)"/><rect x="1470" y="514" width="10.5" height="10.5" fill="rgb(40,40,40)"/><rect x="1480" y="514" width="10.5" height="10.5" fill="rgb(38,38,38)"/><rect x="1490" y="514" width="10.5" height="10.5" fill="rgb(34,34,34)"/><rect x="1500" y="514" width="10.5" height="10.5" fill="rgb(31,31,31)"/><rect x="1510" y="514" width="10.5" height="10.5" fill="rgb(32,32,32)"/><rect x="1520" y="514" width="10.5" height="10.5" fill="rgb(35,35,35)"/><rect x="1530" y="514" width="10.5" height="10.5" fill="rgb(40,40,40)"/><rect x="1540" y="514" width="10.5" height="10.5" fill="rgb(45,45,45)"/><rect x="1550" y="514" width="10.5" height="10.5" fill="rgb(50,50,50)"/><rect x="1100" y="524" width="10.5" height="10.5" fill="rgb(115,115,115)"/><rect x="1110" y="524" width="10.5" height="10.5" fill="rgb(115,115,115)"/><rect x="1120" y="524" width="10.5" height="10.5" fill="rgb(116,116,116)"/><rect x="1130" y="524" width="10.5" height="10.5" fill="rgb(120,120,120)"/><rect x="1140" y="524" width="10.5" height="10.5" fill="rgb(128,128,128)"/><rect x="1150" y="524" width="10.5" height="10.5" fill="rgb(137,137,137)"/><rect x="1160" y="524" width="10.5" height="10.5" fill="rgb(138,138,138)"/><rect x="1170" y="524" width="10.5" height="10.5" fill="rgb(124,124,124)"/><rect x="1180" y="524" width="10.5" height="10.5" fill="rgb(105,105,105)"/><rect x="1190" y="524" width="10.5" height="10.5" fill="rgb(97,97,97)"/><rect x="1200" y="524" width="10.5" height="10.5" fill="rgb(97,97,97)"/><rect x="1210" y="524" width="10.5" height="10.5" fill="rgb(109,109,109)"/><rect x="1220" y="524" width="10.5" height="10.5" fill="rgb(129,129,129)"/><rect x="1230" y="524" width="10.5" height="10.5" fill="rgb(140,140,140)"/><rect x="1240" y="524" width="10.5" height="10.5" fill="rgb(142,142,142)"/><rect x="1250" y="524" width="10.5" height="10.5" fill="rgb(142,142,142)"/><rect x="1260" y="524" width="10.5" height="10.5" fill="rgb(149,149,149)"/><rect x="1270" y="524" width="10.5" height="10.5" fill="rgb(154,154,154)"/><rect x="1280" y="524" width="10.5" height="10.5" fill="rgb(154,154,154)"/><rect x="1290" y="524" width="10.5" height="10.5" fill="rgb(145,145,145)"/><rect x="1300" y="524" width="10.5" height="10.5" fill="rgb(127,127,127)"/><rect x="1310" y="524" width="10.5" height="10.5" fill="rgb(119,119,119)"/><rect x="1320" y="524" width="10.5" height="10.5" fill="rgb(118,118,118)"/><rect x="1330" y="524" width="10.5" height="10.5" fill="rgb(117,117,117)"/><rect x="1340" y="524" width="10.5" height="10.5" fill="rgb(109,109,109)"/><rect x="1350" y="524" width="10.5" height="10.5" fill="rgb(102,102,102)"/><rect x="1360" y="524" width="10.5" height="10.5" fill="rgb(101,101,101)"/><rect x="1370" y="524" width="10.5" height="10.5" fill="rgb(99,99,99)"/><rect x="1380" y="524" width="10.5" height="10.5" fill="rgb(86,86,86)"/><rect x="1390" y="524" width="10.5" height="10.5" fill="rgb(76,76,76)"/><rect x="1400" y="524" width="10.5" height="10.5" fill="rgb(74,74,74)"/><rect x="1410" y="524" width="10.5" height="10.5" fill="rgb(70,70,70)"/><rect x="1420" y="524" width="10.5" height="10.5" fill="rgb(54,54,54)"/><rect x="1430" y="524" width="10.5" height="10.5" fill="rgb(43,43,43)"/><rect x="1440" y="524" width="10.5" height="10.5" fill="rgb(36,36,36)"/><rect x="1450" y="524" width="10.5" height="10.5" fill="rgb(26,26,26)"/><rect x="1460" y="524" width="10.5" height="10.5" fill="rgb(25,25,25)"/><rect x="1470" y="524" width="10.5" height="10.5" fill="rgb(32,32,32)"/><rect x="1480" y="524" width="10.5" height="10.5" fill="rgb(36,36,36)"/><rect x="1490" y="524" width="10.5" height="10.5" fill="rgb(37,37,37)"/><rect x="1500" y="524" width="10.5" height="10.5" fill="rgb(36,36,36)"/><rect x="1510" y="524" width="10.5" height="10.5" fill="rgb(37,37,37)"/><rect x="1520" y="524" width="10.5" height="10.5" fill="rgb(40,40,40)"/><rect x="1530" y="524" width="10.5" height="10.5" fill="rgb(44,44,44)"/><rect x="1540" y="524" width="10.5" height="10.5" fill="rgb(48,48,48)"/><rect x="1550" y="524" width="10.5" height="10.5" fill="rgb(53,53,53)"/><rect x="1100" y="534" width="10.5" height="10.5" fill="rgb(118,118,118)"/><rect x="1110" y="534" width="10.5" height="10.5" fill="rgb(118,118,118)"/><rect x="1120" y="534" width="10.5" height="10.5" fill="rgb(120,120,120)"/><rect x="1130" y="534" width="10.5" height="10.5" fill="rgb(123,123,123)"/><rect x="1140" y="534" width="10.5" height="10.5" fill="rgb(127,127,127)"/><rect x="1150" y="534" width="10.5" height="10.5" fill="rgb(129,129,129)"/><rect x="1160" y="534" width="10.5" height="10.5" fill="rgb(123,123,123)"/><rect x="1170" y="534" width="10.5" height="10.5" fill="rgb(108,108,108)"/><rect x="1180" y="534" width="10.5" height="10.5" fill="rgb(95,95,95)"/><rect x="1190" y="534" width="10.5" height="10.5" fill="rgb(91,91,91)"/><rect x="1200" y="534" width="10.5" height="10.5" fill="rgb(91,91,91)"/><rect x="1210" y="534" width="10.5" height="10.5" fill="rgb(98,98,98)"/><rect x="1220" y="534" width="10.5" height="10.5" fill="rgb(122,122,122)"/><rect x="1230" y="534" width="10.5" height="10.5" fill="rgb(139,139,139)"/><rect x="1240" y="534" width="10.5" height="10.5" fill="rgb(141,141,141)"/><rect x="1250" y="534" width="10.5" height="10.5" fill="rgb(138,138,138)"/><rect x="1260" y="534" width="10.5" height="10.5" fill="rgb(147,147,147)"/><rect x="1270" y="534" width="10.5" height="10.5" fill="rgb(155,155,155)"/><rect x="1280" y="534" width="10.5" height="10.5" fill="rgb(155,155,155)"/><rect x="1290" y="534" width="10.5" height="10.5" fill="rgb(143,143,143)"/><rect x="1300" y="534" width="10.5" height="10.5" fill="rgb(119,119,119)"/><rect x="1310" y="534" width="10.5" height="10.5" fill="rgb(114,114,114)"/><rect x="1320" y="534" width="10.5" height="10.5" fill="rgb(114,114,114)"/><rect x="1330" y="534" width="10.5" height="10.5" fill="rgb(109,109,109)"/><rect x="1340" y="534" width="10.5" height="10.5" fill="rgb(98,98,98)"/><rect x="1350" y="534" width="10.5" height="10.5" fill="rgb(96,96,96)"/><rect x="1360" y="534" width="10.5" height="10.5" fill="rgb(95,95,95)"/><rect x="1370" y="534" width="10.5" height="10.5" fill="rgb(91,91,91)"/><rect x="1380" y="534" width="10.5" height="10.5" fill="rgb(76,76,76)"/><rect x="1390" y="534" width="10.5" height="10.5" fill="rgb(71,71,71)"/><rect x="1400" y="534" width="10.5" height="10.5" fill="rgb(70,70,70)"/><rect x="1410" y="534" width="10.5" height="10.5" fill="rgb(62,62,62)"/><rect x="1420" y="534" width="10.5" height="10.5" fill="rgb(45,45,45)"/><rect x="1430" y="534" width="10.5" height="10.5" fill="rgb(39,39,39)"/><rect x="1440" y="534" width="10.5" height="10.5" fill="rgb(33,33,33)"/><rect x="1450" y="534" width="10.5" height="10.5" fill="rgb(19,19,19)"/><rect x="1460" y="534" width="10.5" height="10.5" fill="rgb(19,19,19)"/><rect x="1470" y="534" width="10.5" height="10.5" fill="rgb(25,25,25)"/><rect x="1480" y="534" width="10.5" height="10.5" fill="rgb(32,32,32)"/><rect x="1490" y="534" width="10.5" height="10.5" fill="rgb(37,37,37)"/><rect x="1500" y="534" width="10.5" height="10.5" fill="rgb(40,40,40)"/><rect x="1510" y="534" width="10.5" height="10.5" fill="rgb(42,42,42)"/><rect x="1520" y="534" width="10.5" height="10.5" fill="rgb(44,44,44)"/><rect x="1530" y="534" width="10.5" height="10.5" fill="rgb(48,48,48)"/><rect x="1540" y="534" width="10.5" height="10.5" fill="rgb(52,52,52)"/><rect x="1550" y="534" width="10.5" height="10.5" fill="rgb(56,56,56)"/><rect x="1100" y="544" width="10.5" height="10.5" fill="rgb(120,120,120)"/><rect x="1110" y="544" width="10.5" height="10.5" fill="rgb(121,121,121)"/><rect x="1120" y="544" width="10.5" height="10.5" fill="rgb(122,122,122)"/><rect x="1130" y="544" width="10.5" height="10.5" fill="rgb(123,123,123)"/><rect x="1140" y="544" width="10.5" height="10.5" fill="rgb(124,124,124)"/><rect x="1150" y="544" width="10.5" height="10.5" fill="rgb(122,122,122)"/><rect x="1160" y="544" width="10.5" height="10.5" fill="rgb(114,114,114)"/><rect x="1170" y="544" width="10.5" height="10.5" fill="rgb(102,102,102)"/><rect x="1180" y="544" width="10.5" height="10.5" fill="rgb(94,94,94)"/><rect x="1190" y="544" width="10.5" height="10.5" fill="rgb(91,91,91)"/><rect x="1200" y="544" width="10.5" height="10.5" fill="rgb(90,90,90)"/><rect x="1210" y="544" width="10.5" height="10.5" fill="rgb(88,88,88)"/><rect x="1220" y="544" width="10.5" height="10.5" fill="rgb(88,88,88)"/><rect x="1230" y="544" width="10.5" height="10.5" fill="rgb(107,107,107)"/><rect x="1240" y="544" width="10.5" height="10.5" fill="rgb(121,121,121)"/><rect x="1250" y="544" width="10.5" height="10.5" fill="rgb(122,122,122)"/><rect x="1260" y="544" width="10.5" height="10.5" fill="rgb(134,134,134)"/><rect x="1270" y="544" width="10.5" height="10.5" fill="rgb(148,148,148)"/><rect x="1280" y="544" width="10.5" height="10.5" fill="rgb(146,146,146)"/><rect x="1290" y="544" width="10.5" height="10.5" fill="rgb(128,128,128)"/><rect x="1300" y="544" width="10.5" height="10.5" fill="rgb(110,110,110)"/><rect x="1310" y="544" width="10.5" height="10.5" fill="rgb(110,110,110)"/><rect x="1320" y="544" width="10.5" height="10.5" fill="rgb(108,108,108)"/><rect x="1330" y="544" width="10.5" height="10.5" fill="rgb(98,98,98)"/><rect x="1340" y="544" width="10.5" height="10.5" fill="rgb(88,88,88)"/><rect x="1350" y="544" width="10.5" height="10.5" fill="rgb(90,90,90)"/><rect x="1360" y="544" width="10.5" height="10.5" fill="rgb(90,90,90)"/><rect x="1370" y="544" width="10.5" height="10.5" fill="rgb(82,82,82)"/><rect x="1380" y="544" width="10.5" height="10.5" fill="rgb(70,70,70)"/><rect x="1390" y="544" width="10.5" height="10.5" fill="rgb(66,66,66)"/><rect x="1400" y="544" width="10.5" height="10.5" fill="rgb(61,61,61)"/><rect x="1410" y="544" width="10.5" height="10.5" fill="rgb(47,47,47)"/><rect x="1420" y="544" width="10.5" height="10.5" fill="rgb(40,40,40)"/><rect x="1430" y="544" width="10.5" height="10.5" fill="rgb(37,37,37)"/><rect x="1440" y="544" width="10.5" height="10.5" fill="rgb(31,31,31)"/><rect x="1450" y="544" width="10.5" height="10.5" fill="rgb(20,20,20)"/><rect x="1460" y="544" width="10.5" height="10.5" fill="rgb(19,19,19)"/><rect x="1470" y="544" width="10.5" height="10.5" fill="rgb(24,24,24)"/><rect x="1480" y="544" width="10.5" height="10.5" fill="rgb(31,31,31)"/><rect x="1490" y="544" width="10.5" height="10.5" fill="rgb(37,37,37)"/><rect x="1500" y="544" width="10.5" height="10.5" fill="rgb(42,42,42)"/><rect x="1510" y="544" width="10.5" height="10.5" fill="rgb(45,45,45)"/><rect x="1520" y="544" width="10.5" height="10.5" fill="rgb(48,48,48)"/><rect x="1530" y="544" width="10.5" height="10.5" fill="rgb(51,51,51)"/><rect x="1540" y="544" width="10.5" height="10.5" fill="rgb(55,55,55)"/><rect x="1550" y="544" width="10.5" height="10.5" fill="rgb(58,58,58)"/><rect x="1100" y="554" width="10.5" height="10.5" fill="rgb(121,121,121)"/><rect x="1110" y="554" width="10.5" height="10.5" fill="rgb(122,122,122)"/><rect x="1120" y="554" width="10.5" height="10.5" fill="rgb(122,122,122)"/><rect x="1130" y="554" width="10.5" height="10.5" fill="rgb(122,122,122)"/><rect x="1140" y="554" width="10.5" height="10.5" fill="rgb(121,121,121)"/><rect x="1150" y="554" width="10.5" height="10.5" fill="rgb(117,117,117)"/><rect x="1160" y="554" width="10.5" height="10.5" fill="rgb(110,110,110)"/><rect x="1170" y="554" width="10.5" height="10.5" fill="rgb(101,101,101)"/><rect x="1180" y="554" width="10.5" height="10.5" fill="rgb(95,95,95)"/><rect x="1190" y="554" width="10.5" height="10.5" fill="rgb(91,91,91)"/><rect x="1200" y="554" width="10.5" height="10.5" fill="rgb(85,85,85)"/><rect x="1210" y="554" width="10.5" height="10.5" fill="rgb(67,67,67)"/><rect x="1220" y="554" width="10.5" height="10.5" fill="rgb(48,48,48)"/><rect x="1230" y="554" width="10.5" height="10.5" fill="rgb(45,45,45)"/><rect x="1240" y="554" width="10.5" height="10.5" fill="rgb(63,63,63)"/><rect x="1250" y="554" width="10.5" height="10.5" fill="rgb(88,88,88)"/><rect x="1260" y="554" width="10.5" height="10.5" fill="rgb(99,99,99)"/><rect x="1270" y="554" width="10.5" height="10.5" fill="rgb(102,102,102)"/><rect x="1280" y="554" width="10.5" height="10.5" fill="rgb(96,96,96)"/><rect x="1290" y="554" width="10.5" height="10.5" fill="rgb(85,85,85)"/><rect x="1300" y="554" width="10.5" height="10.5" fill="rgb(79,79,79)"/><rect x="1310" y="554" width="10.5" height="10.5" fill="rgb(79,79,79)"/><rect x="1320" y="554" width="10.5" height="10.5" fill="rgb(76,76,76)"/><rect x="1330" y="554" width="10.5" height="10.5" fill="rgb(66,66,66)"/><rect x="1340" y="554" width="10.5" height="10.5" fill="rgb(56,56,56)"/><rect x="1350" y="554" width="10.5" height="10.5" fill="rgb(55,55,55)"/><rect x="1360" y="554" width="10.5" height="10.5" fill="rgb(56,56,56)"/><rect x="1370" y="554" width="10.5" height="10.5" fill="rgb(57,57,57)"/><rect x="1380" y="554" width="10.5" height="10.5" fill="rgb(55,55,55)"/><rect x="1390" y="554" width="10.5" height="10.5" fill="rgb(44,44,44)"/><rect x="1400" y="554" width="10.5" height="10.5" fill="rgb(28,28,28)"/><rect x="1410" y="554" width="10.5" height="10.5" fill="rgb(22,22,22)"/><rect x="1420" y="554" width="10.5" height="10.5" fill="rgb(27,27,27)"/><rect x="1430" y="554" width="10.5" height="10.5" fill="rgb(33,33,33)"/><rect x="1440" y="554" width="10.5" height="10.5" fill="rgb(31,31,31)"/><rect x="1450" y="554" width="10.5" height="10.5" fill="rgb(25,25,25)"/><rect x="1460" y="554" width="10.5" height="10.5" fill="rgb(24,24,24)"/><rect x="1470" y="554" width="10.5" height="10.5" fill="rgb(27,27,27)"/><rect x="1480" y="554" width="10.5" height="10.5" fill="rgb(33,33,33)"/><rect x="1490" y="554" width="10.5" height="10.5" fill="rgb(39,39,39)"/><rect x="1500" y="554" width="10.5" height="10.5" fill="rgb(44,44,44)"/><rect x="1510" y="554" width="10.5" height="10.5" fill="rgb(48,48,48)"/><rect x="1520" y="554" width="10.5" height="10.5" fill="rgb(51,51,51)"/><rect x="1530" y="554" width="10.5" height="10.5" fill="rgb(55,55,55)"/><rect x="1540" y="554" width="10.5" height="10.5" fill="rgb(58,58,58)"/><rect x="1550" y="554" width="10.5" height="10.5" fill="rgb(61,61,61)"/><rect x="1100" y="564" width="10.5" height="10.5" fill="rgb(122,122,122)"/><rect x="1110" y="564" width="10.5" height="10.5" fill="rgb(122,122,122)"/><rect x="1120" y="564" width="10.5" height="10.5" fill="rgb(122,122,122)"/><rect x="1130" y="564" width="10.5" height="10.5" fill="rgb(121,121,121)"/><rect x="1140" y="564" width="10.5" height="10.5" fill="rgb(118,118,118)"/><rect x="1150" y="564" width="10.5" height="10.5" fill="rgb(114,114,114)"/><rect x="1160" y="564" width="10.5" height="10.5" fill="rgb(108,108,108)"/><rect x="1170" y="564" width="10.5" height="10.5" fill="rgb(101,101,101)"/><rect x="1180" y="564" width="10.5" height="10.5" fill="rgb(94,94,94)"/><rect x="1190" y="564" width="10.5" height="10.5" fill="rgb(88,88,88)"/><rect x="1200" y="564" width="10.5" height="10.5" fill="rgb(76,76,76)"/><rect x="1210" y="564" width="10.5" height="10.5" fill="rgb(56,56,56)"/><rect x="1220" y="564" width="10.5" height="10.5" fill="rgb(41,41,41)"/><rect x="1230" y="564" width="10.5" height="10.5" fill="rgb(39,39,39)"/><rect x="1240" y="564" width="10.5" height="10.5" fill="rgb(47,47,47)"/><rect x="1250" y="564" width="10.5" height="10.5" fill="rgb(65,65,65)"/><rect x="1260" y="564" width="10.5" height="10.5" fill="rgb(65,65,65)"/><rect x="1270" y="564" width="10.5" height="10.5" fill="rgb(57,57,57)"/><rect x="1280" y="564" width="10.5" height="10.5" fill="rgb(51,51,51)"/><rect x="1290" y="564" width="10.5" height="10.5" fill="rgb(46,46,46)"/><rect x="1300" y="564" width="10.5" height="10.5" fill="rgb(48,48,48)"/><rect x="1310" y="564" width="10.5" height="10.5" fill="rgb(46,46,46)"/><rect x="1320" y="564" width="10.5" height="10.5" fill="rgb(44,44,44)"/><rect x="1330" y="564" width="10.5" height="10.5" fill="rgb(37,37,37)"/><rect x="1340" y="564" width="10.5" height="10.5" fill="rgb(27,27,27)"/><rect x="1350" y="564" width="10.5" height="10.5" fill="rgb(21,21,21)"/><rect x="1360" y="564" width="10.5" height="10.5" fill="rgb(22,22,22)"/><rect x="1370" y="564" width="10.5" height="10.5" fill="rgb(30,30,30)"/><rect x="1380" y="564" width="10.5" height="10.5" fill="rgb(37,37,37)"/><rect x="1390" y="564" width="10.5" height="10.5" fill="rgb(27,27,27)"/><rect x="1400" y="564" width="10.5" height="10.5" fill="rgb(18,18,18)"/><rect x="1410" y="564" width="10.5" height="10.5" fill="rgb(16,16,16)"/><rect x="1420" y="564" width="10.5" height="10.5" fill="rgb(20,20,20)"/><rect x="1430" y="564" width="10.5" height="10.5" fill="rgb(28,28,28)"/><rect x="1440" y="564" width="10.5" height="10.5" fill="rgb(31,31,31)"/><rect x="1450" y="564" width="10.5" height="10.5" fill="rgb(30,30,30)"/><rect x="1460" y="564" width="10.5" height="10.5" fill="rgb(29,29,29)"/><rect x="1470" y="564" width="10.5" height="10.5" fill="rgb(32,32,32)"/><rect x="1480" y="564" width="10.5" height="10.5" fill="rgb(36,36,36)"/><rect x="1490" y="564" width="10.5" height="10.5" fill="rgb(41,41,41)"/><rect x="1500" y="564" width="10.5" height="10.5" fill="rgb(46,46,46)"/><rect x="1510" y="564" width="10.5" height="10.5" fill="rgb(50,50,50)"/><rect x="1520" y="564" width="10.5" height="10.5" fill="rgb(54,54,54)"/><rect x="1530" y="564" width="10.5" height="10.5" fill="rgb(57,57,57)"/><rect x="1540" y="564" width="10.5" height="10.5" fill="rgb(61,61,61)"/><rect x="1550" y="564" width="10.5" height="10.5" fill="rgb(64,64,64)"/><rect x="1100" y="574" width="10.5" height="10.5" fill="rgb(122,122,122)"/><rect x="1110" y="574" width="10.5" height="10.5" fill="rgb(122,122,122)"/><rect x="1120" y="574" width="10.5" height="10.5" fill="rgb(121,121,121)"/><rect x="1130" y="574" width="10.5" height="10.5" fill="rgb(119,119,119)"/><rect x="1140" y="574" width="10.5" height="10.5" fill="rgb(116,116,116)"/><rect x="1150" y="574" width="10.5" height="10.5" fill="rgb(112,112,112)"/><rect x="1160" y="574" width="10.5" height="10.5" fill="rgb(107,107,107)"/><rect x="1170" y="574" width="10.5" height="10.5" fill="rgb(100,100,100)"/><rect x="1180" y="574" width="10.5" height="10.5" fill="rgb(93,93,93)"/><rect x="1190" y="574" width="10.5" height="10.5" fill="rgb(85,85,85)"/><rect x="1200" y="574" width="10.5" height="10.5" fill="rgb(72,72,72)"/><rect x="1210" y="574" width="10.5" height="10.5" fill="rgb(56,56,56)"/><rect x="1220" y="574" width="10.5" height="10.5" fill="rgb(46,46,46)"/><rect x="1230" y="574" width="10.5" height="10.5" fill="rgb(44,44,44)"/><rect x="1240" y="574" width="10.5" height="10.5" fill="rgb(50,50,50)"/><rect x="1250" y="574" width="10.5" height="10.5" fill="rgb(58,58,58)"/><rect x="1260" y="574" width="10.5" height="10.5" fill="rgb(53,53,53)"/><rect x="1270" y="574" width="10.5" height="10.5" fill="rgb(50,50,50)"/><rect x="1280" y="574" width="10.5" height="10.5" fill="rgb(42,42,42)"/><rect x="1290" y="574" width="10.5" height="10.5" fill="rgb(31,31,31)"/><rect x="1300" y="574" width="10.5" height="10.5" fill="rgb(36,36,36)"/><rect x="1310" y="574" width="10.5" height="10.5" fill="rgb(40,40,40)"/><rect x="1320" y="574" width="10.5" height="10.5" fill="rgb(39,39,39)"/><rect x="1330" y="574" width="10.5" height="10.5" fill="rgb(26,26,26)"/><rect x="1340" y="574" width="10.5" height="10.5" fill="rgb(17,17,17)"/><rect x="1350" y="574" width="10.5" height="10.5" fill="rgb(16,16,16)"/><rect x="1360" y="574" width="10.5" height="10.5" fill="rgb(16,16,16)"/><rect x="1370" y="574" width="10.5" height="10.5" fill="rgb(21,21,21)"/><rect x="1380" y="574" width="10.5" height="10.5" fill="rgb(29,29,29)"/><rect x="1390" y="574" width="10.5" height="10.5" fill="rgb(25,25,25)"/><rect x="1400" y="574" width="10.5" height="10.5" fill="rgb(19,19,19)"/><rect x="1410" y="574" width="10.5" height="10.5" fill="rgb(18,18,18)"/><rect x="1420" y="574" width="10.5" height="10.5" fill="rgb(21,21,21)"/><rect x="1430" y="574" width="10.5" height="10.5" fill="rgb(27,27,27)"/><rect x="1440" y="574" width="10.5" height="10.5" fill="rgb(32,32,32)"/><rect x="1450" y="574" width="10.5" height="10.5" fill="rgb(34,34,34)"/><rect x="1460" y="574" width="10.5" height="10.5" fill="rgb(35,35,35)"/><rect x="1470" y="574" width="10.5" height="10.5" fill="rgb(37,37,37)"/><rect x="1480" y="574" width="10.5" height="10.5" fill="rgb(40,40,40)"/><rect x="1490" y="574" width="10.5" height="10.5" fill="rgb(45,45,45)"/><rect x="1500" y="574" width="10.5" height="10.5" fill="rgb(49,49,49)"/><rect x="1510" y="574" width="10.5" height="10.5" fill="rgb(53,53,53)"/><rect x="1520" y="574" width="10.5" height="10.5" fill="rgb(57,57,57)"/><rect x="1530" y="574" width="10.5" height="10.5" fill="rgb(60,60,60)"/><rect x="1540" y="574" width="10.5" height="10.5" fill="rgb(63,63,63)"/><rect x="1550" y="574" width="10.5" height="10.5" fill="rgb(66,66,66)"/><rect x="1100" y="584" width="10.5" height="10.5" fill="rgb(122,122,122)"/><rect x="1110" y="584" width="10.5" height="10.5" fill="rgb(121,121,121)"/><rect x="1120" y="584" width="10.5" height="10.5" fill="rgb(120,120,120)"/><rect x="1130" y="584" width="10.5" height="10.5" fill="rgb(118,118,118)"/><rect x="1140" y="584" width="10.5" height="10.5" fill="rgb(115,115,115)"/><rect x="1150" y="584" width="10.5" height="10.5" fill="rgb(111,111,111)"/><rect x="1160" y="584" width="10.5" height="10.5" fill="rgb(106,106,106)"/><rect x="1170" y="584" width="10.5" height="10.5" fill="rgb(100,100,100)"/><rect x="1180" y="584" width="10.5" height="10.5" fill="rgb(93,93,93)"/><rect x="1190" y="584" width="10.5" height="10.5" fill="rgb(84,84,84)"/><rect x="1200" y="584" width="10.5" height="10.5" fill="rgb(73,73,73)"/><rect x="1210" y="584" width="10.5" height="10.5" fill="rgb(62,62,62)"/><rect x="1220" y="584" width="10.5" height="10.5" fill="rgb(55,55,55)"/><rect x="1230" y="584" width="10.5" height="10.5" fill="rgb(53,53,53)"/><rect x="1240" y="584" width="10.5" height="10.5" fill="rgb(55,55,55)"/><rect x="1250" y="584" width="10.5" height="10.5" fill="rgb(55,55,55)"/><rect x="1260" y="584" width="10.5" height="10.5" fill="rgb(50,50,50)"/><rect x="1270" y="584" width="10.5" height="10.5" fill="rgb(46,46,46)"/><rect x="1280" y="584" width="10.5" height="10.5" fill="rgb(34,34,34)"/><rect x="1290" y="584" width="10.5" height="10.5" fill="rgb(26,26,26)"/><rect x="1300" y="584" width="10.5" height="10.5" fill="rgb(32,32,32)"/><rect x="1310" y="584" width="10.5" height="10.5" fill="rgb(38,38,38)"/><rect x="1320" y="584" width="10.5" height="10.5" fill="rgb(36,36,36)"/><rect x="1330" y="584" width="10.5" height="10.5" fill="rgb(22,22,22)"/><rect x="1340" y="584" width="10.5" height="10.5" fill="rgb(16,16,16)"/><rect x="1350" y="584" width="10.5" height="10.5" fill="rgb(16,16,16)"/><rect x="1360" y="584" width="10.5" height="10.5" fill="rgb(17,17,17)"/><rect x="1370" y="584" width="10.5" height="10.5" fill="rgb(21,21,21)"/><rect x="1380" y="584" width="10.5" height="10.5" fill="rgb(27,27,27)"/><rect x="1390" y="584" width="10.5" height="10.5" fill="rgb(27,27,27)"/><rect x="1400" y="584" width="10.5" height="10.5" fill="rgb(23,23,23)"/><rect x="1410" y="584" width="10.5" height="10.5" fill="rgb(22,22,22)"/><rect x="1420" y="584" width="10.5" height="10.5" fill="rgb(25,25,25)"/><rect x="1430" y="584" width="10.5" height="10.5" fill="rgb(30,30,30)"/><rect x="1440" y="584" width="10.5" height="10.5" fill="rgb(34,34,34)"/><rect x="1450" y="584" width="10.5" height="10.5" fill="rgb(37,37,37)"/><rect x="1460" y="584" width="10.5" height="10.5" fill="rgb(39,39,39)"/><rect x="1470" y="584" width="10.5" height="10.5" fill="rgb(42,42,42)"/><rect x="1480" y="584" width="10.5" height="10.5" fill="rgb(45,45,45)"/><rect x="1490" y="584" width="10.5" height="10.5" fill="rgb(49,49,49)"/><rect x="1500" y="584" width="10.5" height="10.5" fill="rgb(52,52,52)"/><rect x="1510" y="584" width="10.5" height="10.5" fill="rgb(56,56,56)"/><rect x="1520" y="584" width="10.5" height="10.5" fill="rgb(59,59,59)"/><rect x="1530" y="584" width="10.5" height="10.5" fill="rgb(63,63,63)"/><rect x="1540" y="584" width="10.5" height="10.5" fill="rgb(66,66,66)"/><rect x="1550" y="584" width="10.5" height="10.5" fill="rgb(68,68,68)"/><rect x="1100" y="594" width="10.5" height="10.5" fill="rgb(122,122,122)"/><rect x="1110" y="594" width="10.5" height="10.5" fill="rgb(121,121,121)"/><rect x="1120" y="594" width="10.5" height="10.5" fill="rgb(119,119,119)"/><rect x="1130" y="594" width="10.5" height="10.5" fill="rgb(117,117,117)"/><rect x="1140" y="594" width="10.5" height="10.5" fill="rgb(114,114,114)"/><rect x="1150" y="594" width="10.5" height="10.5" fill="rgb(110,110,110)"/><rect x="1160" y="594" width="10.5" height="10.5" fill="rgb(105,105,105)"/><rect x="1170" y="594" width="10.5" height="10.5" fill="rgb(99,99,99)"/><rect x="1180" y="594" width="10.5" height="10.5" fill="rgb(93,93,93)"/><rect x="1190" y="594" width="10.5" height="10.5" fill="rgb(85,85,85)"/><rect x="1200" y="594" width="10.5" height="10.5" fill="rgb(77,77,77)"/><rect x="1210" y="594" width="10.5" height="10.5" fill="rgb(69,69,69)"/><rect x="1220" y="594" width="10.5" height="10.5" fill="rgb(63,63,63)"/><rect x="1230" y="594" width="10.5" height="10.5" fill="rgb(60,60,60)"/><rect x="1240" y="594" width="10.5" height="10.5" fill="rgb(59,59,59)"/><rect x="1250" y="594" width="10.5" height="10.5" fill="rgb(54,54,54)"/><rect x="1260" y="594" width="10.5" height="10.5" fill="rgb(48,48,48)"/><rect x="1270" y="594" width="10.5" height="10.5" fill="rgb(42,42,42)"/><rect x="1280" y="594" width="10.5" height="10.5" fill="rgb(34,34,34)"/><rect x="1290" y="594" width="10.5" height="10.5" fill="rgb(30,30,30)"/><rect x="1300" y="594" width="10.5" height="10.5" fill="rgb(33,33,33)"/><rect x="1310" y="594" width="10.5" height="10.5" fill="rgb(37,37,37)"/><rect x="1320" y="594" width="10.5" height="10.5" fill="rgb(33,33,33)"/><rect x="1330" y="594" width="10.5" height="10.5" fill="rgb(24,24,24)"/><rect x="1340" y="594" width="10.5" height="10.5" fill="rgb(19,19,19)"/><rect x="1350" y="594" width="10.5" height="10.5" fill="rgb(19,19,19)"/><rect x="1360" y="594" width="10.5" height="10.5" fill="rgb(20,20,20)"/><rect x="1370" y="594" width="10.5" height="10.5" fill="rgb(24,24,24)"/><rect x="1380" y="594" width="10.5" height="10.5" fill="rgb(29,29,29)"/><rect x="1390" y="594" width="10.5" height="10.5" fill="rgb(31,31,31)"/><rect x="1400" y="594" width="10.5" height="10.5" fill="rgb(29,29,29)"/><rect x="1410" y="594" width="10.5" height="10.5" fill="rgb(29,29,29)"/><rect x="1420" y="594" width="10.5" height="10.5" fill="rgb(30,30,30)"/><rect x="1430" y="594" width="10.5" height="10.5" fill="rgb(34,34,34)"/><rect x="1440" y="594" width="10.5" height="10.5" fill="rgb(38,38,38)"/><rect x="1450" y="594" width="10.5" height="10.5" fill="rgb(41,41,41)"/><rect x="1460" y="594" width="10.5" height="10.5" fill="rgb(44,44,44)"/><rect x="1470" y="594" width="10.5" height="10.5" fill="rgb(46,46,46)"/><rect x="1480" y="594" width="10.5" height="10.5" fill="rgb(49,49,49)"/><rect x="1490" y="594" width="10.5" height="10.5" fill="rgb(52,52,52)"/><rect x="1500" y="594" width="10.5" height="10.5" fill="rgb(56,56,56)"/><rect x="1510" y="594" width="10.5" height="10.5" fill="rgb(59,59,59)"/><rect x="1520" y="594" width="10.5" height="10.5" fill="rgb(62,62,62)"/><rect x="1530" y="594" width="10.5" height="10.5" fill="rgb(65,65,65)"/><rect x="1540" y="594" width="10.5" height="10.5" fill="rgb(68,68,68)"/><rect x="1550" y="594" width="10.5" height="10.5" fill="rgb(71,71,71)"/></g>
<g transform="rotate(-35 1330 340)"><rect x="1000" y="0" width="660" height="680" filter="url(#tex)" opacity="0.26" style="mix-blend-mode:overlay"/></g>
<rect x="1100" y="85" width="460" height="520" filter="url(#tex2)" opacity="0.2" style="mix-blend-mode:overlay"/>
<path d="M1296 100 C1270 125 1240 180 1222 220 C1205 265 1198 320 1198 375 C1198 420 1204 460 1214 486 C1222 510 1230 535 1240 560" fill="none" stroke="#000" stroke-opacity="0.45" stroke-width="4" filter="url(#blur2)"/>
<path d="M1358 98 C1368 125 1380 160 1390 215" fill="none" stroke="#000" stroke-opacity="0.3" stroke-width="3" filter="url(#blur2)"/>
<g fill="none" filter="url(#wob)"><path d="M1287.0 360.0 L1362.0 282.0 L1410.0 332.0" stroke="#fff" stroke-opacity="0.28" stroke-width="2.2"/><path d="M1287.0 364.0 L1362.0 286.0 L1410.0 336.0" stroke="#000" stroke-opacity="0.16" stroke-width="1.5"/><path d="M1288.5 369.0 L1363.5 291.0 L1411.5 341.0" stroke="#fff" stroke-opacity="0.28" stroke-width="2.2"/><path d="M1288.5 373.0 L1363.5 295.0 L1411.5 345.0" stroke="#000" stroke-opacity="0.16" stroke-width="1.5"/><path d="M1290.0 378.0 L1365.0 300.0 L1413.0 350.0" stroke="#fff" stroke-opacity="0.28" stroke-width="2.2"/><path d="M1290.0 382.0 L1365.0 304.0 L1413.0 354.0" stroke="#000" stroke-opacity="0.16" stroke-width="1.5"/><path d="M1291.5 387.0 L1366.5 309.0 L1414.5 359.0" stroke="#fff" stroke-opacity="0.28" stroke-width="2.2"/><path d="M1291.5 391.0 L1366.5 313.0 L1414.5 363.0" stroke="#000" stroke-opacity="0.16" stroke-width="1.5"/><path d="M1293.0 396.0 L1368.0 318.0 L1416.0 368.0" stroke="#fff" stroke-opacity="0.28" stroke-width="2.2"/><path d="M1293.0 400.0 L1368.0 322.0 L1416.0 372.0" stroke="#000" stroke-opacity="0.16" stroke-width="1.5"/><path d="M1294.5 405.0 L1369.5 327.0 L1417.5 377.0" stroke="#fff" stroke-opacity="0.28" stroke-width="2.2"/><path d="M1294.5 409.0 L1369.5 331.0 L1417.5 381.0" stroke="#000" stroke-opacity="0.16" stroke-width="1.5"/><path d="M1296.0 414.0 L1371.0 336.0 L1419.0 386.0" stroke="#fff" stroke-opacity="0.28" stroke-width="2.2"/><path d="M1296.0 418.0 L1371.0 340.0 L1419.0 390.0" stroke="#000" stroke-opacity="0.16" stroke-width="1.5"/><path d="M1314.0 413.5 A60 54.0 0 0 0 1430.0 413.5" stroke="#fff" stroke-opacity="0.25" stroke-width="2.5"/><path d="M1314.0 416.5 A60 54.0 0 0 0 1430.0 416.5" stroke="#000" stroke-opacity="0.14" stroke-width="1.5"/><path d="M1306.3 415.6 A68 61.2 0 0 0 1437.7 415.6" stroke="#fff" stroke-opacity="0.25" stroke-width="2.5"/><path d="M1306.3 418.6 A68 61.2 0 0 0 1437.7 418.6" stroke="#000" stroke-opacity="0.14" stroke-width="1.5"/><path d="M1298.6 417.7 A76 68.4 0 0 0 1445.4 417.7" stroke="#fff" stroke-opacity="0.25" stroke-width="2.5"/><path d="M1298.6 420.7 A76 68.4 0 0 0 1445.4 420.7" stroke="#000" stroke-opacity="0.14" stroke-width="1.5"/><path d="M1290.9 419.7 A84 75.6 0 0 0 1453.1 419.7" stroke="#fff" stroke-opacity="0.25" stroke-width="2.5"/><path d="M1290.9 422.7 A84 75.6 0 0 0 1453.1 422.7" stroke="#000" stroke-opacity="0.14" stroke-width="1.5"/><path d="M1283.1 421.8 A92 82.8 0 0 0 1460.9 421.8" stroke="#fff" stroke-opacity="0.25" stroke-width="2.5"/><path d="M1283.1 424.8 A92 82.8 0 0 0 1460.9 424.8" stroke="#000" stroke-opacity="0.14" stroke-width="1.5"/><path d="M1163.2 219.4 C1147.0 280.0 1142.0 360.0 1157.6 470.0" stroke="#fff" stroke-opacity="0.22" stroke-width="2"/><path d="M1168.6 221.2 C1156.0 280.0 1151.0 360.0 1164.8 470.0" stroke="#fff" stroke-opacity="0.22" stroke-width="2"/><path d="M1174.0 223.0 C1165.0 280.0 1160.0 360.0 1172.0 470.0" stroke="#fff" stroke-opacity="0.22" stroke-width="2"/><path d="M1179.4 224.8 C1174.0 280.0 1169.0 360.0 1179.2 470.0" stroke="#fff" stroke-opacity="0.22" stroke-width="2"/><path d="M1184.8 226.6 C1183.0 280.0 1178.0 360.0 1186.4 470.0" stroke="#fff" stroke-opacity="0.22" stroke-width="2"/><path d="M1190.2 228.4 C1192.0 280.0 1187.0 360.0 1193.6 470.0" stroke="#fff" stroke-opacity="0.22" stroke-width="2"/></g>
<g fill="none" stroke="#000" stroke-opacity="0.38" stroke-width="2" stroke-dasharray="1.5 4" stroke-linecap="round">
<path d="M1267 284.8 C1262 300 1256 315 1255.6 327.7 C1254 345 1256 360 1252.3 368.9 C1248 380 1239 392 1237.5 401.9 C1236 415 1237 425 1239 434.8 C1243 455 1250 475 1255.6 504"/>
<path d="M1278.7 327.7 C1277 335 1277 342 1275.4 349 C1272 362 1268 374 1265.5 385.4 C1262 397 1258 408 1258.9 418.3 C1260 435 1264 450 1267.1 459.6 C1270 468 1273 472 1275.4 476 C1280 490 1284 500 1286.9 512.3"/>
<path d="M1301.8 332.6 C1301 345 1300 358 1298.5 368.9 C1296 382 1291 392 1290.2 401.9 C1290 415 1296 430 1300.1 443"/>
<path d="M1183 339 C1185 370 1186 395 1188 418 C1190 440 1195 465 1201 484"/>
</g>
<path d="M1135 240 C1120 280 1113 330 1114 380 C1115 420 1122 450 1130 470" fill="none" stroke="#fff" stroke-opacity="0.3" stroke-width="6" filter="url(#blur2)"/>
<rect x="1100" y="85" width="460" height="520" fill="url(#limb)"/>
</g>
<g fill="#00c000" font-size="14.5">
<text x="1228" y="281">Set18-33_body_bulk</text>
<text x="1392" y="326">Set18-33_magnetite</text>
</g>
<g fill="none" stroke="#e0e070" stroke-width="1">
<circle cx="1274.5" cy="344.6" r="51.3"/>
<circle cx="1398" cy="344.6" r="10.6"/>
</g>
<g fill="#fff" font-weight="bold" font-size="14.5">
<text x="957.5" y="640.2">127</text>
<text x="953" y="659">Ch 1</text>
<text x="1002" y="659">MAG: 550x</text>
<text x="1097.5" y="659">HV: 15 kV</text>
<text x="1184" y="659">WD: 13,3 mm</text>
<text x="1292" y="659">Px: 0,29 µm</text>
<text x="1609" y="641">50 µm</text>
</g>
<g stroke="#fff" stroke-width="2">
<line x1="1544.3" y1="648.3" x2="1716.3" y2="648.3"/>
<line x1="1544.3" y1="639.5" x2="1544.3" y2="657"/>
<line x1="1716.3" y1="639.5" x2="1716.3" y2="657"/>
</g>
<circle cx="1731" cy="506" r="2.5" fill="#fff"/>
<g filter="url(#blur2)"><path d="M1280 626 C1282 618 1290 614 1296 615 C1302 617 1304 623 1302 627 Z" fill="#3c3c3c"/>
<g fill="#404040"><circle cx="1054" cy="234" r="6"/><circle cx="1062" cy="243" r="5"/><circle cx="1070" cy="226" r="5.5"/><circle cx="1068" cy="238" r="4"/><circle cx="1081" cy="239" r="4.5"/></g></g>
</g>
<g><rect x="80.5" y="1459.5" width="1618.7" height="30.5" fill="#d9d9d9"/><g stroke="#000" stroke-width="1.2" fill="none"><rect x="80.5" y="1459.5" width="1618.7" height="61.7"/><line x1="80.5" y1="1490" x2="1699.2" y2="1490"/></g><g fill="#000" font-size="22.5"><text x="119.9" y="1483.2" textLength="41.5" lengthAdjust="spacingAndGlyphs">MM</text><text x="204.2" y="1483.2" textLength="156.0" lengthAdjust="spacingAndGlyphs">Spectrum name</text><text x="591.4" y="1483.2" textLength="67.7" lengthAdjust="spacingAndGlyphs">setting</text><text x="672.3" y="1483.2" text-anchor="middle">C</text><text x="696.4" y="1483.2" text-anchor="middle">O</text><text x="714.0" y="1483.2" textLength="55.8" lengthAdjust="spacingAndGlyphs">Na2O</text><text x="782.5" y="1483.2" textLength="48.5" lengthAdjust="spacingAndGlyphs">MgO</text><text x="841.0" y="1483.2" textLength="60.6" lengthAdjust="spacingAndGlyphs">Al2O3</text><text x="914.3" y="1483.2" textLength="45.9" lengthAdjust="spacingAndGlyphs">SiO2</text><text x="975.5" y="1483.2" textLength="53.1" lengthAdjust="spacingAndGlyphs">P2O5</text><text x="1047.1" y="1483.2" textLength="40.1" lengthAdjust="spacingAndGlyphs">SO3</text><text x="1101.5" y="1483.2" textLength="41.0" lengthAdjust="spacingAndGlyphs">K2O</text><text x="1155.3" y="1483.2" textLength="41.7" lengthAdjust="spacingAndGlyphs">CaO</text><text x="1213.2" y="1483.2" textLength="45.6" lengthAdjust="spacingAndGlyphs">TiO2</text><text x="1265.3" y="1483.2" textLength="61.9" lengthAdjust="spacingAndGlyphs">Cr2O3</text><text x="1336.0" y="1483.2" textLength="49.8" lengthAdjust="spacingAndGlyphs">MnO</text><text x="1406.6" y="1483.2" textLength="39.7" lengthAdjust="spacingAndGlyphs">FeO</text><text x="1458.0" y="1483.2" textLength="27.0" lengthAdjust="spacingAndGlyphs">Co</text><text x="1506.8" y="1483.2" textLength="22.2" lengthAdjust="spacingAndGlyphs">Ni</text><text x="1559.0" y="1483.2" textLength="25.4" lengthAdjust="spacingAndGlyphs">Cu</text><text x="1601.2" y="1483.2" textLength="24.8" lengthAdjust="spacingAndGlyphs">Zn</text><text x="1645.2" y="1483.2" textLength="44.3" lengthAdjust="spacingAndGlyphs">Sum</text><text x="83.8" y="1513.5" textLength="105.4" lengthAdjust="spacingAndGlyphs">THMM599</text><text x="204.2" y="1513.5" textLength="203.8" lengthAdjust="spacingAndGlyphs">Set18-32_body_bulk</text><text x="625.1" y="1513.5" text-anchor="middle">1</text><text x="672.0" y="1513.5" text-anchor="middle">0</text><text x="696.9" y="1513.5" text-anchor="middle">0</text><text x="785.7" y="1513.5" textLength="42.7" lengthAdjust="spacingAndGlyphs">16,5</text><text x="855.7" y="1513.5" textLength="31.3" lengthAdjust="spacingAndGlyphs">4,2</text><text x="915.3" y="1513.5" textLength="42.7" lengthAdjust="spacingAndGlyphs">46,1</text><text x="1160.2" y="1513.5" textLength="31.3" lengthAdjust="spacingAndGlyphs">4,1</text><text x="1280.6" y="1513.5" textLength="30.4" lengthAdjust="spacingAndGlyphs">0,2</text><text x="1345.7" y="1513.5" textLength="30.3" lengthAdjust="spacingAndGlyphs">1,3</text><text x="1404.3" y="1513.5" textLength="42.7" lengthAdjust="spacingAndGlyphs">27,5</text><text x="1502.0" y="1513.5" textLength="31.3" lengthAdjust="spacingAndGlyphs">0,2</text><text x="1640.3" y="1513.5" textLength="54.1" lengthAdjust="spacingAndGlyphs">100,0</text></g><text x="84" y="1545" fill="#000" font-size="17.5" textLength="1437" lengthAdjust="spacingAndGlyphs">setting 1: preset elements: C(not unfolding),O,Mg,Al,Si,Ca,Cr,Fe,Ni; optional elements: Na,P,S,K,Ti,Mn,Co,Cu,Zn (values normalized to 100%; measurement poorly calibrated)</text></g>
</svg>
</body></html>
